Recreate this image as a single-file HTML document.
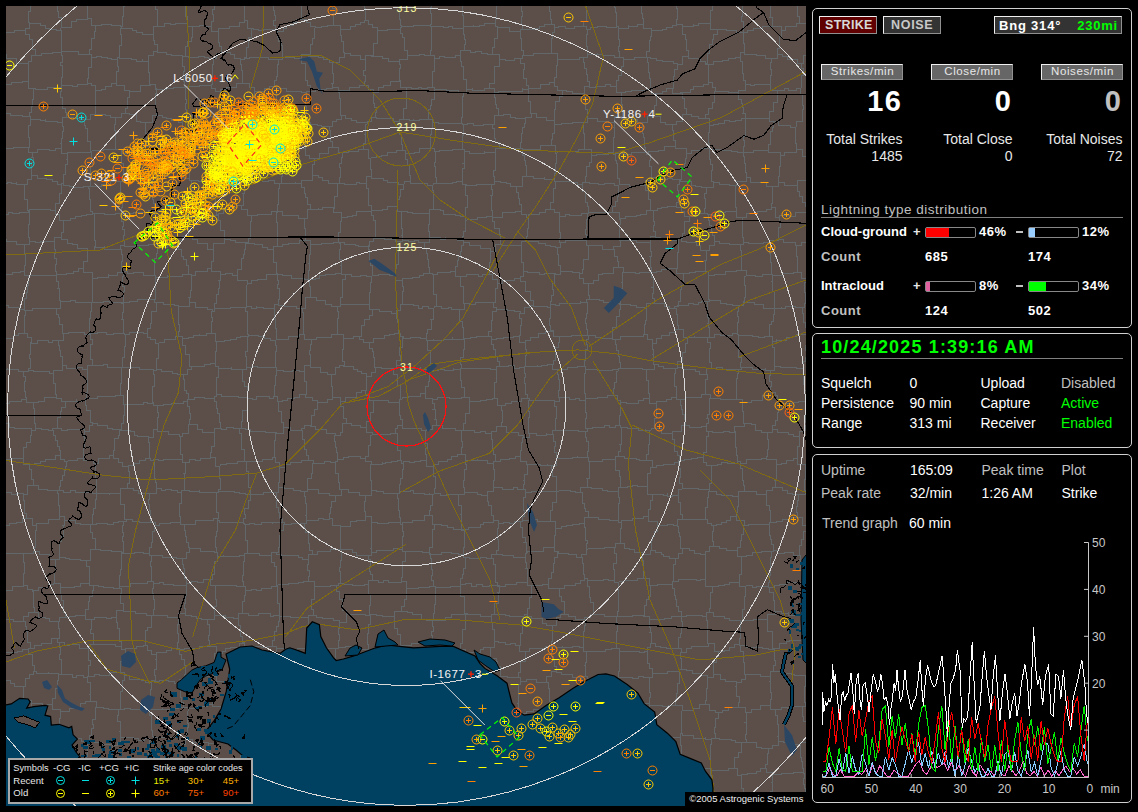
<!DOCTYPE html>
<html><head><meta charset="utf-8"><style>
html,body{margin:0;padding:0;background:#000;width:1138px;height:812px;overflow:hidden;}
body{position:relative;font-family:"Liberation Sans",sans-serif;}
.t{position:absolute;white-space:nowrap;line-height:1;}
svg{position:absolute;left:0;top:0;}
</style></head><body>
<svg width="1138" height="812" shape-rendering="crispEdges">
<defs><clipPath id="mc"><rect x="6" y="6" width="800" height="800"/></clipPath></defs>
<g clip-path="url(#mc)">
<rect x="6" y="6" width="800" height="800" fill="#5c4f4a"/>
<g fill="none" stroke="#62676a" stroke-width="1" shape-rendering="crispEdges"><path d="M-10 334v3h4h4v4M-2 341v6v5h-1v6v7h1M808 739v-6h-2h1v-5v-7h-1h-3v-5h-1v-4v-6h-1M808 739v3h-4h-4v4M800 746v-2h-7v-1h-4v-1h-6v-1h-5M778 741v-5h-1h1v-5v-7h-1v-5v-4h-2v-6h1M801 706h-4h-6v1h-4v2v-2h-6v2h-5M804 804v2h-3M-5 183v4v5h-2v5h1v5h-1v7v4M-2 365v4h3M1 369v6h-1h-4v5v6h-4v4h-1v6M4 423h-4v3h-4v5M4 423v-6h-1v-5h1v-6h-1M3 406v-2h-5h-2v-4h-5v-4M-3 493h2v-1M-1 492h1v-7v-5v-6h1v-4h3v-5v-6M4 459h-3v-2M-4 431v4h1h2v6h-1v5h1v7h2v4M-1 521h1v-6v-6h-2v-4h1h-2v-7v-5M4 423h5v2v2h5v1h7h5h5v2M23 458v-7v-4h3v-5h2h2v-7h1v-5M23 458h-7h-5v1h-7M61 237v2h6v4h5v1h5v4h4h6v2M61 237h-7v5M87 250v7v4h-4v7M56 276v-5h-1v-7h1v-6h-2v-5h1v-4h-1v-7M56 276M56 276v-2h5h5v-1h7v-2h5v-3h5M-10 334v-6h-2v-6v-5h1v-7M-2 341h6v-1v-2h4h5v-2v-1h5v-2h6M-11 310h5v-2v-4h4M-2 304v1h5h5v1v1h7h5v2h4M24 309v1h2M26 310h-1v5h-1v6v7h1h-1v5M34 -5v5h-5M29 0v-2h-5h-5h-6h-5v-1h-6v-1h-5M1 52v3h-4h-6v6M1 52v-7v-7h1v-5h1M3 33h-4v-5h-6v-4M-3 -4v4h-4M801 706h4v-4M804 773h-1v-1M803 772v-4h-1v-7h-1v-4h-1v-5v-6M804 804v-5h1h-2v-4h2v-7h-1v-4h-1v-6h1v-5M805 702h-1v-6v-5h1h-1v-5h1v-6v-4M810 672v4h-5M774 365v-7v-6v-5h-2v-6M774 365v1h6v1h5h7h4v1h7M772 341h4v-2v1h7h3v-3h6v-1h4v-2h6h5v-1M803 368v-7h2v-4h1v-7h-1v-5h1v-6v-5h2M807 333v1h1M803 368M734 431v1h-5v-1h-6v1h-5h-6v-1h-4M734 431h1v6v4v6h1v4h1h-1v4h1v6M737 461v2h-6h-4v-1h-6v2h-4v1h-6M711 465h-5v-3h-3v-5M703 457v-5h3v-4v-7v-5h2v-5M734 431v-5h4h6v-3M744 423h-1v-7v-5h-1v-6M710 398h-1v5v4v7h-2v4h-1h2v5h-2v5M710 398h6h4v1h5h7h4M736 399h6v6M708 431h-2v-3M767 432h5v-3M767 432h-6v-2h-6v-3v-3h-4v-1h-7M770 392v3h-6h-2v1v4h-6h-5v2h-5h-4v3M770 392h5v3h2v4v4h4M772 429v-4h3v-5h2v-8h1v-3h1h2v-6M805 401h-1M805 401h1v-6v-5h-2v-6h1h-2v-5v-6v-5M770 392v-6h1v-5h-2v-6h1v-5M770 370h4v-5M781 403h5h7v-1h5v-1h6M772 429h5v3h6h5v1v1h5v2h6M804 401h1v4v7v3v7h1v3h-1v6M799 436v-5h6M462 -2v1h-5h-6v-1v-2h-6v2h-7h-5v-1M462 -2M433 -3M492 -4h-5v1h-6v-1h-4h-6v1v1h-3h-6M405 -6h5h7v1h5v1v1h5h6M25 244h-1v5v5h1v6v5h-1v6M25 244h-6h-3v-2v-1h-7h-3v-2h-6M24 271h-4v1h-8v2h-3h-6v1h-6M0 239v2h-3h-5v4h-4v4M-12 249v5v6h3v6h-1v6h2M-8 272h5v3M28 275h-4v-4M28 275h6h4h6h7h5v1M54 242v-1h-4h-5h-5v1h-5v-1h-6M29 241v3h-4M-2 304v-5h1h-3v-7h2v-4h-1v-7v-6M24 309v-5v-6h2v-6h1v-7h1v-5v-5M-3 217v-4h-4M-3 217v7h3v3v6h-2h2v6M23 494v-1h-7v1h-5v-2h-6h-6M23 494v6h1v5v8h2v5M-1 521h5v4M26 518h-4v2v2h-6v1h-7v2h-5M1 369h6v-1v1h4h7v3v-1h5M3 406v-3h6v-2h7h5v-2h5v-2M23 371v5h2v5h-1v6v4h1v6h1M23 494h4v-5v-4h6M23 458v6h6M33 485v-6h-2v-5v-5h-2v-5M89 333v1h-5v-2h-6h-5h-5v2v-1h-5M89 333v-6v-4h1h-1v-5h1v-7h1v-3v-6M63 333h-1v-4v-5h-3v-7h-1v-3h-2v-6h-1M91 302h-6h-5h-5v-2h-5v1h-5h-5v-1M60 300v8h-5M56 276v5h2v7h-1h2v6v6h1M26 310h6v-2h5h6h7h5M88 -6h5v-1v1h5h6v1h7h4v-1h7M-7 24v-5h-1h2v-6v-7v-6h-1M776 709h-6v-4M775 671h6v2h4h6v1h3v1h5h6v1M775 671h-5v5M770 676v5h-1h1v8v3h1v7h-1v6M767 432v7h1v5v5h-1v7h-1M737 461h3v2M740 463h6v-2v-2h5h4h6v-1h5v-2M769 525v4v6h1v4h1v5h2v6M769 525v-1h-5h-5h-5h-6v1h-4M744 525h-1v6v3h-2v6h-1v7h-2h-1v4M772 551h-4h-7v1h-4h-5v1v2h-6v1h-5M772 551h1v-1M741 556h-4v-5M769 587v5h1h3v8h1v6v5h1M769 587h5v-2h5v-1h7v-2h6h4h6v-2M775 611h6v2h7v-1v3h4h7h5v1M802 580h2v2M804 582v6h1v6v5v6v4h-1h1v6M804 616v-1h1M800 555h-1M800 555v4h-1h1v5v6h2v6v4M799 555h-6v-3h-3h-6v1h-7v-3h-4M768 586v1h1M768 586v-4h1v-7h1v-5v-5v-3v-5h1v-6h1M810 648h-4v-7h-5v-4M801 637v-6h1v-5h1h-1v-4h2v-6M801 637v3h-6h-6v1h-3v2h-7v4v1h-5M775 611v3h-5h-3v5M767 619v6v6h3h2v5v7v5h2M775 671h-2v-6h2v-5h-1v-6v-5h-1M810 672v-5h1h-1v-7v-6h1h-1v-6M773 649h1v-1M770 676h-4h-6v-2h-6h-3h-6M745 674h-1v-6v-6h-1v-6v-5h-3v-6M773 649h-5v-1h-6v-1h-6v-1v1h-4h-6v-1v-1h-6M768 336h4v5M768 336h-4v1h-6v-1h-6v-1h-3h-6h-5v-1M770 370h-5v-2v1h-6h-7v-1v-1h-5h-6M738 334v6v5h1h-1v6v6h3v5h-1v5h1M736 399v-5v-5h1h-1v-5v-6h2h-1v-5h1v-4M738 369h3v-2M802 87h-1v1M803 121h-1v-5v-7h1v-4h-1v-6v-5h-2v-6h1M250 -10h6v1v1h7h5v2h5M273 -6v-2h4M405 -6h-6v7M369 -4h6h3v1h6v1h6v1h4v1v1h5M343 -12v2h5v1h5h5v4h5v1h4v2M369 -4v2h-2M430 24h1v-6v-5h-1v-6h1v-5h2v-5M430 24v1h-5h-6h-6v1h-6h-6v-1M399 1v5v7v6h1v6h1M250 -10h-6v7M244 -3v-1h-5h-6v1h-6v-1h-5v-1v-1h-6M216 -6M159 -7v-1h6h4v1h4h6v-1M216 -6h-4h-7v2h-5h-5h-6v1v1h-5M179 -8v6h5M491 184h-5v1v-1h-5h-5v1h-4h-6v-1M491 184h3v-3M466 184h-4v-3M494 181v-5h-1v-6h2v-6v-6v-6M495 152h-5h-6v-1v2h-4h-6h-5v-2h-5v1M462 181v-6v-7h2v-5h-2h2v-4v-7M90 333v6h2v5h-2v5v4v6h2v6M90 333h7v-1h5h4v2h7v-1h4h7M92 365h6h5v-1h4v3h5h6h4M122 367v-6h1h-1v-4h2v-6v-5h1v-6v-6M124 333v1h1M489 88h-5v1v1h-6h-6v-2v1h-6M489 88v-5h2h3v-5v-7v-5h3h2v-6M499 60v-6h-7M466 89v-5v-5h-3v-6v-7h-2v-5h-1v-6M460 55v-5h4M464 50h6v1v1h5v-1h6v2h6v1h5M430 24v2h2M462 -2v6v5v6h1v6v6M432 26h6h5v1h5v-1h4v2h7h4M463 27v1M562 90v6h-2h-1v5h-4v3v5h-1v6v5h-3M562 90h4v1h6v2h7h5M582 122h5v-4M582 122h-6h-4v1h-7h-4v1h-7M554 124v-4h-3M587 118v-4v-5h-2v-6h1h-1v-6h-1v-4M562 90h-5v-4h-3v-4M554 82v-5h2v-7v-5h1v-5M583 57h-4v2h-7h-4h-5h-6v1M583 57v5h1v6h2v6h1v7h2v5M589 86h-5v7M489 88h5v4M499 60v-1h6v1h3h6v-2h6M520 58v5h1h3v6h-1v5v4h3v7h2v4M494 92h4v-1h7h5h6h6v-3v1h6M551 120h-5v-2v-1h-5h-5v-3v-1h-5M554 82h-5v2h-4h-5v2v2h-5h-6v1M531 113h-1v-5v-7h-1h-1v-6v-6h1M520 58h2v-3M522 55h6h5v-2h6h6h5M557 60v-7h-7M528 89h1M4 525h1v5v5h-2v5v5h1v6h1M-2 554v-3h7M-2 554v5h-1v5h-2v7h-1v5v6v5h-1M-3 617v-7h1h1v-5v-5v-6M-7 587v7h6M24 333h3v4h4v5M63 333v7h-5M31 342v1h6v-3h6h5v2h4v-1v-1h6M23 371h5v-3M31 342h-1v5v7h-1v4h1v6v4h-2M92 365h-5v4M122 367M120 395v-5v-7h1v-4v-6v-6h1M120 395h-5v1h-6h-7h-5v2h-6h-5M87 369v6v6v5v6h-1v6M90 333h-1M58 340v5h1v5h1v6h2v3v6M87 369h-5v-2h-5v1h-6h-5v-3h-4M28 368v2h5v1h5h6h5v2h4M62 365v5h-6h-3v3M-5 183v-1h1M-7 153v6h1h1v6v5v6h1v6M61 28v-1h5h5v-3v-3h5v-2h6h5v-1M61 28v-4v-7h-3v-6h-1v-3v-5h-1v-6h-1M87 18v-6v-5v-5h-1v-6M86 -4v-2h-7h-5v-1h-7v-3M67 -10h-6v5v2h-6M88 -6v2h-2M34 -5h4h7v1v1h6h4M29 0h1v5v6h-2v5v6h1M61 28h-1v2M60 30h-4v-1h-7v-1h-4v-3h-5v-2h-7h-4v-1M3 33v-1h6h5v-2h5h6v-2M25 28h4v-6M745 674v5h-4v3h-5M736 682v4h-1h1v7v3h3v6h-1v5M770 705h-5h-5v4h-5h-4v2v1h-6M745 712v-5h-7M-2 809h1v-1M-1 808v-5h1v-7v-6v-5h-2v-6h1v-5M-1 774v-4h-3h-5v-2M30 801h-5v1h-6h-5v2h-5v1h-4v1v2h-6M26 740v5h-1v6h-1h1v5v6v7h-2v5M26 740v-2h-5h-6v-2h-4h-5v-1M23 774v-1h-5h-7v1h-6h-6M-9 768h1v-6v-5h1h-1v-4h2v-6h1v-5M6 735v3h-6h-5v4M-6 680v7h-1v5v4h-3v7M6 735v-5h-1v-6h1h-1v-4v-5M-10 703v5h6h3v2h6v5M652 585h5v-1h5v1v-1h6h4M652 585h-2v6v5h-2v3h-1h-1v6h-2v7v4h-1M672 584v4h2v7h1v4h1v7h2v5h2h1v5M681 616M681 616h-5h-5v2h-7v1h-5h-4h-6v1M643 616h6v4M366 808h-6v-2h-6v-3h-5h-5h-5v-2M339 801v1M300 810h2v-4v-5h5v-4h2h4v-5M339 802h-5v-1h-6v-3h-6v-3h-3v-1h-6v-2M-6 680h4v-3M26 700h-5v2v5h-5v3h-4h-3v1h-4v4M26 700h-3v-7v-7h-2M-2 677v3h6h6v1v2h4v3h7M744 491h5h7v3h5h5M744 491h-6v5M769 525v-3h2M744 525v-5h-4h-4v-4M738 496v4v6h-1v6h-1v4M771 522h-1v-6v-6h-1v-5h-2h-1v-7v-4M711 465v5v8v5h-2v6M740 463v5h2v7v5h1v5h1v6M738 496h-6v-1h-4h-7v-1h-5v-2v-1h-6M709 489v2h1M703 457h-6v1h-6v1h-7v1h-5M678 462v-2h1M678 462v6h2v5v4h-1v6h2h1v6M709 489h-6h-5v-1h-5h-5h-6v1M736 682v-1h-6h-5v-2h-5v-2v-3h-7M740 645h-1v-1M713 674v-5v-7h3v-6h2v-5M739 644h-5v1v2h-5v3h-5v1h-6M652 467v-7h-6M652 467h4v-2h7v-1h4h7v-2h4M679 460v-5h-2v-4h-2h-1v-7v-5h-2v-5M651 430h-2v6v3v5h-1v6v4h-2v6M651 430v-2h3M654 428h7v3v2h4h7v1M706 428v-2h-5v1h-6h-6v-2h-4M685 425h-4v2v4h-5h-4v3M588 335v4h-1h-1v5h1v5h-2v6v5h-1v6h-1M588 335h7v2h5v1h7h5M585 368v1h5h7v1h5h5h5v-1h6v2M585 368v-2h-2M614 339h-2v-1M614 339h1v5h1v6h2v6h1v6h1v6M620 368h-2v3M643 334v2h-6h-5h-6h-6v3h-6M643 334h4v5h5v4M646 369h-4v-1h-8h-3h-7h-4M646 369h8v-5M652 343v6h1v5h-1h1v4v6h1M308 581v-5h1v-6h-2v-6h1v-5M308 581h6v7M314 588v-2h5h6h5v-1h6M308 559v-5h4M341 549h-5h-6v2h-7h-6v3h-5M341 549v6v5h-1v7h-1v4h1v6v6h-2M338 583v2h-2M775 308h-1v-7v-3v-7h1h-3v-6v-4h-1h1v-6M775 308h6v-1v1h4v-2h5h5v2v-1h6M801 307h3v-4M804 303h1v-5v-6h1h-2v-4v-6h2v-4M772 275h6h4v-2h5h6v-1h5M806 278h-5v-3v-3h-3M774 309v-1h1M774 309v-1h-6h-5v-2v-2h-4h-5v-2h-5h-6v-1M743 301h1v-4h1v-5v-7h-1v-3v-6h2M746 276v-1h4h5v1h7v-2h4h6M772 274v1M768 336h1v-6v-6h2v-3h2v-7h1v-5M807 333v-6h-1h-1v-5h-2v-4v-5h-1v-6h-1M772 274h-1v-6v-6h-1v-4v-5h-1v-6h1v-5h-1M795 245h1v6v5h1v5v7v4h1M795 245v-3h-5h-7v-3h-5v-2M778 237v3h-4h-5v2M807 239v3h-6v3h-6M738 334h-1v-1M743 301v4h-5M738 305v6h-1v5h1v6h-1v6v5M677 306h1v-5h2v-6v-6h1v-4h1h1v-7v-5h1M677 306v-1h5h6v-1v-1h5v1h5v-2h3v-1h6M707 301h2v-2M709 299h-1v-7v-4v-8v-5M684 273h5v-1h6v1v-2h4h5M704 271h4v4M738 305h-6v-1h-6v-1h-6v-1v-2h-6h-5v-1M737 333h-5v2h-6h-6v-1h-6v3h-5M709 337v-4v-6h-1v-4h-1h1v-6h-1v-5v-6v-5M741 270h5v6M741 270h-5v1h-5h-6v1v2h-6h-5v1h-6M643 24v4h4h4v3M643 24v-6h-1v-5h-1v-6v-4v-5h-1M651 31v-1h5h6v-1h4v-2h6v-2h4v-1M676 24v-5h1v-7v-4h-1v-7h1M677 1h-6v-3h-5v-1h-6v-1v-3h-5v-1h-6M640 -2v-3h3h6v-3M811 214v-2h-4M807 212v-6h-2v-4h-3v-6h-1h-2v-5h-2v-6M808 178v2h-5h-6v5M809 156v5v7v5h-1v5M807 239v-6h2h-1v-5h2v-3v-7h1v-4M779 217v-2h5h5v1h6v-2v-2h7h5M779 217v4h1v6h-2v5v5M773 186h5v-4M773 186h-1v6v4v7h-1v4M779 217h-4v-6v-4h-4M778 182h6v2v1h7h6M646 57v-6h3v-4v-7h1v-4h1v-5M646 57h4v1h6v2h6v1h5h6v2h4v1M682 28v-4h-6M682 28v6h3v5h1v5v6h2v6M688 56h-6v3v5h-5M717 29v5h-3h-1v5h-1v5h-3v4v5h-1h-1v6v4h-2M717 29h-7v-7M710 22v1h-5h-7v2h-5v-1v2h-5h-6v2M688 56v2h6h6v3h5v2M740 57v-5h4M740 57v4h2v8v4h2h-1v7h2v4M770 85v-1h-6h-4h-6v1h-4v-1h-5M770 85v-5v-5h1v-6h-1v-7h1v-4M771 58h-6v-3h-4h-5v-1h-6h-6v-2M808 -11v4h-3v4h-5v3h-3M797 0v-1h-7h-5v-3h-6v-3h-5v-2M620 -8v2h6v2h4v2h5h5M497 1h5h7h7v-2h5v1M497 1h-1v6v5v5h-1v6M521 0v5v6h1v5h-1v8h1v5M495 23v3h2M497 26v1h5h7v2v2h5h6M522 29h-2v2M492 -4v5h5M530 -7h-5v4h-4v3M463 27v-1h6h4v-1v1h6v-1h5v-2h6h5M464 50v-6h1v-5h-1v-5h-1v-6M492 54v-7h2v-4v-5h2h1v-8v-4M522 55h1v-5h-2v-7v-5h-1v-7M620 -8v4h-5M615 -4h-6h-4h-6h-5h-6M551 24v-5h-1v-8h-1v-6h-2v-5M551 24h3v3M554 27h4v-1h7v2h4h5v-2h4h6M560 -8h5v3h5h6v2h5v1h5M560 -8h-4v2h-4v3v3h-5M586 -2h-1v6h1v5v5v7h-3v5h1M530 -7h5v3v2h6v2h6M522 29h6h7v-1h4v-1v-1h5v-2h7M550 53h1v-4v-7v-4h1v-6h1h1v-5M588 -4v2h-2M122 -6v6h4M159 -7v7h-6M153 0h-6v1h-5h-5v-2h-5v1h-6M87 18h4v3v4h4M95 25h6v-1h3h7v2v-1h4h5v1M126 0h-2v6h-1v3v7h-1v4v6h-2M184 -2v5h1v7v6h2v5M153 0v4h2v5h2v7v5v5h1M187 21v2h-5h-7v1h-5v-1h-6v3h-6M120 26h1v2M121 28h5h6v2h4v1v1h6v2h7h4M153 34v-8h5M427 340h6v-1v1h3h7v-1h4h5v-2v2h6h5v-1M427 340v4v6h2h1v6v3v6h1v5M431 370M431 370h7v-1h6v1h4h5v-2v1h7M461 368h-1v1M461 368v-4h-1v-7h2h1v-5v-3h1v-7v-4M464 338h-1M432 274h5v-1v-1h6h7v-1h5v-1M432 274h1v4v7v5v4h2h1v6v6M436 306h5v2h7v-1h3v2h7M461 276h-1v4v6h3v7h1h-1v4v6h1M461 276h-6v-6M464 303v6h-6M402 280v-2h6h4v-1h7v-2h4v-2h7M402 280v6h1v5h-1v6v7M402 304h6h5v1h5v3h4v-2h6v2h6M434 308v-2h2M430 273h2v1M426 339v-6h1v-4h1h3v-7v-3h-1h3v-6v-5h1M426 339v1h1M463 338v-5v-6h-1v-6h-3v-5v-7h-1M402 280h-7v-5M430 273h-1v-6h-1v-5v-3h-1v-6h-1v-5h-2v-6M424 242h-6v-2h-4v2v-1h-6v-1h-6M395 275v-7h1v-4h2v-5v-6v-7h2v-5M402 240v1h-2M490 251h5v-4v-3h7M490 251v-3h-7h-3v-2v-1h-6h-5v-3h-6v-1M502 244h-2v-6v-4h-1v-6h-3h-2v-7h-2v-4M467 220h-2v4v7h-1h-1v5h-1v4M467 220v-1h5h5v-2h6h3v1v-2h6M492 217v-1M463 241v-1h-1M489 274v-7v-5h1v-5v-6M489 274h-7v2h-4v-1v-1h-7h-5v3v-1h-5M455 270v-4h2v-6h1v-4h2v-5h1v-6h2v-4M491 184v5h1v6h-2h1v4v6v5h1v6M466 184h-1v6v5h2v6v6h-2v6h1h-1v5M465 218v2h2M494 181h6v1h6v1h4v3h6M516 186v6h2v6h1v6h2v5M521 209v2h-6v1h-5h-3h-5v3v2h-4h-6M424 242h5v-5M429 237h6h5v2h5v-2v1h5h7v3v-1h5M462 181h-6v1h-4v1h-6h-5h-5M436 183v-6h-1v-5v-6h-1v-4h1v-6v-5h-1M464 152v-3h-2M462 149h-6h-4v1h-7h-6v1h-5M156 368v1h5v2h6h5v2h5v1h6M156 368v-6v-4h2v-4h1h-1v-7v-4h1M182 338v-2h-3M182 338v7h3v3v6h3h1v6v6h2M191 366v3h-4v5h-4M159 343v-1h5v-3h4h7v-1v-2h4M122 367h6h5h6v2h4h5h5v1M153 370h3v-2M125 334h4v-1v-1h7h7v1h4M159 343h-4v-4h-5v-2h-3v-4M521 209v5h5v3h2M521 245h-6h-7h-6v-1M521 245v-4h5M526 241v-5h1v-8h1v-4v-7M646 152h-6h-6h-3v2h-7v-1h-5h-4v1M646 152h-1v-5h-1v-6v-4h-1v-4h-1v-6v-5M642 122h-5v-3h-5v-1h-6h-5v-2M614 122v-6h7M614 122v5h-1h1v4v6h-1v5v4v6M613 152v2h2M645 185v-5h4h2v-3M645 185h-6h-4v1h-6v-1v-1h-6h-4M646 152v2h2M648 154h2v6h-1v6h2v4v7M615 154v6h1v3h1v6v5h1h-1v4h2v6M432 26h-1v6v6v5v7h-1v5M460 55h-5v1v1h-7h-4v-1h-5v2h-5M430 55h4v3M492 124h2v-5v-4h4M492 124v4h2v5v5h1v4h2h2v6M498 115h5v-1h7v1v2h5v1h5h5v-1M525 117v6h-1v4h-2v6h-1v4v5h1h-2v6M499 148h4v1v-1h6h7h4M495 152v-4h4M462 124h1v6v5h-1v4v4v6M462 124h5v-1h6v2h5h5v-1h4h5M494 92v5h1v7h1v4h2v7M531 113v4h-6M551 145h-5h-6v2v2h-6h-7h-5v1M551 145v-6h1v-6h2v-4v-5M522 150v-2h-2M522 150v5h2v5h1v5h1v5v6h1M516 186h6v-5v-5h5M-9 61h1v5v7h-1v5v4h1M-7 153h4v-6M-3 147h-1v-6v-4h-2v-7h-3v-5h-1M-8 82h7v4M-1 86h2v7v4v5v5h3v6M-10 125v-5h5v-3h6h3v-4M-3 217v-1h6v-2h5v-2h4v1h7v-1h4h5v-2M-4 182h6v1h5v-1h4v1h5v-1v2h6M22 184h2v5v5v5h3v6v5h1M29 241v-4h-1v-5v-8h1v-5v-3v-6M28 210h1M117 59h-6v-1h-4v-1h-6v-1h-5v1h-5v-1M117 59v7h1v5h-2v5v7M95 90h6v-1h4v-3h6v-2v-1h5M95 90v-5h-4v-2h-4M87 83v-5h1v-6v-5h2h1v-6v-5M95 25v6h-1v7h-2h-1v4v7h-2v5M119 57v-6v-6h2v-5v-6h-1v-6h1M119 57h-2v2M89 54h2v2M803 772h-5h-5v1h-5h-7v1h-3h-6v2M778 741v4h-6v3h-5M772 776v-4h-2h-4v-4M767 748h1v5h-1v6v5h-2v4h1M745 712h1v4v6h-2h2v5v7h-1v5h1M767 748h-6v-1h-5v-4v-1h-4h-6v-3M743 799h5h6h6v1h5v2h5M743 799v4h-6M771 803h-1v-1M772 776v6h-1h1v5v4h-2v7h-1v4h1M766 768h-6v2v1h-4v2h-5h-4v1h-6v1M741 775v7v6h2v5v6M713 803v-1h6h6v2h5h7v-1M801 806h-4v-1h-6h-6v-2h-5h-4v1v-1h-5M26 740v-2h4M26 700h5v3M30 738v-4h1v-7v-3v-6h-1v-5h1v-4v-6M58 675v5h-1v8h-2v4v6h-2h-1v6M58 675v-2h-6h-4v-1v1h-7h-5v-2M36 671h-3v3h-4v4h-4v4v4h-4M31 703h5v1v-1h6v2h5v-1h5M23 774v1h1M30 801v-2h2M32 799v-6h-2v-3v-5h-3v-4v-6h-3M88 801h-5v-1h-6v-1v-2h-5h-3v-1v-1h-6M57 800h6v-5M469 402v-5h-4M469 402v5v6h-1h-3v4v6h-2v6M465 397h-4v1h-6h-6v-1h-6h-6v2h-5v-1M463 429v1h-2M461 430h-6v-1v-1h-3h-5h-5v-3h-6M432 398v5h2v6h-2h3v6v4h-1h2v6M425 392v-6h3v-5h1v-5v-6h2M425 392v6h7M460 369v6v5h1v7h3v5v5h1M585 368v5h-1v4v6v5v5h1v5M618 371h-2v6v5h-2v6h-1v7M585 398h5h7v-1h5h5v-2h6M583 366h-6v1h-5h-5v2h-5h-5M559 397h-1v-7h1v-4v-7h-1v-5h-1v-5M559 397h5h5v2h6v-1h4v1v1h5M585 398v2h-1M646 369v5v6h1h1v6v7h1v5M649 398h-6v1v1h-5v3h-7h-5v-1h-6v2M620 404v-4h-3v-5h-4M518 801h6v-6M524 795h6v3v1h4v3h7h4v3v2h6M435 804h5v-1v1h6h4h6v-1M618 805h-5v-2h-6h-3h-5v-1h-5v-1h-6M518 801h-6h-5h-5v1h-6v1h-5M587 798h1v3M587 798v-1h-6v2h-5h-7h-5v-2v1h-6M551 807v-5h4h3v-4M618 805h3v-1M621 804h5h6v1h4h6M366 808h4v-4h2v-5v-4h5M398 800v-1h-5h-5v-2h-7h-4v-2M435 804h-2v-3M433 801v-1h-6v1h-4h-6v-2h-4v-1v2h-7h-5v-2M398 800v-2h3M366 769h-5v2h-6v2v2h-6M366 769h5v4M349 775h-2v5h-3v5v5h-2v6h-1h-2v5M371 773v6v4h3v6h2v6h1M349 775h-6v-5v-2h-5M313 792h-1v-6h-3v-6h-1v-5M308 775v-1h1M309 774h5v-3h7v-2h5h7h5v-1M366 769h2v-7v-4h-2h2v-6v-6M368 746h3v-3M371 773h5h7v-3h4v-1h5v-2h7h5M371 743v-1h6v1h4h4v1v-1h6v-1h4h6v1M401 743v6v6h1v6h1h1v6M401 798v-6h1h2v-5v-5v-7h3v-5M404 767h3v3M587 798v-5h2h-1v-6v-5h2v-6M621 804v-6h-2v-4h1v-6h-1v-6v-4v-5h-1M618 773h-5v1h-5v1h-7h-5v1h-6M153 402v1h-6v-1h-4v2h-6h-6v1v-1h-4M153 402v3h4M157 405v7h1v5h-1v5v7M127 404h-3v4v7h-1v5v3h-2v6h-2M157 429h-4v3v5h-5M148 437v-1h-5h-6v-1h-3v-2v-2h-4v-1h-5h-6v-1M119 429M120 395h3v6v3h4M153 370v4h1v8v4h-2v5h1h-1v7v4h1M188 399v-6h-2v-3h-2v-6v-5h-1v-5M188 399h-1v2M187 401h-4v2h-6h-6v1h-3h-5v1h-6M86 398h-1v2M85 400v5h1v5h2h2v6v6h2M92 422v1h5v2h6h4v2v1h5v1h7M150 458h-1v-5v-6h1h-1v-5h-1v-5M150 458h-5v2h-6v3h-5v2h-6v1M128 466h-6v-4h-4v-4h-5v-3M113 455v-5h1v-6v-6h2h2v-3h1v-6M83 458v2h6h4v3M83 458v-6v-5h1v-4v-7h-1h1v-5M93 463h5v-2v-3h5h6v-2v-1h4M92 422v3h-3v6h-5M-2 677h2v-6v-5h-1v-7h1v-6h1M-1 651h2v2M-3 617h1v1M-1 651h-1v-5v-6v-6h1v-6h-2v-3v-7h1M36 671h-2v-6h-2v-5v-6h-2h-2v-5M1 653v-1h5h5h6v-1h5v-2h6M300 810v-1h-6v-2h-5h-4h-5v-2M308 775h-5h-6v1h-6h-4v-2v1h-7M280 805h-1v-5h1v-6h-1v-5v-4h2v-5h-1v-5M766 456v3h6h4v5M766 494v-4h6v-3h3M775 487v-7h-1h2v-4v-7v-5M799 436v5v5h-1h-1v6v6M776 464h5v-1h5v-1v-2h7v-2h4M804 464h-7v-6M806 525h-4v-4v-4h-5M797 517v-5h1h-2v-6h1v-6h1v-6M805 490v4h-7M799 555v-5v-5h2v-6h2v-4v-4h2h1v-6M771 522h5v-1h6v-2h6h3v-2h6M775 487h7v3h5v3h5v1h6M804 464h1v4v6v5h-1v7v4h1M652 467h-2v6h-3v7v6M647 486v8h5M682 489h-4v6M678 495h-6v1h-5v-3v2h-4v-1h-6h-5M682 548h7v2h5v3h6v1h5M682 548h-2v-5v-7h-1v-4h-1v-6h-1M677 526v-7h7M684 519h7h7h5M711 525v-2h-4v-4h-4M711 525h2v6h-1v5v5h1v5M713 546h-4v5h-4v3M705 579h-5v1h-4v-1h-6h-6h-6v2h-4M705 579v-4v-7v-4v-5v-5M674 581h-1v-6v-7v-4h2v-6h-1M674 558h4v-5h4v-5M710 491h-2v6h-1v5v5h-1h-1v7v5h-2M678 495v7h2v6v6h2v5h2M736 516h-6v2v2h-4v2h-5v2h-5v1h-5M737 551v-1h-7h-4v-2h-7v-2h-6M742 619v2h-2M742 619v-6v-4h2v-6v-7h1v-4v-6h1M740 621v-1h-4h-7v-2h-5v-1v-1h-5h-6v-3v-1h-4M709 612v-4h1v-5v-7v-4h1h1v-6M712 586h6v-1h6v-1h5v-1v-1h3h7v-2M739 580v6h7M767 619h-4h-5h-5v1h-6h-5v-1M739 644v-6h1v-5v-6v-6M768 586h-5h-7v1h-4v-2h-6v1M708 643h6v3v5h4M708 643h-1v-5v-6v-6v-6h-1v-5M706 615v-3h3M672 584v-3h2M681 616h5v-1h5h4h7v1h4v-1M705 579v7h7M741 556v6h1h-1v5v7h-2v6M674 308h-5v-2h-5v-3h-5h-5M674 308h2v6h1v4v7h1v4h1M643 334h1v-4v-6h1v-4h1v-6v-6M652 343h4v-2v-3h5v-3h5h3v-2v-1h6v-3h4M654 303h-8v5M612 338v-7v-4h3h1v-6v-5h1h2v-7h1v-5M646 308v-1h-5h-5v-1v-1h-6v-1h-4h-6M738 369h-5h-7h-4v-2h-6v1h-5M709 337h-1M708 337h-1v5h3v6h-1v4v6v4h2v6M674 308v-2h3M679 329h4v4v4h5M708 337h-5h-6h-3v-1v1h-6M676 268v5h8M676 268h1v-6v-6v-4h1v-5v-7M706 250h-6v-1v-4h-4v-3h-5h-5v-1h-5v-3M706 250v5v5h-2h1v6v5h-1M678 240v-2h3M645 185v5h3v4v5h2v6v5h1M679 179h-7v-1h-5v1h-5v-1h-6v-1h-5M679 179h1v1M651 210M651 210h6v-2h4v-1h6v-1h4h5v1M680 180h-1v4h-2v6h1v6v6h-1h-1v5M655 236v-5h-2v-6h1v-4h-1v-5v-6h-2M655 236v1h5v1h6h6v1v1h6M681 238h1v-5h2v-7v-5h3h2v-5M676 207h5v4h3v3v2h5M338 583h5v1h5h4v1h5h7v-1h4M336 585v6h1h2v5v3h3v7v4h3h1v6M368 584v4v6h1h1v6v5h-1v5v4h1M370 614M346 616v-2h5h6h8v1h5v-1M314 588v6v5h-2h-1v5v5h2v6h-2M346 616v6h-7M311 615h5v2h6v1h7h4v2h6v2M370 614v5v5h-1h-1v4v5h-1v7v4h1v5h-1M367 649h-6v-1h-5v-2h-7h-4v1h-7v-2M339 622v6h-1v6h1v6h-1v5M58 675v-1h3M52 704v5h4h4v4M90 701h-5v2h-5v2v2h-5v1h-6v3h-4h-5v2M90 701v-7h-1h1v-6v-6h-3v-5M61 674h5h6v1v2h4v-2h7v2h4M341 549M372 580h-4v4M372 580v-6h-2v-3h-1v-5h1v-7h-1h-1v-4M368 555h-6h-6v-3h-4v-1v-2h-5h-6M312 554v-4h-3v-7h-1v-4v-7h-3v-4h-1v-5h-1M306 520v3h-3M306 520h5h7v-2h5v1h6v-1M341 549h-1v-6v-3v-6v-5M329 518h3v5v2h5h3v4M646 57h-6h-6v2h-5h-6v2M646 57h1v5h1v6v4h1v6h1v5v6h1M623 61v5h-1h-1v4v5h-3v5h-2v5M651 89h-4v1h-7v1v-1h-3h-6v2v-1h-6v1h-4M616 85v7h5M656 93h6v-2h4v-3h6M656 93h-5v-4M646 57M672 88h1v-5v-7h1v-7h2h1v-5M654 116v-6v-5h1h1v-6v-6M654 116h-7v3v3h-5M621 116h1v-7v-5h-1v-5v-7M587 118h6h4v1v2h6h5v1h6M589 86v1h6v-1h5h5v-2h5v2h6v-1M711 -3v-1h-5v2h-5v-1h-6h-4h-7v2v-1h-4M677 1h3v-3M710 22v-6v-6h2v-4v-7h1M713 -1h-2v-2M768 149v-5h2v-7v-6h2v-4h1v-6M768 149v3h6h6v5M780 157v-2h4v-3h7h5v-3M796 149v-6h-1v-5v-5v-6h1M796 127h-6v-2h-4h-8v-2v-2h-5M769 117v1h-6h-6h-5v1v-1h-6M769 117v4h4M746 118h-1v7v5v6h-1h-1v4h1v6h-1v6M743 152h4h6v-1v-1h5h6h4v-1M746 177h4v1v4h7h6h3v2v2h7M746 177v-5h-1v-5v-4h-1v-7h-1v-4M778 182v-6h1v-3h1h-1v-7h1v-3v-6M743 152M809 156h-7v-3v-4h-6M803 121h-7v6M801 88h-5v2h-8v-2h-4v2h-7M777 90v6v6h-4v4v5h-1h-3v6M672 88v5h8M705 63v1h1M706 64h2v7v4v7M708 82v2h-5v2h-5h-5v3h-3v3h-6h-4v1M770 85v5h7M745 84v6h-2h-5v3M746 118h-1M738 93v6h3v4h1v4h1v6h-1h3v5M740 57h-5v1h-7v2h-6v1h-6h-3v3h-7M708 82h4v5h3v4M738 93v-1h-6h-4v-1h-7h-6M781 30v6h-2v5v7h-1h-1v6M781 30h4v-1v-3h7h4v-2v-1h4M808 28v-5h-8M808 28v5v6v5h1v6h-1v5M777 54h5v2h5v3h5h5v1v3h4M808 55h-5v4v4h-2M797 0v7h1h-1v3v6h2v7h1M802 87h-1v-5v-7h2v-7h-2v-5M771 58h6v-4M742 32M742 32h1v-6v-5h-1h-1v-5h1v-7v-4h1v-7h-1M742 32h5v-2h6v-2h4h5v-1v-1h5h5M772 26v-6v-3h-3h1v-5v-7h-3h1v-4v-5h-2M766 -4h-7h-3v1h-7h-6M742 -2v-1h1M717 29h6h3v1h7h3v3v-1h6M744 52v-4v-5h-1v-6v-5h-1M713 -1h6h5v-1v-1h5h8v1h5M781 30v-4h-9M774 -9v5h-8M618 28v6v5h1v7h-1v5h1v6M618 28v-2h-2M616 26v1h-5h-5v-1h-5h-4v1h-7v2h-4M619 57h-5v-2h-6h-6v-1h-5v-1v1h-6h-4v-2M587 52v-6h-1v-6v-6h1v-5h-1M643 24h-6v2h-4h-5v-1v3h-4h-6M623 61v-4h-4M615 -4h-1v5v6h2h-1v5h1v4v4v6M584 26h2v3M583 57h4v-5M216 -6v6h-1v5h-1v4h-2v5h1v7h-2v5M187 21v5h6M193 26h6v-1h6v1h6M244 -3v6h-1h1v7v4v6M244 20v2h-5v4h-5h-5v2h-6h-5v3M211 26v5h7M369 245v-4h4v-3h4M369 245v1h-4h-7v-1h-3v-1h-7h-4v-2h-5v1M377 238h-2v-6v-5v-7h-2v-5h-2v-5M371 210v1h-4h-7h-4v2v2h-4v1h-5v1h-6M341 217v4h-1v6v5h-2v6v4M339 243v-1h-1M395 275h-6v-1h-4h-7v1h-6M372 275v-4v-6h-2v-4h-1v-7v-5h-1v-4h1M400 241h-5v-2h-7h-4v-1h-7M466 89v3h-3M462 124v-1h-1M463 92v4h-1v6v6v4v5h-1v6M402 304h-2v6h-4v3M426 339v-1h-6v-1h-5h-5v1h-7v-2M396 313v5h1v4h1v6v5h2M403 336h-3v-3M431 370v-1h-4h-7v-2v1h-5h-4h-5v-1h-5v-1v-1h-5M403 336h-1v5v6h-3v8h1v5h-4v5M188 399h6v-2h4h6v1h4h6v-2M187 401v5h2v7h1v6h-1v5h2M221 428h-1v-6h-1v-6v-3h-2v-5h-1v-7h-1h-1v-5M221 428h-7v5M214 433v-1h-6h-6v-3h-5v-2v-3h-6M157 429v2h5h6v2v1h5h6v2M191 424h-3v4v5h-6v3h-3M153 460v-1h5v1h5v-1h7h5h7M153 460h1v5v5v8h1v4h1v6M156 488h5v2h4v-1h6v1h6v2h4M182 459v3h3M185 462v6v5h-2h1v5v7v5h-1M181 492v-2h2M150 458v2h3M179 436h1v6v6v6h2v5M210 457v1h-6h-4v2h-5v-1h-6v2v1h-4M210 457v-5h1v-6h3v-7v-6M365 516v4h-6h-3v1h-6v3v2h-6h-4v3M365 516v-5h-1v-6v-4h1v-6M329 518v-5h1v-6h1v-6h2h2v-6M365 495h-6v-2v-1h-5h-6v-2v-1h-7M335 495h6v-6M237 275v-6h1h3v-4v-7h2v-4h1v-5h1v-6h2M237 275h-5v-1v-1h-7v1h-5M220 274v-3h-5h-4v-3M247 243v-1h-6h-6v-2h-5v-1h-6M224 239v4h-4h-7v6M211 268v-7h2v-5v-7M178 308v-3h-4v-1h-6h-5v-1v-1h-6M178 308v-2h6h5v-4M189 302v-5h-1h2v-7h1v-5v-5h1h-1v-5M155 277v6v6v6v4h-1M155 277h6h6v-2v1h5h5h5v-2h7M189 274h2v1M157 302h-3v-3M147 333v-5h3v-5h1v-5v-7h2h3v-4v-5h1M179 336h-1v-5h1v-7h-1v-4v-7v-5M211 268h-4v1v2h-6h-6v3v1h-4M213 249h-6v-3v-3h-4h-6v-1v-3h-5v-3h-5M187 236h-5v4h-4v5M178 245v4h1h2v7h2v3h3v6h2v5v4h1M122 271h1v5h-1v6v4h1h1v5h-1v5v6M122 271v1h-5v3h-4h-5v-1v3h-5h-6v1h-5v1M92 301v-6v-5h1h-1v-5v-6M92 301v1h5h6v-1h6v2v-1h5h7v1M121 303v-1h2M83 268v4h3h6v7M91 302h1v-1M124 333h-1v-4v-6v-4h-2h1v-7h1v-3v-6h-2M154 299h-5h-5h-7v2h-3h-5v1h-6M122 271h5v2h6v-1h5h5v2v1h6h5M122 271h-1v-5v-5h1v-7h-1v-5h-1M120 249v-4h4M124 245v1h5h6v-1h4h5h4v-1h6M154 275v-5v-6v-6h2v-5h1v-6M154 244h3v3M155 277v-2h-1M122 271M94 246v4h-7M94 246v1h6h4v-1v3h6h4h6M94 246h1v-6h-1v-4v-6v-7v-5v-5M122 215h-1v6h2v5h-1v3h2v6h-1v5h1v5M122 215v-1h-1M121 214v-1h-6v1h-6h-5v-1h-4h-6M122 215v-2h5h6v-1h4h6h5v-2h6v-1M154 209v5h1v4v7v3v5h-2v7h1v4M178 245h-6h-5v2h-4h-6M182 56v-1h-4h-7v-1h-5v-1v-1h-3h-6v-1M182 56v5h1h-1v5h2v5h-1v6v4h1v5M150 84h5v4M150 84h-1v-5v-7h-1v-6v-5M155 88v1h5h6v-1h7v-1h5h6M184 86v1M148 61v-6h5v-4h4M153 34v6h1v4h3v7M193 26h-1v5v6h-1v4h-2h-2v5h-2v4v6h-2M183 56h-1M119 57v1h6h6v1h5v2h6v-2v2h6M129 92v-2h-5v-5h-3h-5v-2M129 92v-1h5h6v-4v-2h4h6v-1M145 122h7v-3v-4h4M145 122v5v6h1v4v6M156 115h6v2h4v1h5v1v1h7v2h4M146 143v3h6v3h6M158 149h5v-1h8v-3v-1h4v-2h6M182 122v6h-1h1v5v5h-1v4M125 113v-5h2v-6v-5h1h1v-5M125 113h4v1h7v5v2h4v1h5M155 88h1v5h-1v6v5v5h1v6M186 116v-7h-1v-6h1v-4h-1v-7v-5h-1M186 116h-4v6M189 177v-5h-2v-5h1v-5v-6h-1v-4h-1v-6M189 177v1h-5v-1h-6h-5v-1h-7h-4v2h-6M186 146v-4h-5M156 178v-6h1v-5h1v-6h-1v-7h1v-5M186 146v1h5v-1h6h6h6h6v-1M215 145h-1v-5v-7h1v-4h1h-2v-8h1v-5M186 116h5v-1h6v1h6v1h5v-1h7M584 149h7v7M584 149h-6v1v1h-4h-7h-3h-7v2M591 156v6h-2v4h-3v6v4h-1v6h-1M557 153h-1v6v4h-1v6h-1h1v4h-1v6M582 184v-2h2M582 184h-5v-2h-6v-1h-4h-7v1v-1h-4M554 179v2h2M582 122h1v5v6h1v6v5v5M613 152h-5v2h-7h-5v1h-5v1M551 145h4v5v3h2M619 184v1M619 185h-5v-2h-5h-5v1h-6v-1h-3h-6v-1h-5M527 176h6v1v1h4h7v-1v2h5h5M528 217v-3h6h5v-2h6v-3h5M550 209v-7h2h1v-5v-5v-4h2v-7h1M68 461h-2v5h-1v4h-1v5h-2v5h-2v6h-1v4M68 461v-1h5h4v-2h6M93 463h2v6v4h-1h1v5h1v5v4v6h1M97 493M97 493h-5v-1h-5h-7h-5v-1v-1h-5v2h-7v-2h-4M26 518h6v5v2h4M36 525v-2h5h7v-3v-1h5h6v-3M33 485h5v3v1h5h4v1h4h6v3M59 516v-6v-5h-1v-6v-6h-1M29 464h5v-1h6v-2h5v-2h4h6v-2v-2h5M60 455v4h4v2h4M57 493v-3h2M150 522v-7v-5h-1v-6h-1v-5h1v-6M150 522h-6h-5v-1h-7v-2h-6M126 519h-2v-4v-5v-6h-2h-2v-6v-4M149 493h-6h-5v-3h-5v-1v-1h-6M127 488h-7v6M155 526v-1h4v-2h5h6v1v-2h4h6v-1M155 526v-4h-5M180 521v-5h1h-2v-7v-6h1h1v-6v-5M156 488v5h-7M128 466v5h1v5v7h-2v5M97 493h6h6v2v-2h5h6v1M56 394v4h5v3h4M56 394v3h-6h-6v4h-6v1h-5M65 401v6h-1h-3v4h-1v6h-3v5v6h-2M33 402v6h1v4v6v5h1v5M35 428h6v1h7v1h4M52 430v-2h3M53 373v6v4h1h1v5v6h1M85 400h-4v1h-5v-2v2h-7h-4M26 397v5h7M84 431v-2h-7h-4h-6v1h-6v-2h-6M31 430h4v-2M60 455v-5h-1v-4h-2v-6h-2v-5h-2v-5h-1M28 116h-6v-1h-6h-6v-1v-1h-6M28 116h2v4M-3 147h5v1h5h6v-1h4h7h4M30 120v5h-1h-1v6v6h1v5v5h-1M61 237v-5h1h1v-5v-7h1M94 213h-2v-2M64 220h6v-2h5v-2h6v-1h5v-1h6v-3M29 210v-1h5h7h3h6v1h5v-1M64 220h-5v-6h-4v-5M61 50v2h-6h-3v1h-7h-4v2h-6M61 50v1M61 51v4h1v7h-2v3h1h1v6v6h-1v3v6M28 65v5v6h1h-1v5M28 65v-4h3v-6h4M28 81v7h7M35 88v1h7h5v-2h6h6M59 87h2v-1M60 30h1v4v6v4v6M25 28v6h2h2v5h3v6v4h2h1v6M89 54h-5h-6v-2v-1h-6h-4h-7M87 83v1h-4h-6v2h-5v-1h-6h-5v1M1 52v2h5v4h6h4v2v3h7h5v2M-1 86v-1h6v-1h6v-2h5h6v-1h6M28 116h1v-4h2v-6h1v-7h1v-5v-6h2M746 739v3h-4M741 775h-4v-3v-4h-4M742 742h-1v5v5h-3v5h-1h-3v5v6h-1M711 801h2v2M711 801v-6v-5v-5v-5v-5h-1v-5M733 768h-5v1v1h-6h-7h-5M738 707h-4h-6v2v1h-6v2h-4M742 742h-7v-1v-1h-4v-1h-7h-5v-1h-6M718 712v6h-2h-1v4v5h-1v6h1v5h-2M710 769v-5v-4v-6v-5v-5h1v-5M710 769v-1h-5h-5v1h-7h-5v-1h-5M683 768v-5h-1v-6h-1v-4v-8h-1v-5v-5M680 735v-2h2M682 733v2h7h4v3h5h7v-1v2h6M710 770v-1M713 738h-2v1M242 613v-5v-7h2v-6h1v-5M242 613h-4v5M238 618h-5v-1h-8v-2h-5h-6M214 615v-4v-5h1h1v-7h-1v-4v-6v-4h1M216 585h5h5h5h5v1h6M245 590v-4h-3M277 587v-1h-6v2h-6h-4v1v1h-5v-1h-5v1h-6M277 587v5v5v6h1h1v6v6M279 615h-6v1h-3v-2v-1h-6h-6v2h-6h-4v-1v-1h-6M210 579h2v-5h2v-6v-7h3v-5M210 579v6h6M244 555v6h-1v4v6v4h-1v6h1v5h-1M244 555h-5v1h-5h-7h-4v-1v1h-6M681 616v5h1v6h-1v6h-1v4h-2v6v5M649 620v7h1v5h-1h2v6v5h-1M650 643h5v3h5v1h6v1h7h5M708 643v3h-5h-7h-5v2h-5v2v2h-5M678 648h3v4M461 454v-7h1v-6h-1v-5v-6M461 454h-4v2h-6v3h-4v1v1h-6h-3v3h-5v2M433 466h-7v-6M436 425h-4v4h-6v2M426 460v-6h-1v-6h2v-5h-2v-6v-6h1M495 461v-7h-2v-4h-1v-6v-5h-1v-6M495 461h5v-2h5h4v-1h6v-2h5M520 456v-6h1v-8h1v-5h1M523 437v-2h-5v-3h-7h-5v-2v-4h-5M491 433v-2h5v-5h5M461 454h4v4M463 429v1h5h6v2h6v-1h5v2h6M465 458v2h5h7v-1v1h4h6v2v1h6M493 463v-2h2M526 464v-3h-2h-4v-5M526 464h1v6v4h-3v6h-1h1v4h-1v5M493 463v6h1v5v6h-1v7M523 489h-6v-2h-4v2h-6h-5v-2h-3h-6M456 803h8v-5M491 803h-2v-2M464 798h6v1h4h5v1h4v1h6M369 672v-6h-1v-6h1h1v-6M369 672h-6h-4v2h-5h-4v-1h-6v2h-5M370 654h-3v-5M338 645v3h-3M339 675h-1v-5v-6h-1v-4h-2v-6v-6M342 710h-5h-6h-3h-5v-2h-6h-6h-4M342 710h-1v5v7v4h-3v6v6M338 738h-4v3M334 741h-5h-5h-4v1h-6v1h-5v-1M309 742v-6h-1v-5v-5h-2v-5v-4h-1v-6M307 708h-2v3M368 746v-2h-5h-5v-3h-5v1h-5v-3h-5v-1h-5M338 768v-5v-5h-2v-7v-5h-1v-5h-1M309 774v-4v-5v-7v-4h-1v-6h1v-5M309 743v-1M374 679h5h6v1v-2h4h6v2h5M374 679h-3v7v4v6h-2h1v4h-3v7M400 680v5v6h2v7v5v5M367 707h3v4M370 711h7h5v1h6h4h7M399 712v-4h3M369 672v7h5M370 654h5v-2v-1h5h5v-2h6h3v-1v-2h6M407 674v-6h-1v-5h-2h-2v-5v-7v-5h-2M407 674h-7v6M344 708v-6h-1h-1v-4h-3v-5v-5h1v-5h-1v-5h-2M344 708v-1h5v1h7h5h6v-1M339 675v3h-2M427 676h-4h-6v-2h-5h-5M427 676v4h3M430 680v4h-1h-1v7v4v6h-1v4M427 705h-6v2h-4h-5v-1v1h-6h-4v1M371 743v-5h-1h1v-7h-1v-3v-5v-6v-6M344 708v2h-2M401 743h5v-6M406 737v-5h-1v-4h-2h-1v-6h-2v-5v-5h-1M430 736h-6h-7v2h-6v-1h-5M430 736h2v-5h1v-5v-5h2v-6h1M436 715v-5h-4h-5v-5M456 747v6h1v3h-1v5h1h-1v6M456 747v-2h-4v-2h-5h-5v-1h-5v-1h-5v-2M432 739h-2v6h1v5v4h-2v6h-1v7h-2v4M456 767v1h-5v2h-5h-4v2h-5v2v1h-6M431 775v-4h-5M430 736h2v3M407 770h6h6h7v1M433 801v-5h-1v-5h-1v-5v-5v-6M464 798v-6h-2v-4h1h-3v-8v-4v-6h-1M459 770h-3v-3M524 795h2v-6v-6h1h1v-5h1v-6M558 798h-2v-5h-1v-7h-3v-4h-1v-6h-1v-6M529 772h4h5h8v-2h4M590 776h-4v-4v-5h-3M583 767h-4v1h-6v-2h-6h-4v1h-5v1h-5M550 770h3v-2M210 579h-7v1v2h-6v-1h-6v2h-5M207 619h-6v-1h-5v-2h-5v-1h-6v-2M207 619h7v-4M185 613v-5h-1v-5h1v-8h1v-4v-6h-1M185 585h1v-2M214 552v-1h-6h-3h-5v-2v-1h-6h-5v-1M214 552h3v4M189 547v5h-3v6h-4M186 583v-5h-2v-4v-6h-1v-4h-1v-6M155 526h-1v5h-2v7v4h-1v5h-2v6M189 547h-1v-5h-2v-6h-1v-6h-1v-6M180 521v3h4M149 553v2h2M182 558h-6v-1h-4h-6h-4v-2h-5h-6M30 738v1h5h6h6v2h6v-1M60 713v5h-1v7v4v6M53 740v-5h6M24 775h6v-1h5v-2v-1h5h4v-4v-1h5h6v-1M53 740v6v3v6v5h2v5M32 799v1h6h5v1v-2h4h4v1h6M63 795h1v-6h-1v-4v-6v-5M63 774v-3h-4v-6h-4M250 796v3h5h6v2h6v1h4v3h6v2M250 796h-5v3v4h-4M88 801v-1h2M117 807v-2h-5v-1h-5h-7v-2h-6v-1h-4v-1M209 646v-6h-1v-5h1v-5v-6h-1h-1v-5M209 646h7v7M238 618v7h2v6v5h2v6h2M216 653h6v-2h3v-3h5v-1h4h5v-4h5v-1M588 335h-1M557 369h-5v-5M587 335h-6v1v-1h-6h-4v1h-7h-5M559 336v6h-1v5h-2h-1v7v6h-2v4h-1M676 268h-5h-5v1h-5v2h-5v1h-5M654 303v-5h-2v-5h1v-6h-2h2v-4v-6h-2v-4M651 272v1M655 236h-5v6M651 272v-5h-1v-4v-7h-1h2v-5h-1v-4v-5M619 303h1v-6v-3h1v-6h1v-6h-1h1v-6v-4h1M619 303h-5v-1v-1h-4v1h-7v-2h-4v-1h-6h-5M588 299h1v-4h-1v-6v-6h-1M587 283h6v-3h5v-3v-3h4v-1h7h4v-3v-3h5M618 267h5v5M620 304h-1v-1M651 273v-1h-6h-6v1h-4v-1h-7h-5M587 335v-6h-1v-6h-1v-5h2h-1v-5h1v-5v-6h-1M586 302v-3h2M650 242h-5h-6h-3v-2h-6h-5h-5M618 267v-6h-1v-5h-3v-7h-1M613 249v-3h4h3v-6M651 210h-5v2v2h-6v1h-4v1h-7h-4v2h-6v1M620 240h-1v-5v-7v-4h1v-5h-1M619 185h-1v6v5h-1v5h-2v5h-1h-2v6M582 184v7h3v4v7h2v4h1v6M612 212h-6h-6h-6h-6M612 212h7v7M550 209h4v3h5v4M559 216h6v-2h4v1h7h5v-2h6M588 212v1h-1M555 247h5v-5M555 247h2v7h1v5v6h2v5M560 242h5v-1v-1h5h6v1v-1h5h5M560 270v1h5h7v1h7v1M579 273h3v-4h1v-5v-5h3h2v-4v-5v-5h3M591 245h-5v-5M526 241h6h6v2h7v2h5v1h5v1M559 216v5v6v5h1v6h-1v4h1M521 245v6v4v7h1h1v5v4M523 271h4v1h7h5v1v1h5v-1h5h6v1M555 274h5v-4M587 213v6h-1v5v5h-1v5h1v6M586 302h-6v-1v2h-5h-5h-4h-7v2h-4v-1h-5v1M550 305v-4h1v-6h2v-6h-1v-6h2v-4v-5h1M587 283h-4v-5h-4v-5M613 249h-6h-5v-2v-2h-4h-7M706 394h-5v1v2h-5h-5h-6v1v1h-5M706 394h-1v-5v-4v-6h2v-5h-1M706 374h-7v-2v-1h-4v-2h-7h-5v-1v-1h-6M680 399h-4v-2M676 397v-6v-5h-2v-7v-6h1v-5h-1M674 368h3v-1M710 398v-4h-4M685 425v-6h-1v-5h-2v-5h-1v-4h-1v-6M711 368h-5v6M688 337h-1v6h-2v3v6h-3v5v4h-3h-2v6M656 403v-2h6h4v-1v-1h5v-2h5M656 403v6v4v5h-2v5v5M656 403h-7v-5M654 364h4v2h5v2h7h4M746 177v4h-6h-4v5M709 149h5h6v1h7h4v1h6v1h6M709 149v5v5h2h-1v5h2v6h-1v7v4h2M713 181v1h6v2h5h5v1h7v1M680 180v1h4h7v1v3h4v1h6v1h5M689 216h6v-3h3h6M706 187v6h-2v5h1v4v6h-1v5M337 678v1h-5h-6h-5v1h-8h-4M335 648h-6h-4v-1h-6v2h-4v-1h-6M309 648h-1v6h1v4v7h-1v5h1v5h1v5h-1M307 708v-6v-5h-2v-6v-7M305 684v-4h4M36 525v5h1h-2v6v6v5h-1v4h-1M5 551v2h5h8h5v3M33 551v2h-4h-6v3M-1 594h4v-1v-3h6h3v-1v-3h7h4v-1M23 556v6h1v5v6h-1v6v6M149 553h-6v-1h-6v1v-1h-3v1h-6h-6v-1M126 519v2h-2M122 552h1v-5v-6h-1v-5h1v-4h-1v-7h1v-4h1M123 610v1h6h6v2h5h6v2h5v1M123 610v-7h-3v-4v-6h1v-5h-2M119 588v-1h1M120 587v-1h4h6v-3h6h4h7v-2h4M153 582v-1h-2M153 582v6h-1v5h1v6h1v4v6h-1v6M153 615h-2v1M151 555v6h-1v5h1v5h1h-1v4v6M122 552h-1v1M121 553v5v6v5h-1v6h-1v5v7h1M185 585h-4h-8v-1h-4h-6v-2h-4v1h-6v-1M178 618v-5h7M178 618v-1h-6h-5v-1v-1h-3h-5v1v-1h-6M55 559v7v5h-1v6v6h-1M55 559h-6v-3v-2h-6h-4v-3h-6M23 585h4v4h5v2M32 591v-1h6v-3h4h6v-3h5v-1M672 124h4v-3h6v-4v-3h4M672 124v6h1v5v5h2v5M686 114h5v2h7v2h7M708 148h1v-5h-1v-7v-4h1v-7M708 148h-7v2h-3h-7v2v1h-5M709 125v-7h-4M675 145v3h5h6v5M654 116h6v2v4h5v2h7M680 93h2v5h2v6v4h2v6M648 154v-3h6h4v-1h6v-1v-3h6h5v-1M715 91h-1v5v6h-2v6h-3h-1v6h-3v4M709 149v-1h-1M745 118h-4v2h-6v1h-6v-1h-5v2v1h-6v1h-5v1h-4M679 179h2v-4v-7h3v-5h1v-5h1v-5M713 181v6h-7M400 27v2h-6h-7v1h-4h-6v2M400 27v6h2v4h2v6v7h3v5M377 32v6v5h-4v6v6h-2M371 55v1h7h4v2h6v3h5h6v3M407 55v4h-4h-4v5M367 -2h-1v5h-2v5h1v5v7h-1M401 25v2h-1M364 20h4v4h4v3h5v5M430 55h-6v-1h-5v1h-6h-6M338 183h1v-6h1v-5v-5h-1v-4h2v-6h1v-5M338 183h6v1h5h7v-1v-1h3v1h7M366 183v-7h5M371 176v-7h1h-2v-6v-5h1M371 158h-3v-5v-4h-5M363 149h-5v2h-6h-4v1h-6M364 20v2h-4v2h-5v2h-5v3h-4h-6v1M365 59v-4h6M365 59h-5v-1v-3h-6h-4v-2h-6v-1M344 52h-1v-5v-6h-2v-6h-1v-5M215 116v-3h4M219 113v-5v-7h2v-3h-1v-7M184 86h4v-1v1h7h4v-1h6h6v-1M211 84v4h4v3h5M183 56h5v1h4h6v-1h6v1h4v1h5M211 84h1v-5v-5v-5h1h-1v-5h1v-6M218 31v6v5h1v4h2v5M213 58h3v-5h5v-2M237 275v5h6h4v5M273 249v6v7h1h2v4v7M273 249h-6v-2h-5v-3h-3h-5v-1h-6M247 243h1M276 273v1h-6h-4v3v2h-5h-4v1h-6v3h-4v2M154 209v1h7v-1h4h7v1h4v1h6M154 209v-6h-1v-4h-1v-6v-5v-5M189 177v3h3M152 183v-5h4M192 180h-1v6v5h-3v4h-4v5v6h-1v5h-1M154 209M187 236h1v-6v-7v-4h1M189 219h-3v-4h-4v-4M410 181h-6v3M410 181v2h5h6h6v1v1h6M404 184h-1v5h-3v7h-1v3h-2v7M433 185h-1v5h1v7v6v6M401 211h-4v-5M401 211h6v1h5v1h6h5h6M429 213v-4h4M371 210h4h7v-1h5v-3h6h4M371 210v-5h-3v-6v-5v-6h-1h-1v-5M371 176v2h5h7v2h4v2h6h5v2h6M436 183h-3v2M465 218v-2h-5v-1h-5v-1h-7h-5v-2v-2h-3v-1h-7M402 240v-5h-1h1v-7h-1v-7v-4v-6M371 210M429 237v-6h-1v-7h1v-4v-7M434 58v5v8h-2v4v7h1h-1v5M463 92h-5v-2h-6h-6v-1h-7h-5M432 87h2v2M396 313h-5v-1v-1h-8h-4v-2h-7M400 333h-6v1h-5v1h-5v4v-1h-6h-5v2v2h-5M372 309v6h-3v4h-3h-2v6h-3v6v5h-2M368 342h-5v-3h-4v-3M310 244v6v4h-1v5v4h-1h1v7h-1v4v5M310 244h7h4v-1h6h6v-1h5M339 243h1v6h-1v5v5h2v6h-1h1v6M308 279h7v-1h4v-3h6v-1h5h5v-1h6v-2M220 274v6h-2h1v5v3h-1v6h-1h-1v5v4h-2v6M247 285h-1v5v6v4v6M246 306v1h-1M245 307h-4v1v-1h-6h-5v1h-7h-3h-6v1M189 302h6v2v3h7h5v2h5v2M214 309v2h-2M182 338h6v-1h5v-2h6v-1v1h7v-2h5M212 311h-1v6h1v4h-1v6v6M304 370v1h-5v-1h-7v1h-5h-4v-1h-7M304 370v6v5h2v8v5h-1M305 394h-6v3h-5v1h-7v2h-5v1h-5M277 401v-5h-4M273 396h1v-5v-6h1v-4v-6h1v-5M210 457h5v4v5h5M183 490h6v1h5h5v-1v2h5h6h5M220 466h-1v7v5h1v4v7h-2M215 492h3v-3M184 524h5h6v-2v-2h5h7h6v-2h4M215 492h1v6v3v8v3h2v6h-1M214 552h2v-5h-1v-6v-5h1v-5h1v-5v-6h2M219 520h-2v-2M22 184h5v-5h4v-4M55 209v-6h4v-4v-6h2v-4v-5M31 175h6v3h5h4v1h6v1v1h5v3h4M28 147v5h4M31 175v-6v-7h2v-5h-2h1v-5M125 113h-4v4h-6v2M95 90v6v4v5h-1h1v6M95 111v3h6h4v1h5v2h5v2M676 774h-5h-6v-2v-1h-8v-1h-5M676 774h2v6h-2v4v6h3v5v4M644 803v-4h2v-7v-4v-4h1v-5v-6M644 803h5v2h5h7v-1v1h3v-1h7h4v2M647 773v-3h5M679 799h-4v7M683 768v6h-7M649 741h1v5v6v7v5h2v6M649 741h6v-1v-2h4h4v1v-3h7v1h5h5v-2M711 801h-5v-1h-6v1v-1h-5v-1h-5h-7v1h-4v-1M642 805h2v-2M618 773v-2h2M620 771h5v1v-1h7v1h4v2h5v-1h6M621 522v6h-1v4v7v4M621 522v-2h6h5v-1v-1h4h7v-2h5M620 543h4v2v3h5v1h5v3h4h5v2M657 525v-4h-4h-5v-5M657 525v6h-2h-1v5h-2v4h-1v6v4h-1M650 550v4h-7M652 494v6h-2v6v3h-2v7M677 526v-1h-4v-1h-6v1h-5h-5M674 558h-5v-1v-1h-6v-2h-2v-2h-6v-2h-5M652 585h-3v-4v-3h-6M643 578v-5v-8v-5h-1v-6h1M618 492v5h1v6h-1v5v5v6M618 492v-1h-5h-6v-1h-5v-2h-5h-6v-1h-6M618 519v1h-4h-5v-1h-6h-5v-1v-1h-6h-4M588 517v-6h-3v-3h-1v-5h-2v-5v-6h-2M585 487h-5v5M622 487h5v-1h5v-1h5v1h4h6M622 487h-4v5M621 522h-3v-3M615 548v-5h5M615 548v-1h-5h-6v1h-6h-3h-7v1M588 549h-2v-6h1v-3h-2v-8v-5h-1v-4M584 523v-6h4M587 580v6h2v7v4h1v5h2h1v7v5h1M587 580h4h8h4v-1h5v1h6v-2M619 582h-5v-4M619 582h-1v7v5v4v6v7h-1v5M594 614h5v1v-1h5v2h7h5v1M617 616h-1v1M643 578h-6v1v1h-5h-8v1h-5v1M615 548h-1v5h2v5v5h-3v6h1v4h1h-1v5M643 616v-1h-6h-5v1h-4h-6h-5M616 648h-5v1h-6v1v1h-7h-6h-5M616 648v-5h1h-1v-4v-8h1v-4v-5h-1v-5M584 619v-2h6v-3h4M584 619h1v6h-1v6h-1v5v6v5M583 647v4h4M617 739h-6v-1h-6v2h-6h-4v1h-7M617 739v-3h3M620 736v-5v-6h-2v-5h1v-6h-2v-7h1v-4h-1M588 740v1M588 740h-1v-4v-6v-5h-1v-5h-1v-6h1v-5M586 709h6h4v-2h5v-3h6h4h6v-1M620 771v-6h-1v-5v-5h-1v-6v-4h-1v-6M583 767v-5v-4h3v-6h1v-5v-6h1M649 741h-3v-3M646 738h-4v-1h-6h-7v-1v1h-3v-1h-6M556 735h6h5v2h5v1h5h5v2h6M556 735h-3v2M553 737h1v5v5h-1v5v5v6v5M556 735v-6v-5v-6h1v-4h1h-1v-6M579 703h-6v1v1h-6h-4v2v1h-6M579 703v6h7M615 681v-2h-6h-6v1h-3h-5v-2h-8v-2h-4M615 681v5h1v6h1v6v4h1M579 703v-6h1v-5h1h-1v-4v-5h-1h2v-6M618 702h-1v1M583 676v1h-2M650 643v4h-3v4h-3M616 648h3v3M644 651v1h-5v-1h-4h-7h-4h-5M615 681h3v-4M587 651h-1v5v6h-1v3h-1h1v5v6h-2M619 651v4v7v5v4h-1v6M646 738v-5v-6h3h-1v-4v-7h2h-1v-6v-5h2M618 702v-1h4h6v2h5h5h5v-1v1h6M651 705h-2v-2M618 677h5h6h3v1h6v-2h5v1h6M649 703v-6h1v-5h-1v-6v-3v-6M644 651h3v6v6h2v5h3v5M649 677h3v-4M368 555h3v-3M365 516h6v6M371 552v-4h-1h1v-5v-7v-4v-5v-5M372 580h6v2h5v-2h5v2h7h6v-1M402 547v2h-4v-1h-5v2h-6h-5h-6v2h-5M402 547v4h3M405 551v5v5h-2h-1v5v4v7h-1v4M405 551h7h6h4v1h7M433 586h-4v1h-6h-5v1h-6h-6M433 586v-6h-2v-5h1v-6h-1v-6v-5h-1v-5h-1M401 581h5v7M429 553v-1M434 494h-5v-1v1h-5v-1h-6h-5v-2v-1h-3v1h-5h-6v-1M434 494h-2v5v6h-2v5h-1v5M429 515h-5v1v4h-6h-6v1v1h-6h-4v2M395 493h2v5h1v6v6h1v7h1v5M395 493h4v-3M400 522v2h2M433 466v4v6h2v7v5h-1v5h1M435 493h-1v1M403 463v-2h6v1h5v-1h6v-1h6M403 463v6h-1v4v5h-2v6h-1v6M402 547v-6v-5h1v-5h-1v-7M436 524h-2v5h-2v7v4v7h-3v5M436 524h-4v-4v-5h-3M371 490v5h-6M371 490h5v1h7v2h7h5M371 522h6v1h5h6v-1h6h6M487 495v6h1v4h3v4v6h2v5M487 495h-6v-1h-4v-2h-8h-5M458 494v4v7h3v5v4h-1h1v6v5v5h2M458 494h6v-2M493 520v2h-5h-5v2h-3v1v2h-8h-4v2h-4v2M463 530h1v1M465 458v6h1v5h-2v6v5h1h-2v7h1v5M493 487v4h-2h-4v4M435 493h5v2h6v-1h6h6M436 524h5v1h6v2h6v2h6h4v1M429 553v1h5h7v-1v-1h4h6v1h7v1h5M463 554v-7h1v-3v-7v-6M558 491h-2v5v6h-2h-2v4v4h-2v6v5h-1M558 491h-7h-3h-7h-6h-4v1h-6M549 521h-6h-6v-2h-3v2v-1h-7h-5M525 492v5h-2v7v6h1v6h-2v4M559 491v-1h5h6v1h5v1h5M559 491h-1M584 523h-5v1h-7v2v-1h-6v1h-5v2h-6M555 528v-7h-6M559 491h-3v-5v-6v-4h-2h-2v-6h-1v-5M551 465h-4v-1v1h-7v-1h-5h-5h-4M523 489h2v3M527 553h-1v-5v-6h-3h2v-5h-3v-5v-5h-2v-6M527 553v-2h5h7h4v-2v-2h5h6M520 521h2v-1M554 547v-7v-5h1v-7M520 521h-6v2h-5v-1h-6v1h-5M498 523v-3h-5M587 428h5v1v-2h7h5v-2h5v2h6v-2h5M587 428v3h-2M585 431v6h1v4h2v5v5h-1v6h1M591 461h-3v-4M591 461h6h5v-2h8h5M615 459v-3h3M618 456v-5h2v-7h-1h2v-6v-6v-5h1M622 427h-2v-2M584 400h1v5v7h1v6h-1v4v6h2M620 404v6v5h-1v5v5h1M551 465h5v-7M556 458h5h5h6v-1h5v-1v1h5h6M585 487h2v-6v-3h-1h3v-6v-7v-4h2M622 487h-2v-6v-5h-1v-6h-4v-6v-5M646 460h-7v-1h-3v-1h-8h-4v-2h-6M651 430h-6v-1v1h-7v-2h-3h-8v-1h-5M492 398h2v-6v-6v-4h2v-7v-6M492 398h5v3v4h4M501 405h4v-1v-1h6v-2h5h5v-2v-1h5M526 398h1v-4h-2v-6v-5h-1v-6h1v-4h-1v-6M524 367h-5v1h-5v-1v-2h-6v1h-4h-5M499 366h-3v3M461 368h5v1v-1h6h3v1v-1h6h6h3v1h6M469 402v-1h6h5v-1h6v-1h6v-1M501 426v-4h1v-7v-5h-1v-5M464 338h6v-1h6v-1h5v1v-1h7M488 336h3v3M491 339v5h2v5h1h1v7h2v5h2v5M529 433h-1v-6v-5v-5h1v-6h-1v-6v-5h1M529 433h7v2h5h5v-2v1h6M556 430h-4v4M556 430h-1v-7v-5h1v-4v-8h-2v-5M554 401v-1h-4h-6h-5h-6h-4M523 437h6v-4M526 398h3v2M556 458v-6h-2v-6h1v-5h-2v-7h-1M585 431h-7v-1h-4h-7h-6h-5M559 397v4h-5M526 366h6h5v-1v1h4v-1h6v-1h5M526 366h-2v1M271 683h1v7h1v4v6v6M271 683h7v-6M305 711h-6v2h-6v-1h-4v2h-6M278 677h5v2h6v3h6v-1h5h5v3M273 706h4v4h6v4M370 614h6v1h6v1h5h7v1M406 588v5v6h-2v7h-2h-1v5M394 617v-6h7M400 646v-1h1M394 617v6v5h3v6h3v6v5h1M460 584v1M460 584v-6h1h1v-4h1v-6h2v-5v-6M433 586h2v1M465 557h-2v-3M460 585v1h-5h-5v1h-6h-4h-5M520 742h1v5v7v5h1v7M520 742h-7v-1h-5v-1h-6v1v-2h-5h-6v-1M522 766h-5v1h-6v2h-5h-5v3h-7M491 738v4h-5M486 742v4v5v6h3v5v5M494 772v-5h-5M553 737v1h-6h-7v-3h-4h-6h-6v1M524 736v6h-4M529 772h-7v-6M489 801v-6h1h1v-6h1v-6v-5h2v-6M459 770h6h5h5v-1h3v-2h6v1h5v-1M467 738v1h5v1h8h6v2M467 738h-6v4h-5v5M209 646h-6h-4v2h-6h-5h-4v1h-5M178 618v6h-1v5v4h1v6v3h-1v6M177 648h2v1M489 274h3v5h5v4M523 271v5h-3M520 276v2h-6v2h-5h-7v3h-5M464 303h5v1h6v-1v-1h7h4h7M497 283v5h-2v8v6h-2M488 336v-5h1h2v-4v-7h1v-3v-6h3h1v-4M493 302v5h3M547 307v-1h-7h-7v-1M547 307h3v5v6h-1v7h1v5h3M553 330v1h-3h-5v2h-7v4h-3h-5v3h-5v2M533 305h-4v2h-5v3v3h-4M520 313h-1v5h2v7h-1v6v4h-1M519 335v7h6M550 305v2h-3M520 276v5h3h2v5v5h5v5v4h3v5M559 336h-6v-6M526 366h-1v-6v-5h1v-6h-1v-7M496 307v2h6h5v1h7v1h6v2M491 339h5v-1h7v-1h5h5v-1h6v-1M742 217v6v3v6v5h1v5M742 217h-6v-6M736 211h-6h-5v1h-7v1v2h-6v-1h-5M741 244h2v-2M741 244h-5h-7v-1h-4h-6v-2h-5v1M714 242v-7h-2v-4h-1v-6h-2v-5h-1v-6h-1M771 207v2h-5v2h-5h-4v1v1h-6h-5v2v2h-4M769 242h-6v1h-5h-5h-5v-1h-5M736 186h-1v5v5v4v7h1v4M704 213h3v1M741 270v-6v-5h1h-1v-3v-6h-1v-6h1M706 250h3v-5h5v-3M272 646v-6h2v-5v-4h1h1v-5h2v-5h1v-6M272 646h4v4M276 650v-2h5h6v1h5h5v-1h5h6v-1M279 615v1h5h6v1h6h5h7v1M308 618v5v8v5h-1v5v6h1M279 615M249 646h-5v-4M249 646h6h6v1h6v-1h5M271 683h-6h-3v1h-6v-1h-5h-5M249 646v7v3h-1v6h-2v6h-1h-2v5v7M278 677v-6v-4h-2v-6v-6v-5M246 683h-3v-3M309 648h-1v-1M308 581h-5v1h-5v1h-6h-4v2v-1h-5h-5v1M278 585h-1v2M311 615h-3v3M90 524h-4h-6v-1h-5v-3h-6h-5v1M90 524v1M90 525v7h2v6h1h2v6v5M64 521v4h-2h1v7v4h-2v5h1h-3v7v4v5M59 557h6v1h4v1h7h4v1h6M86 560h4v-5v-6h5M97 493h-1v6h-1v4v5h-2v6h-1v5v5h-2M59 516h5v5M124 521h-6v1h-5v2h-6v-1h-4h-7v1h-6v1M121 553v-2h-4h-6v-1h-5h-6v-1h-5M55 559h4v-2M-2 618h4v1h6h5v2h5h5M28 649v-1h2M30 648v-6h-1h-2v-5v-6h-1v-5h-1v-5h-2M32 591h1v5v5v6h1v5M23 621v-5h5v-4h6M30 648h4v-3h7v-1v-1h6h4v-2v-3h6M34 612h4v2v3h7v1h4v3h4h6v1M59 622h-1v6h1v4v6h-2M61 674v-6v-6v-3h-2v-5h1v-7h-1v-5M59 642h-2v-4M87 677v-1h2M59 642h5v2v1h5v-1h6h4v3v1h5h5M89 676h-1v-5v-6h2v-5h-2v-5v-7h1M116 617v5h1v6h2v6v7h2v5M116 617h-5v1h-5v1v-2h-5h-7v1v1h-4M90 619h1v6v4h-1v4h2h1v6v5h-1M121 646h-6v-2h-7h-4h-7h-5M333 62h-4v-3h-6v-2h-5v-1h-6h-4v-2M333 62h-1v5v6h1v3v7h-2h1v4M332 87v1h-6v1h-5h-6v2h-5M310 91v-6h-3v-5h-2v-6v-5v-6h-2h-2v-5M301 58v-4h7M365 59v6v5h-2v5h2v6h-1v4M344 52v5h-5v5h-6M364 85h-5v1v1h-5h-5v3h-6h-5v2M338 92v-5h-6M333 25h-6v1h-6v1h-6v1M333 25v-6v-6h2v-5h-3v-7h2v-5M315 28v-2h-5v-4h-4v-3h-4M302 19h-1v-6v-6v-5h1M334 -4h-6v-1v-1h-7h-5v1v-1h-6M310 -6v3h-4h-4v5M340 30v-5h-7M308 54h2v-6v-4h2v-6h2v-6v-4h1M343 -12v4h-3h-6v4M277 -8h6v3h5v2h5v4h3h6v1M220 91v-2h6v-2h5h5v-2v-2h6M221 51v1h6h3v2h4v4h6v1M240 59v5h1v6h1v8v5M246 121h-5v-1h-6v-2h-6v-1v-3h-4h-6v-1M246 121h4v-3M250 118v-6h1v-6h1v-4v-6h2v-5M254 91v-4h-5v-4h-7M246 121v5h-2v6h-2v6v5h-3h-1v6M215 145v2h3h5v4M238 149h-6v1h-4v1h-5M276 212h1v-1M276 212v5v5h1v8v6v5v5h-1M277 211h5v1v3h6h5h5v1v2h6M276 246h6v-1v-1h6v-1h6h5v-3h6M305 240v-5v-7h-1v-5v-5M273 249v-3h3M248 243v-5h2v-7v-4v-6h1v-6M251 215h6v-1h3h7h4v-3h5v1M333 208v-1h-5h-6v2h-4v-1v1h-6M333 208h1v-5v-7h3v-5v-6M312 209h-2v-5h-3v-7h-2v-4h-1v-6h-3v-4M337 185v-2h-5h-4v-3h-6v-3h-4v-2h-6M312 175v5h-6h-5v3M310 244v-4h-5M341 217v-5h-3h-5v-4M304 218h3v-4v-5h5M338 183h-1v2M281 182v1h-2M281 182v1h4h7h3v-1v1h6M279 183v5h-1v5v8v3h-1v7M399 64h1v4h-1v7v5h1M364 85h4v4h5v3M400 80v1h-6h-4v4h-7v2h-5v2v3h-5M432 87h-5v1h-6v-1h-3v1h-7v-1h-4M400 80v7h7M338 92h1v6h1v6v5v6h1M341 115h4v3h6v1v1h5v2h6h5v2M367 124v-3h4v-4h5M373 92v5v6h1v4h2v5h-1v5h1M432 123v-4h-4M432 123v5h-1v6h1h-2v5v3v6M428 119h-5h-4v1h-6v-1v1h-4v-1h-6M430 148h-5h-6v3v1h-5v1h-5h-4M399 122v-3h4M399 122v6v6h2v5v5h1v6M402 150h3v3M461 123h-6h-6h-6h-5v-1h-6v1M434 89v4v6h-3v6h-1v4h-1h-1v5v5M434 151v-3h-4M407 87h-1v6v4v7v4h-1h-2v7v4M410 181v-6h-1v-5v-5h-3h1v-6h-2v-6M376 117v1h5h7h5v3h6v1M371 158v-1h5v-1h5v-1h6v-3h6h3v-1v-1h6M363 149v-6h2v-5v-4h-1h1v-5v-5h2M308 279h1v7h1v6v5M308 279h-4v-1h-5h-8v-2v-1h-4h-5v-1h-5M278 304v-5h1v-5v-6h-2v-4h1v-4h-1v-6M278 304v1h6v1h6h6v1v1h6M302 308h3v-6v-5h5M276 273h1v1M308 279M274 308h-4h-7v-1h-7v-1v2h-5v-2h-5M274 308v-4h4M276 339h6h6v-3h4h7v-2h5M276 339v-4v-7h-1v-4v-6h-1v-6h1h-1v-4M304 334h-1v-5v-6h1h-1v-5v-6h-1v-4M337 334v-4v-7v-5h1v-7h-1v-5M337 334h-6v1v2h-3h-7h-5v2h-5M311 339h-7v-5M337 306h-6v-2h-6v-1v-3h-4h-5v-1v-2h-6M369 304h-6h-7h-3h-8h-5v-1M369 304v-6v-6h1v-5v-5h1v-6h1M340 303v-6h2v-7v-4v-7h2h1v-5M372 276h-6v-1h-6v1h-5h-4v-2h-6M372 309h-3v-5M343 338h5h5v-2h6M343 338v-4h-6M337 306h3v-3M372 275v1M341 271v3h4M276 339v1M245 307v4h1h1v6v7v5v5h1M248 334v1h6h4v1h6v2h6v2h6M310 365h-6v5M310 365v-6v-5h-1v-4h1v-6h1v-5M276 370v-3h-2M276 340h-1v5h1v6h-1v6v4v6h-1M308 559h-6v-2h-4v-1v-1h-7h-4h-6v-1h-5v-2M303 523h-5h-7v1h-7M284 524h-1v6h-3v5h-1v6v6h-1v5h-2M278 585h-2v-6v-6v-7h-1h-1v-4h-3v-6M244 555v-2h3M247 553h6h6v1v1h6h6v1M271 556v-4h5M92 211h-2v-6v-6h-1v-6v-5h-1M61 184v-1h2M88 188v-2h-5v1h-4h-7v-1h-3v-1h-6v-2M588 549h-2v5h-5v3M554 547v4h4M558 551v2h6h4v1h8v2v1h5M587 580v-2h-3M581 557h1v6h1v6v5h1v4M527 553h-2v4M498 523v5h-1v6v5h1v4v7h-1h-1v4M525 557h-5h-7v-1v-1h-5h-6v-1h-6M465 557h4v1h6h5v-1h6v1h5M491 558v-4h5M584 619h-4h-5v-2v-1h-7v-2h-4M584 578v2h-4v3h-5v2h-5h-6v3h-5v2M564 614v-5v-8h-3v-5h-2v-6M558 551h-1v6h-3v6h-1v6v3h-2v6h-3v6M548 584v4h6h5v2M682 711v-1h5h6v-2h6v-3v-1h6M682 711v-6h-7M675 705v-6h1v-6h1v-5v-5h2v-5v-7M705 704v-4h1v-8v-4h1v-5v-6M707 677v-2h-6v-2h-4h-5v-3h-6v-1h-5M681 669h-2v2M718 712h-3v-2h-6v-3v-3h-4M682 733h-1v-5v-6h1h-1v-6v-5h1M651 705h7h4v1h6v-1h7M652 673h5h6h4v-2h7h5M713 674v3h-6M681 652h-1v6h1v6v5M309 743v1h-6v1h-5v-1h-6v1h-6v-1h-4v1h-7M283 714v4h-3v4h-2v6h-3v4v4h-2v6h-1M275 745h-3v-3M280 775h-5v-4M275 745v5v5h1h-1v7v3h-1v6h1M250 796v-6h2v-6h1v-6h2M277 807v-2h3M275 771h-5v3h-6v1v1h-4h-5v2M211 799h-4v1h-6v1h-6h-6v1h-5v1M184 803v2h-1M241 803h-5v-1h-5v-3h-3v-3h-6v-1h-4v-2M218 793v6h-7M121 772h6v-1h4v-1v-1h5h5v1h5v-2M121 772v6v4h1v4v5h1v5v6M123 802h6v2h5h6v1h6v-1v2h6M146 768h5v3v3h3M154 774v5h-1v4h1v6v6h1h-2v4v5h1M152 806v-2h2M117 807v-5h6M184 803v-5h-1v-7h2v-6v-5h-1v-6M180 770v4h4M180 770v1h-6h-5v2h-5v-1v2h-5h-5M183 805v1h-6h-6v-2h-5v1h-6h-6v-1M151 683v-3h3M151 683v-1h-6v-2h-4v-1h-5h-7v-2v-2h-5M154 680h1v-5h-1v-6h2v-4v-6h-1h1v-5M124 675v-3h-4M120 672v-7v-4h2v-6h2h1v-6M125 649v-1h7h4v-2h7v-1M143 645h4v3v2h4v4h5M89 676h5v-1v-1h5v1h6h4v-3h5h6M121 646v3h4M89 648v-4h3M123 610h-7v7M151 616v6v5h-2h-2v3h-2v4v6v5h-2M177 648h-6v2h-5v2h-4h-6v2M273 706h-5v2v1h-5v3h-5h-5v1h-6v3M272 742h-6v-2h-6v-1h-3v-2h-7M250 737v-6h-2v-5h-1v-5v-5M246 683h-1v6v5h2v5h-2v4h1v7v4h-1M247 716v-2h-2M213 676h3v4M213 676h-5h-6v-2h-5v1h-5v-1h-5M216 680v5h-1v6v7h-2h-1v5M212 703v1h-5v2h-5h-5v2h-4h-5v3M187 674h-3v5h-5v3M179 682h2v5h-1v4v6h1v5h2v5M183 707h5v4M216 653h-2v6h1v5v7h-2v5M243 680h-6v-1h-4h-6v2h-5h-6v-1M179 649v5h1h1v5h3v6h1v3v6h2M220 711h6v1h5v-1h4v2h5h5v1M220 711v-5h-4h-4v-3M154 680v1h5v-1h6h3v1h6v2h5v-1M150 709h5h7v-1v1h5h6v-1h5v-1h5M150 709v-5v-6h1h-1v-6v-3h1v-6M85 615h-4h-6v1h-6v1h-4M85 615v-6h1h2v-3v-5h1v-5h1h2v-6h1v-5M65 617v-5h-1h-1v-5v-7h-2v-6h-1v-5M60 589v-2h6h5h3v-1h6v-3h5h4v-2M93 585h-4v-4M90 619h-5v-4M59 622v-5h6M119 588h-6v-1h-4h-6v-1h-5v-1h-5M53 583h7v6M86 560v6h3v3v7v5M282 56v-5v-6h-1v-4h-3v-4h-1v-6M282 56v3h-3M279 59h-5h-6v-2h-5h-5h-4h-5v1h-5v-1M275 30h2v1M275 30v-1h-5h-7v1h-5v-1h-5v-1M253 28h-2v5v4h-3v5v5h-2v5v5h-2M301 58h-7v-1h-5h-7v-1M302 19h-6v3h-3v3h-7v1v2h-3v3h-6M310 91h-4v3M274 86v-6h2v-4h1v-6v-6h1v-5h1M274 86h2v2M276 88h6h4v2v1h5h4h6v1h5v2M274 86h-5v2h-5v3h-4h-6M240 59h4v-2M273 -6h1v6v5h-1v5h1v5h1v5h-2v5h2v5M244 20h3v3v5h6M241 205h2v-7v-5h-1h2v-6M241 205h-5v2h-7v2h-6v4h-5v1M244 187h-4v-2v-1h-5h-6v-2v-1h-4v-1h-5h-6v-2M218 214h-1M217 214h-1v-5v-5h-1v-7h-3v-6h-1v-4v-6h-2M209 181h5v-3M251 215h-4v-6h-6v-4M279 183h-5v-3h-6v1h-6v-1h-4h-6v-1M252 179v4h-3h-5v4M224 239v-5v-4h-2h-2v-5v-5h-1h-1v-6M252 179h-2v-6h-1v-6v-6v-5h-2M247 156h-5v-4h-4v-3M223 151h-3v6v5h-1h-1v5v6h-3v5h-1M189 219v-2h5h7v-1v1h4h6v-2h6v-1M192 180h6v1h5v1v-1h6M396 365v3h-3M368 342h1v6h3v3h1v6h1v4v6h1M393 368h-7h-5v-1h-6M425 392v1h-5v3h-7h-5v1h-6v2M393 368v6h2h2v4v7h3v4v4v6h2M426 431v-1h-5v-2h-7h-7h-5v-3M402 425v-6h-2v-4h-1v-7v-6M402 399h-3v3M305 394v3h5h2v3h5v3M277 401h1v6v4h3v6v5h2v5M301 430h-6h-5v-1v-2h-7M301 430v-2h3v-3h6M317 403v6h-1h-2v6h-3v4v6h-1M276 433h-1v7h-1v5v5v7h-2M276 433v-1h-5h-6v-1h-3h-6h-6v-2h-5v-1h-4v-1M272 457v2h-7h-3v2h-5h-6h-6M239 428h2v-1M239 428v5h1h1v7v5v4h3v7v5M244 461h1M247 399v-1h5v1h4v-3h8h5v2h4v-2M247 399v6v5h-2h-3v6v5h-1v6M283 427v6h-7M221 428v1h5v-2h7v1h6M214 396h2v-2M216 394h5v2h6h4h7v1h4h5v1M247 398v1M220 466v-2h6v-1h5h6v-2h7M218 489v2h6h4h6v1h5v1h6v1h5M250 494v-7h-2v-4v-6v-6h-2v-4v-6h-1M278 487v-5h1v-5v-5v-5M278 487h6v1h4h5v2h7v1h4M279 467h6v-1v-2h5v-2h6h5v-1v-1h7M304 491h3v-2M307 489v-5v-6h1h3v-5h1v-5v-5h1M313 463v-3h-5M301 430h1v4v5h2v7v3h1h1v6h2v5M272 457h3v5h4v5M306 520v-5h-1h1v-6v-6h-1v-7h-1v-5M335 495h-6v-2h-5h-6v-1v-3h-5h-6M335 461v7v5h3v5v4h1v7h2M335 461v1h-5v-1h-6v2h-5h-6M218 341h6v-1h6v-1h6v-2h4v-1h7M218 341h-2v5v5h1h-2v7v5M247 336v6v5v4h-2v5h1v4v6M215 363v3h3M218 366v2h7h6v-1v2h5h6M242 369h4v-3M211 333h4v5v3h3M248 334v2h-1M191 366h7h6v-2h6v-1h5M274 367h-6h-6h-5v-1h-5v1h-6v-1M216 394v-5h1h-1v-6v-6h2v-5v-6M247 398v-6v-6h-2h-1v-5h-2v-6v-6M251 494h5h7v-2h6h5M251 494h-1v6h-2v3v5h-4v6h1v4h-2v5M243 523h1v1M244 524h5v-1h5v1h7v-2h4h7v2v-2h5h5M274 492h2v4v6v5h2v5h1v6h2h1v4M250 494h1M278 487v5h-4M219 520v2h7h5h6h6v1M247 553v-5v-8h-1h-1v-4v-6v-6h-1M284 524v-2h-2M90 186v-5v-4v-6v-5h2v-4h-1v-6v-5h1M90 186h5h6v-2h4h5v-3h4h6M120 181h5v-7M125 174h-2v-5v-6h-2v-5v-5M92 151v-1h6h5v-1h5h7M121 153v-4h-6M121 214v-7h1v-5v-5h-1h-1v-4v-7v-5M88 188v-2h2M152 183h-6v-1h-5v-3v-3h-5v1h-5h-6v-3M146 143v1h-6v4h-4h-4v2v1h-6v2h-5M115 119v5h-1v6h1v5v3v7v4M91 151v1h-6h-7v1v-1h-5h-6v1M91 151h-1v-5v-5h-1h-2v-5v-8h1h-3v-3h-1v-6M84 119h-5v-1h-6v-1h-7M61 148v5h6M61 148v-5h-1h1v-5h1v-7h1v-5h-1v-5M66 117h-4v4M63 183v-4v-5h2v-5v-5h2v-5h-1h1v-6M92 151h-1M95 111v3h-5v5h-6M59 87h2v4h-1v6h2v4v7h3v4h1v5M32 152h5v-2v-1h7h5v1h6v-2h6M30 120v-1h5h5v1h5v-1v2h7h5v1h5v-1M430 680h5h6v2v2h6h6v1h5M436 715v-1h6h7v-1h5v-3h6v-1M460 709h1v-6v-6h-2h-1v-6v-6M467 738v-5h-1h-2v-7v-5h-1h1v-6h-2v-4M460 709h2v2M583 647h-4v-1h-7v1h-5h-5v-1v1h-7v-1h-4M564 614h-4v3h-4v3v5h-4M552 625v6v6v4h-1v5M581 677h-5h-4v-2v-1h-6h-5v-2h-5v-1M556 671v-5h-2v-6h-1v-4h-2v-4v-6h-1M551 646h-1M557 708v-2h-4M556 671h-5v5h-5v6M553 706v-5h-2h-2v-5v-3v-5h-1v-6h-2M524 736h-1v-5v-7v-4h-1v-7M553 706v1h-6h-5v1v1h-5h-4v2h-7v2h-4M494 614h5h6v1h4v1h5h4h6M494 614v-5v-6h1h3v-6v-5h-1h2v-6M524 616v-2h3M527 614v-6h1h1v-5v-6h1h1v-6v-6M527 582h-4h-7v2h-6h-5v2h-6M527 582v3h4M499 586M491 617v5h1v7h2v6v5M491 617v-3h3M494 640v1h4v1h7v2h5v-1h5v2h4M519 645h1v-5v-7h2v-6v-5h1v-6h1M519 645v6h6M525 651h4v-3h5h7h4v-2h5M552 625h-6v-2h-4v-3v-2h-6h-5v-2h-4v-2M548 584h-6v1h-6h-5M525 557v5h1v6h-1h2v5v5v4M491 558h2v6h2v6v6v6h2v4h2M460 584h5v-1h6v1v2h5v-2h6v2h7v-1h5h5v1M119 709h5v-1h6v1h5h5v-1v2h3h6v-1M119 709h-1M118 709v6h-1v6h1h2v5v5h-1h1v6M120 737h7h6v1h5v2h6v-2h5v2M149 709v6h2v6v4v5h1v6h1M149 740h4v-4M150 709h-1M124 675v5h-2v7v4h-2v6v6v6h-1M90 701h6v6M96 707h7v1h5v1h4h6M185 739h1v-1M185 739h-6v-1v-1h-5h-4h-5h-7h-5v-1M186 738v-6h2h-1v-5h1v-4h-1v-8v-4h1M180 770v-6h1v-4v-5v-6h1v-5h3v-5M146 768v-4h1v-8h1v-4v-7h1v-5M112 745v-1h-7h-3v-2h-8v-2h-5M112 745v5h2v6h1v5h1v5v4h2M84 766v-5h2v-5h1v-5v-5v-5h1M84 766v4h5v3h3h6v3M88 741v-1h1M98 776v-3h5v1h5h4v-3h6v-1M96 707h-1v5v7h-2h-1v5h1v4h-2v7h-2v5M120 737v5h-3v3h-5M121 772v-2h-3M59 735h6v1v2h5h6h5v2v1h7M63 774h4v-2v-2h6h5v-2h6v-2M90 800v-6h1h2v-3v-7h2v-3h1h2v-5M208 743v6h2v4v6h1v6v5h1v5M208 743h7v-4M215 739h6v1h3v2h6v1h6v1h5v1M215 777v-2h-3M215 777h5v-3h5v-2h4v-3v-2h6h5v-4M240 763h1v-7h-1v-5v-6h1M184 774v-1h5h7h4v1v2h5h7v-1M186 738v1h6v3h4h7h5v1M220 711v6v6h-2v5h-2v5h-1v6M250 737h-4v4v4h-5M218 793v-6h-1v-5h-2v-5M255 778h-4v-3v-5h-3v-4h-3h-5v-3M276 88v4v5v7h2v5h1v3h-1h1v7v4h1M306 94v6h-1v6h1v6h-1v5h1M306 117h-5v1h-5v1h-5v1v2h-5h-6v1M281 182v-6h1v-5h-1v-5h2v-6v-5h-1v-5M247 156v-2h4v-2h7h4v-3v-3h4v-2h6h4v-1M276 143h6v7M250 118v2h6h5v2v3h3v2h6v1h5M276 143v-4h-1v-7v-4M275 128v-5h5M403 463h-2v-3M402 425h-5v3h-2v5M401 460h-1v-5v-5h-1h-2v-6v-6v-5h-2M371 490v-6v-4h-1v-6v-6v-4h1M401 460h-4v1h-6v1h-6v1h-3v-1v2h-6h-5M366 376v7v7h-1M366 376v-3h-5v-2h-4v-2h-4v-3h-6h-4v-1M365 390h-4v2h-5v3v2h-7h-4v1v3h-5M331 374v6v6h1v6v5M331 374h4v-4v-3h4v-2h4M332 397h8v4M375 367v5h-4v4h-5M374 400h4h6v1v-1h4v2h7h4M374 400h-5v-5h-4v-5M343 338v5v6h-1v6v6h2v4h-1M310 365v2h6h4v3v2h7v2h4M317 403v-1h5h5v-3h5v-2M467 613v1h-5h-7h-4v4v-1h-6v3h-7h-5M467 613M467 613h-2v6v5v5h-1h-2v4v5v5h-2v6h-1M432 620v6h1v5h-2v4h1v5M432 620h1M459 649v-1h-4v-1h-6h-4h-6M439 647h-7v-7M460 585v7v4h3h1v5v7v5h3M435 587v6h1h-1v4v7h-1v5v4h-1v7M491 617v-1h-6h-5v-2h-8h-5v-1M494 640v7h-5M489 647h-6v2h-3v3h-6h-4h-5v2M465 654v-5h-6M401 611h6v1h5v1v1h4h5v2v3h5v1h6M401 645h6h4v-1v-1h7v-1h3h7v-1v-1h4M427 676v-4h2v-6h1h4v-5h1v-5h2v-4h2v-5M458 685v-5h4h5v-4M467 676v-7h-1h1v-4h-2v-5v-6M518 709v-6h-1h1v-4v-5h2h-2v-5v-5h2v-5M518 709h-5h-7v1h-5v1h-6M495 711v-4h-5M490 707v-5h-1v-8v-5v-6h1M490 683h5v-3v-4h7M502 676h5v1h5h6M518 677h2v2M546 682h-6h-4v-3h-5h-5v2h-6v-2M522 713h-4v-4M491 738v-6v-4h2v-5h1v-7h1v-5M462 711h6v-1h6h5v-2h5h6v-1M467 676h6v3h6h4v3h7v1M489 647h1v5v6h3h3v3h1v5h3v5v5h2M525 651v5v5h-4h-1v6v5h-2v5M328 126h-7v-1h-4v-1h-7v-2M328 126h1v4h1v6v5h2v6h1M310 122v4h-1v6h-2h-2v5v7v4h-3M333 147h-5v4v2h-5h-4v3v2h-5M314 158h-5v-3h-4v-5v-2h-3M341 115v4h-5v2h-4v5h-4M306 117v5h4M342 152h-4v-2v-3h-5M282 150h6v-1h3v-1h6h5M312 175v-5v-6h2v-6M365 456h3v-4v-7h1h1v-5v-5h2M365 456v2h-5v-2h-7h-5v1h-5v2h-6M337 459v-7h-1v-5h-1v-6h-1v-6h1M366 427v5h3h3v3M366 427h-6v-1v-1h-5h-4v-1v-1h-5M335 435h5v-3h2v-5v-4h4M395 433h-5v1h-6h-7h-5v1M371 464v-3h-3h-3v-5M335 461h2v-2M310 425v1h5v3h5h6v1v3h3h6v2M374 400h-1v4v8h-2h-1v5v4h-1h-3v6M340 401v5h1h2v5v7h3v5"/></g>
<g fill="none" stroke="#806a12" stroke-width="1" shape-rendering="crispEdges"><polyline points="167.7,250.0 171.2,310.7 182.0,357.0 178.4,392.7 164.1,424.8 157.0,449.8 149.8,478.3 135.6,530.0 128.4,565.7 132.0,640.6 135.6,654.9 149.8,683.4"/><polyline points="6.0,460.5 42.8,465.8 99.9,474.8 149.8,480.0 214.0,476.5 256.9,473.0 285.4,464.0 321.1,428.4 342.5,403.4 378.2,396.3 406.0,382.0 431.0,364.0 471.4,358.8 542.7,351.7 578.4,349.9 614.1,353.5 649.7,360.6 703.2,367.7 756.8,373.1 806.0,374.9"/><polyline points="256.9,473.0 246.2,499.7 235.5,530.0 214.0,565.7 192.6,637.0"/><polyline points="6.0,662.0 35.7,651.3 89.2,640.6 142.7,640.6 185.5,651.3 214.0,644.2 249.7,640.6 285.4,633.5 303.2,626.3 321.1,624.5 356.8,629.9 406.0,619.2 460.0,620.0 520.0,625.0 560.0,632.0 600.0,640.0 650.0,650.0 700.0,660.0 756.0,655.0 780.0,650.0 806.0,648.0"/><polyline points="89.2,644.2 107.0,669.1 142.7,679.8 160.5,683.4 192.6,662.0"/><polyline points="406.0,544.3 338.9,587.1 306.8,608.5 285.4,637.0"/><polyline points="578.4,353.5 549.8,378.4 517.7,424.8 489.2,453.4 439.2,471.2 400.0,492.6"/><polyline points="589.1,346.3 631.9,317.8 656.9,300.0 721.1,264.3 756.8,250.0 806.0,225.0"/><polyline points="585.5,346.3 571.2,307.1 549.8,278.5 535.6,250.0 517.7,231.9 492.8,271.1"/><polyline points="592.6,360.6 621.2,407.0 631.9,428.4 628.3,464.0 635.5,530.0 650.0,600.0 672.0,650.0 690.0,700.0 710.0,760.0 716.0,806.0"/><polyline points="631.9,424.8 685.4,449.8 738.9,464.0 806.0,492.6"/><polyline points="585.5,6.0 603.4,57.0 592.6,103.5 578.4,135.6 560.5,167.7 535.6,207.0 517.7,231.9"/><polyline points="400.0,132.0 450.0,140.0 520.0,150.0 614.0,153.4 649.7,142.7 721.1,117.7 806.0,71.4"/><polyline points="397.7,170.0 396.5,239.0 395.3,273.4 396.5,303.0 400.2,342.4 402.7,370.0 405.5,381.0 408.3,404.0 413.7,420.5 421.8,438.0 431.3,458.4 450.0,500.0 470.0,540.0 490.0,580.0 500.0,620.0"/><polyline points="504.9,239.0 487.6,273.4 463.0,317.8 445.8,337.5 416.2,364.6 388.0,386.6 350.0,400.8"/><polyline points="400.0,132.0 350.0,150.0 300.0,165.0 250.0,185.0 200.0,205.0 150.0,230.0 100.0,250.0 6.0,255.0"/><polyline points="400.0,132.0 380.0,100.0 350.0,70.0 320.0,55.0 300.0,56.0 270.0,58.0"/><polyline points="400.0,132.0 420.0,180.0 440.0,200.0 470.0,220.0 505.0,238.0"/><polyline points="186.0,6.0 190.0,60.0 188.0,110.0 180.0,160.0"/><polyline points="264.0,6.0 262.0,50.0 250.0,90.0"/><polyline points="806.0,280.0 750.0,300.0 700.0,330.0 649.7,360.6"/><polyline points="738.9,357.0 806.0,332.0"/><polyline points="6.0,600.0 14.3,647.7"/><polyline points="405.5,381.0 460.0,362.0 530.0,352.3"/><polyline points="700.0,470.0 730.0,500.0 760.0,560.0 780.0,600.0 795.0,650.0 790.0,700.0"/><circle cx="582" cy="350" r="10"/><circle cx="401.5" cy="132" rx="35" r="34"/></g>
<polygon points="4.0,705.3 11.2,703.9 19.7,698.3 28.1,699.0 30.2,701.8 26.7,708.1 33.7,706.7 45.0,705.3 47.8,706.0 45.0,715.2 50.6,716.6 51.3,725.0 59.1,724.3 68.9,727.8 71.7,726.4 73.1,734.8 77.4,739.1 72.0,745.0 76.0,752.0 80.0,757.0 82.0,770.0 252.0,770.0 250.0,758.0 243.0,756.0 236.0,750.0 228.0,744.0 213.0,740.0 205.5,731.4 214.0,721.0 221.0,709.0 226.2,691.7 229.7,669.3 226.0,654.0 240.0,647.0 252.0,646.0 262.0,650.0 280.0,653.4 285.6,649.2 289.8,647.8 298.3,650.6 305.3,653.4 306.0,642.2 306.7,628.1 312.3,621.8 319.4,624.6 320.8,636.6 326.4,647.8 333.4,657.6 336.2,660.5 343.3,659.0 353.1,656.2 364.4,652.0 375.6,647.8 386.9,645.0 399.5,646.4 413.6,647.8 427.6,647.1 440.0,646.4 452.8,646.2 475.0,656.0 479.9,663.4 484.8,668.4 497.1,675.8 507.0,683.2 509.4,693.0 511.9,702.9 516.8,710.2 524.2,715.2 534.1,713.9 546.4,705.3 558.7,697.9 573.5,688.1 585.8,680.7 598.1,674.5 606.0,673.9 614.5,676.0 627.2,684.5 637.8,693.0 644.1,703.6 654.7,712.0 656.8,724.7 667.4,733.2 675.9,741.7 680.2,754.4 690.7,758.6 701.3,762.9 705.6,771.4 711.9,779.8 713.0,788.3 712.0,810.0 4.0,810.0" fill="#004060" stroke="#000" stroke-width="1.2" shape-rendering="auto"/>
<polygon points="14.1,718.0 23.9,715.9 32.3,719.4 39.4,722.2 35.2,727.8 28.1,725.0 18.3,722.2" fill="#5c4f4a" stroke="#000" stroke-width="1"/>
<polygon points="177.0,683.0 181.4,679.7 191.7,670.2 196.9,667.6 205.5,665.9 214.1,662.4 217.6,652.1 221.0,652.1 221.0,657.2 226.0,660.0 222.0,670.0 205.5,676.2 200.3,679.7 196.9,684.8 191.7,693.4 184.8,691.7 177.0,688.3" fill="#004060" stroke="#000" stroke-width="1" shape-rendering="auto"/>
<polygon points="418.0,642.0 430.0,639.0 445.0,640.0 455.0,643.0 452.0,646.0 440.0,645.0 425.0,646.0" fill="#004060" stroke="#000" stroke-width="1" shape-rendering="auto"/>
<polygon points="474.0,650.0 480.0,654.0 490.0,657.0 496.0,662.0 500.0,670.0 495.0,672.0 486.0,666.0 478.0,660.0" fill="#004060" stroke="#000" stroke-width="1" shape-rendering="auto"/>
<polygon points="375.0,647.0 378.0,634.0 384.0,630.0 388.0,638.0 395.0,642.0 398.0,645.0 386.0,646.0" fill="#004060" stroke="#000" stroke-width="1" shape-rendering="auto"/>
<polygon points="345.0,656.0 350.0,648.0 356.0,645.0 362.0,648.0 358.0,655.0" fill="#004060" stroke="#000" stroke-width="1" shape-rendering="auto"/>
<polygon points="802.0,560.0 806.0,555.0 808.0,560.0 808.0,665.0 803.0,660.0 801.0,620.0" fill="#004060" stroke="#000" stroke-width="1" shape-rendering="auto"/>
<polygon points="299.6,59.1 309.4,56.7 314.3,61.6 316.8,71.4 323.0,72.7 319.3,78.8 320.5,88.7 323.0,94.8 316.8,86.2 311.9,71.4 307.0,61.6 299.6,60.3" fill="#2b4663" shape-rendering="auto"/>
<polygon points="368.2,261.1 374.3,258.7 381.7,263.6 386.7,267.3 395.3,273.4 396.5,277.1 389.1,273.4 379.3,269.8 371.9,263.6" fill="#2b4663" shape-rendering="auto"/>
<polygon points="613.7,285.8 621.1,288.2 627.3,293.2 618.7,303.0 608.8,312.9 603.9,307.9 613.7,298.1" fill="#2b4663" shape-rendering="auto"/>
<polygon points="427.0,368.0 434.0,363.0 437.0,366.0 431.0,372.0 426.0,374.0" fill="#2b4663" shape-rendering="auto"/>
<polygon points="425.0,412.0 428.0,418.0 431.0,428.0 428.0,432.0 424.0,424.0 423.0,415.0" fill="#2b4663" shape-rendering="auto"/>
<polygon points="527.0,503.0 533.0,512.0 537.0,525.0 534.0,532.0 529.0,520.0" fill="#2b4663" shape-rendering="auto"/>
<polygon points="541.5,601.9 553.8,604.3 558.7,609.3 563.6,611.7 556.2,616.7 546.4,619.1 541.5,616.7" fill="#2b4663" shape-rendering="auto"/>
<polygon points="121.0,656.0 128.0,651.0 135.0,654.0 136.0,662.0 130.0,668.0 122.0,666.0" fill="#2b4663" shape-rendering="auto"/>
<polygon points="42.0,682.0 47.0,680.0 52.0,687.0 49.0,690.0 44.0,688.0" fill="#2b4663" shape-rendering="auto"/>
<polygon points="57.0,684.7 62.0,690.0 65.0,698.5 72.0,703.0 78.8,706.4 84.7,708.4 82.0,711.0 72.0,708.0 63.0,702.0 58.0,693.0" fill="#2b4663" shape-rendering="auto"/>
<polygon points="141.0,700.0 148.0,695.0 155.0,697.0 153.0,707.0 146.0,714.0 140.0,710.0" fill="#2b4663" shape-rendering="auto"/>
<polygon points="784.0,725.0 792.0,735.0 797.0,750.0 792.0,756.0 785.0,742.0" fill="#2b4663" shape-rendering="auto"/>
<polygon points="368.0,261.0 370.0,260.0" fill="#2b4663" shape-rendering="auto"/>
<path d="M180 729h4v3h-4zM200 736h5v4h-5zM195 707h6v2h-6zM231 731h2v4h-2zM241 755h4v3h-4zM204 729h4v3h-4zM182 747h5v4h-5zM169 713h5v3h-5zM233 702h5v4h-5zM198 706h4v2h-4zM229 750h3v4h-3zM215 748h3v2h-3zM227 710h4v3h-4zM195 756h2v4h-2zM235 761h6v4h-6zM170 708h5v3h-5zM177 754h2v3h-2zM170 726h2v3h-2zM165 756h3v4h-3zM206 748h3v2h-3zM235 699h3v4h-3zM200 746h2v2h-2zM173 695h4v2h-4zM183 761h3v2h-3zM171 692h6v3h-6zM234 703h6v3h-6zM203 760h5v2h-5zM244 754h3v4h-3zM177 731h4v4h-4zM162 761h6v3h-6zM233 707h3v2h-3zM228 698h6v2h-6zM198 743h2v2h-2zM197 728h4v3h-4zM217 727h3v3h-3zM239 700h5v3h-5zM207 731h2v2h-2zM206 746h5v2h-5zM183 697h5v3h-5zM176 704h5v4h-5zM224 733h4v2h-4zM205 731h3v3h-3zM236 738h3v3h-3zM169 744h3v3h-3zM177 746h5v4h-5zM240 698h5v2h-5zM231 746h2v4h-2zM245 705h3v3h-3zM199 693h5v3h-5zM205 701h4v3h-4zM220 694h4v2h-4zM242 706h4v2h-4zM213 715h2v3h-2zM244 713h4v2h-4zM240 692h4v4h-4zM206 746h5v4h-5zM193 758h3v4h-3zM219 758h3v3h-3zM215 762h3v3h-3zM238 714h4v4h-4zM179 730h5v3h-5zM227 729h3v2h-3zM230 698h6v2h-6zM192 698h3v3h-3zM190 762h4v2h-4zM232 716h4v3h-4zM223 710h3v3h-3zM223 711h3v3h-3zM200 762h6v2h-6zM163 717h5v3h-5zM239 727h5v2h-5zM162 758h6v3h-6zM190 760h4v3h-4zM224 714h2v2h-2zM204 702h5v4h-5zM207 719h4v4h-4zM198 759h3v3h-3zM183 725h4v2h-4zM180 759h6v2h-6zM186 737h3v3h-3zM165 752h6v2h-6zM229 687h5v3h-5zM228 674h5v4h-5zM202 682h5v2h-5zM208 678h3v3h-3zM201 697h2v2h-2zM214 672h4v4h-4zM227 684h2v2h-2zM207 698h6v3h-6zM231 677h5v2h-5zM201 666h5v2h-5zM211 666h5v4h-5zM209 668h2v3h-2zM213 666h3v4h-3zM224 681h6v2h-6zM213 673h2v2h-2zM217 687h3v2h-3zM202 683h6v3h-6zM208 681h5v3h-5zM108 754h3v2h-3zM121 741h3v4h-3zM124 741h6v2h-6zM137 752h5v3h-5zM101 746h3v3h-3zM145 748h4v2h-4zM127 756h4v2h-4zM106 740h5v3h-5zM147 755h5v3h-5zM86 742h4v2h-4zM151 749h4v4h-4zM109 746h2v3h-2zM118 749h4v3h-4zM92 760h5v2h-5zM147 744h4v4h-4zM84 740h5v2h-5zM144 753h3v3h-3zM156 748h4v3h-4zM160 752h5v3h-5zM131 749h4v4h-4zM92 755h5v2h-5zM164 748h3v2h-3zM152 751h5v3h-5zM81 755h6v2h-6zM137 747h2v3h-2zM160 759h6v2h-6zM112 738h4v4h-4zM96 759h5v2h-5zM83 746h5v3h-5zM108 755h5v3h-5zM155 755h3v3h-3zM149 752h5v3h-5zM109 751h5v3h-5zM118 742h6v3h-6zM153 750h2v2h-2zM157 757h2v3h-2zM85 740h5v3h-5zM151 742h5v2h-5zM119 753h3v3h-3zM161 745h5v4h-5zM102 748h3v3h-3zM90 740h5v2h-5zM155 751h6v2h-6zM81 744h3v3h-3zM154 754h3v2h-3zM95 754h6v3h-6zM791 610h5v3h-5zM805 600h3v3h-3zM806 560h6v2h-6zM802 618h5v2h-5zM795 614h6v2h-6zM796 647h3v4h-3zM803 593h6v3h-6zM792 605h2v2h-2zM796 568h3v3h-3zM790 603h3v3h-3zM793 613h3v2h-3zM804 565h5v3h-5zM791 662h3v2h-3zM795 647h3v3h-3zM798 646h3v3h-3zM800 562h4v3h-4zM791 626h6v2h-6zM790 564h3v4h-3zM796 629h3v2h-3zM801 612h5v3h-5zM788 586h4v4h-4zM805 625h3v2h-3zM793 624h4v3h-4zM799 644h4v2h-4zM795 623h4v3h-4zM793 590h4v3h-4zM788 619h6v4h-6zM789 630h2v4h-2zM803 647h3v3h-3zM788 649h4v3h-4zM798 603h4v2h-4zM791 644h2v4h-2zM799 630h2v2h-2zM801 653h2v2h-2zM798 656h3v2h-3zM169 752h5v4h-5zM166 721h5v4h-5zM167 740h4v2h-4zM153 741h3v2h-3zM177 721h4v2h-4zM153 754h3v3h-3zM174 743h4v3h-4zM157 758h5v3h-5zM167 733h3v2h-3zM155 720h5v4h-5zM166 724h6v2h-6zM176 735h3v3h-3zM155 756h5v3h-5zM152 760h3v3h-3zM166 749h3v3h-3z" fill="#004060"/>
<path d="M166 691l1 -2l-2 2l0 1l3 1M204 743l-2 3l1 -3M186 692l1 2l0 2l3 0l0 2l3 1M198 757l-3 -2l0 -2M182 738l0 1l3 0l1 -1l1 1M184 734l1 1l1 -3l2 2l-2 2M244 696l-2 -3l-1 0l3 0l3 -3l-3 1M212 693l1 -1l1 -2l-3 -1l-3 -3M169 729l-1 1l-1 -2l2 -3l3 -1l-1 -1M215 733l0 2l2 2l-2 -1l0 -1M162 734l2 2l-1 0M190 756l2 0l-3 1l-3 2l-3 -1M181 723l-2 -1l-2 -1l3 -1l3 1M218 699l-2 -1l-2 2l0 2l2 -3M179 744l1 -1l-2 3l-3 3l1 -1M171 756l-3 3l-1 -2l-1 1l1 1l0 -3M171 695l1 1l0 -1M221 747l-1 0l1 2M227 717l-3 -1l2 0l3 2l-1 0l2 0M199 708l3 0l-2 0M234 699l2 -3l2 -1l1 1l-3 3l1 2M160 700l1 -3l1 -3M216 717l3 3l-3 -3l3 -3l2 0M231 759l-3 3l1 1M205 707l1 -3l1 -1M199 740l-1 1l0 -1l1 0l-3 0M219 744l-2 2l0 -2l-2 -3l0 2l0 2M204 722l-2 -1l3 -2l-2 1M204 757l2 2l3 0l1 3l1 1M196 740l0 1l3 3l2 1M235 693l2 2l3 2l-3 -2M220 752l-2 3l-3 -1l-2 0l-3 2M192 696l0 -2l1 -1l-3 -1l-3 2l0 -3M218 717l-3 3l-1 2l1 1l1 -3M223 737l-2 -1l2 0l-3 -3M207 737l3 -2l2 -3l-3 2l-2 3M165 700l-2 2l3 1l-1 -1l0 0M163 748l-1 1l1 -1l2 0l1 2l2 -1M200 696l-1 1l-2 1M167 729l-1 3l-1 2l2 -2l-3 3M179 713l-3 3l-2 2l-2 0l0 0l2 -3M206 720l-3 0l0 3l2 0l0 -2M191 719l-1 3l-1 -2l3 0M214 700l0 -2l-3 3l-3 0l0 -1l0 -3M183 747l0 -2l1 -1l-3 3l-1 2M212 698l-2 1l-3 0M165 737l3 0l-1 3l0 -1M167 711l1 0l1 -1M197 722l-1 3l-2 1l2 3l1 2M230 697l-1 -2l1 3M228 694l0 0l3 2M178 740l1 -3l-3 -2l-1 -2M236 696l3 3l2 1l-3 2M201 738l1 2l0 3l-3 -1l3 1l0 3M189 704l0 3l2 -3l1 1l-2 -2M179 702l3 2l1 0l2 1M236 761l-1 -3l-2 -3M162 701l2 0l-3 -2M167 701l0 3l2 -1l-2 0l-1 0M180 710l1 1l3 -3M198 709l0 2l-1 -1l-3 -3l0 -3l2 2M174 745l2 3l3 3l0 1M201 694l0 1l2 3l3 3l1 1l0 -1M195 751l-3 -1l1 1l1 -3l0 -2M184 741l0 2l-3 -1M163 725l-2 -1l-1 -2l2 0l3 0l-1 -3M183 758l1 0l1 -1l-3 -2l0 -1M195 755l2 -3l2 1l-3 2M214 699l-1 2l-3 0M244 739l0 -3l-2 3l2 -2M173 705l0 -2l-3 -1l-3 -2l-3 -2l-1 -2M193 758l-3 -1l-2 0l-2 -3M190 758l0 -3l2 -1l1 2l3 3M198 719l0 -2l1 0l3 0l-2 3M211 757l-1 3l3 -2l-1 -1M231 699l0 1l3 -2M170 691l1 2l-1 1l2 3l-1 -3l0 1M209 713l-1 0l1 1l-1 2M187 716l3 2l3 -1l-1 -1l-1 -2M170 726l2 2l-2 -1l0 -1l0 -2M201 728l1 -3l-3 0l0 1l3 1l3 -1M178 730l2 3l0 2l1 -1l-3 -1l-1 1M192 722l1 0l-2 -1M179 717l-3 -2l-1 0l-1 -2M163 729l2 -1l3 2l3 3l-2 0l-1 2M210 727l0 -2l-1 -1l1 -2M170 703l-3 3l-1 0l-3 0l3 -2l0 -1M172 705l0 -1l-3 2l2 2l-3 -3M198 744l3 -3l-1 0M198 684l1 3l-3 -2l-2 3M213 695l-1 0l2 1l-2 -2l1 -1M208 686l1 1l-1 -1l3 3l1 3M222 684l3 -1l2 -2l0 3l3 -2l-2 3M200 682l3 -2l-1 -2l3 -3l-1 0l-2 0M228 689l0 -1l0 -2l-2 -1M205 675l2 -3l-2 -2l-1 0l-2 1M204 689l1 -2l2 -1l0 -1l-3 -3l3 1M227 683l1 0l2 0l-2 0l3 1M232 678l3 -2l-3 2l0 -1l3 2l-2 1M219 687l1 2l-1 1l-1 0l3 2M219 697l0 0l-1 1l-2 -2l-1 2M203 694l1 -2l-1 2l0 -2l1 0M213 697l-3 2l-3 1l0 2l-2 -2M212 675l-1 1l3 1l-2 2M204 700l-3 -3l3 2l-2 3l-3 -2M198 683l-1 3l0 2l0 1M216 686l-1 -1l1 -1l1 0l-2 -3l-3 -2M212 666l1 2l-2 3l2 2M219 675l-2 -3l-2 -2l2 -3l0 0M223 671l-1 -2l-3 1l-3 2M212 700l-2 2l3 -3l-3 -1l2 2M230 691l0 -2l3 -3l-1 -2l-2 -2l0 0M199 677l-1 -3l-3 0l-3 1M208 673l2 3l1 0l2 2l-2 1M217 688l3 0l1 1l-3 -1M229 686l1 -2l-1 1l-2 -2l-1 1l-1 -3M199 668l-3 -3l-3 0l1 -3l-3 2l1 3M214 692l2 1l-3 0l2 -3l-3 2M203 669l2 -2l-3 2l-1 1M227 683l2 0l-3 0l2 2l-1 1M213 688l-2 -1l-3 2l-1 2l0 0M93 751l1 3l0 0M118 749l0 0l-3 2l1 2M90 738l3 -2l0 3M78 750l-1 1l0 -2l-3 -1l-2 -3M94 747l-2 2l-3 -1l1 -1l3 -2M150 743l1 2l-1 3M150 759l3 -1l-1 -2M79 755l0 -1l1 -1M77 748l0 -3l-3 3l-2 -1M151 757l0 -2l-3 2M143 748l0 2l0 2M124 740l2 -3l-2 3M115 741l-1 2l0 2l1 -1M162 743l2 3l-1 0l1 1M112 748l3 2l-1 -3l-2 3l-2 1M104 745l-1 -1l-3 -2l0 2M102 748l3 -2l-3 2l-1 -3l1 2l-1 0M119 748l3 -1l2 -2l1 1M99 760l0 2l1 -3l-1 -1M134 756l-1 0l-1 0M129 758l-2 2l0 1l1 0l-1 3M154 740l-3 0l-2 -1l-3 -2M101 743l1 0l-2 0l0 2l2 0M80 758l-1 0l-1 -1M86 742l0 2l-3 0M89 746l2 -2l0 -1l-2 -2M126 748l-2 3l3 0l3 -1l0 3l1 0M133 752l2 -1l1 -3l-1 -1M163 740l2 1l0 3M151 759l-1 1l-1 -2l2 1l-2 -1M157 742l-1 1l-2 -2l2 3l1 3l3 3M112 745l3 -3l0 -2l-3 2l-1 0l3 2M85 750l-1 3l2 3l-2 1l2 2M88 752l-2 -1l-2 1M144 742l-3 -3l3 -1l-2 0l3 0l3 -2M111 753l1 -1l3 2l-1 -3M133 742l-3 3l3 -2l-3 3l-2 3l-2 1M152 752l-2 2l1 -1l-3 -2M117 757l-3 1l0 -3l3 -2l1 0l3 2M104 751l0 2l0 -1l-3 3l-3 3M164 752l2 0l-3 -1l-1 -2l3 1l-1 -2M133 739l1 2l2 0l-2 0l-1 -3M137 743l0 -1l-3 1M101 753l2 2l2 2l1 -3M802 635l0 1l0 3l-1 -3l2 3M798 635l0 1l0 -1M800 587l3 1l2 1l3 0l-2 3l-3 1M794 609l-3 2l1 -1l2 3l-1 -3M789 650l0 0l1 0M798 596l-2 3l-3 0M790 596l2 3l2 2l-1 2l-3 -1M793 561l0 -1l3 -3l-2 0l2 2M803 588l2 0l-2 -2l0 3M796 563l3 -3l-2 2l-1 -1M792 651l1 -1l-3 3l-2 0l-3 -1M788 564l-1 -1l2 -2l-2 -2M806 634l2 3l-2 -2M793 661l-3 2l3 -2l0 2M786 640l-1 0l-1 -1M797 592l3 -1l2 2M790 629l-2 1l0 -1l2 -2l2 -1l3 -3M787 563l-2 -1l-1 -1M788 558l3 1l-2 2M794 603l-2 -3l-1 3l1 2l-1 1l-1 -3M790 582l1 0l2 1l2 2l3 -3l2 3M802 583l-1 1l-3 -3l1 1l-1 -2M790 582l-3 -2l-1 1l1 3l0 -1M804 639l1 -2l2 0l2 3M798 593l2 1l1 2l2 2l-2 -1M802 569l2 -2l0 1l-1 0l2 0M793 612l-3 3l3 -3l3 3l-2 -1M798 604l-2 1l3 -1l0 3l-1 3l3 -2M799 609l1 3l-2 -2l3 -3M805 584l2 3l-2 1l3 0l-3 0M791 662l2 0l-2 3M794 657l3 -3l2 0M786 585l-2 2l-3 1l-1 3l1 2M805 623l-1 -1l-1 3M799 599l-1 -1l1 -2l3 2l1 0M153 740l-1 3l1 -3l3 1M172 740l1 -3l2 -2M172 754l-3 2l3 0l0 -2l3 -2l0 0M156 720l3 -3l-1 -1M161 737l-2 0l-1 3l2 1l0 0l2 1M164 750l2 3l0 3l1 -3l-3 -2M168 736l2 3l3 0l3 -3M151 748l1 -1l3 1M164 755l-1 1l3 -3l3 -2l-3 -2l-2 1M168 736l-3 0l0 -3M158 729l2 3l3 0l2 -1l0 3M172 752l0 2l0 -3l0 0l1 -3M157 741l-3 1l2 2l-2 3l-1 1M155 740l1 -2l0 1l-3 0l2 -2l-1 0M165 728l-3 -2l-2 1l2 -2l3 1l-2 -1" fill="none" stroke="#000" stroke-width="1.2"/>
<polyline points="786,652.7 781.9,671.8 792.4,686.6 792.4,703.6 788.2,716.3 784,724.7" fill="none" stroke="#000" stroke-width="4"/>
<polyline points="786,652.7 781.9,671.8 792.4,686.6 792.4,703.6 788.2,716.3 784,724.7" fill="none" stroke="#004060" stroke-width="2"/>
<g fill="none" stroke="#000" stroke-width="1.1" shape-rendering="crispEdges">
<polyline points="6.0,105.3 155.2,105.3 157.6,114.6 152.7,127.0 142.9,139.3 137.9,149.1 189.0,148.8"/>
<polyline points="220.6,59.1 226.6,51.2 232.5,43.3 240.3,39.4 248.2,40.4 256.1,41.4 264.0,45.3 272.5,53.0 279.9,51.7 281.1,41.9 276.2,32.0 279.9,24.6 292.2,22.2 309.4,14.8 307.0,6.2 306.0,0.0"/>
<polyline points="208.8,104.4 310.6,104.7 310.6,88.7 324.2,91.1 368.5,91.6 420.2,90.6 470.0,93.1 543.9,94.8 606.0,96.1 635.6,96.1 740.0,94.5 806.0,94.8"/>
<polyline points="635.6,96.1 645.4,91.1 660.2,85.0 677.4,80.0 682.4,73.9 694.7,69.0 699.6,59.1 709.4,49.3 719.3,41.9 739.0,32.0 753.8,19.7 763.6,12.3 756.2,7.4 756.0,4.0"/>
<polyline points="763.6,12.3 768.6,24.6 783.3,39.4 795.7,40.6 808.0,31.0"/>
<polyline points="787.0,94.8 783.3,105.9 782.1,118.2 771.0,125.6 763.6,135.5 753.8,139.2 743.9,135.5 726.7,147.8 716.8,152.7 711.9,145.3 704.5,147.8 692.2,157.6 687.3,167.5 675.0,170.0 662.7,174.9 650.3,182.3 630.6,187.2 621.1,192.2 611.3,197.1 611.3,204.5 606.4,214.3 596.5,214.3 589.1,216.8 587.9,239.0"/>
<polyline points="142.9,237.8 300.0,237.0 330.0,237.0 492.6,239.5 530.0,239.7 587.9,239.0 677.8,239.0"/>
<polyline points="677.8,239.0 687.6,235.3 699.6,231.3 716.8,226.4 731.6,221.4 743.9,220.2 808.0,223.4"/>
<polyline points="677.8,239.0 677.4,243.6 665.1,253.4 660.2,263.3 670.0,270.7 684.8,284.2 694.7,284.2 704.5,302.7 709.4,317.5 721.8,332.3 731.6,340.0 743.9,354.8 753.8,364.6 763.6,372.0 766.1,384.3 776.0,399.1 793.2,413.9 803.0,431.1 808.0,445.0"/>
<polyline points="300.0,237.0 307.3,246.4 306.1,253.7 302.4,288.2 300.0,317.8 295.0,370.0 287.0,450.0 280.0,530.0 281.1,560.0 283.6,640.6 284.8,648.7"/>
<polyline points="492.6,239.5 500.0,278.4 507.3,317.8 513.5,370.0 523.0,424.8 528.4,449.8 539.1,467.6 542.7,481.9 533.8,499.7 530.2,510.4 528.4,530.0 531.6,560.0 529.2,574.8 536.5,589.6 541.5,599.4 543.9,611.7"/>
<polyline points="344.3,594.5 536.5,594.5"/>
<polyline points="345.2,594.5 341.5,606.8 348.9,614.2 356.2,621.6 359.9,631.4 356.2,638.8 358.7,648.7"/>
<polyline points="546.4,619.1 606.0,623.5 672.5,626.7 726.0,631.3 744.7,632.3 745.7,646.1 757.5,651.0 758.5,638.2 757.5,616.6 767.4,609.7 783.1,616.6 791.0,618.5"/>
<polyline points="4.0,415.2 78.5,415.2"/>
<polyline points="44.6,594.2 185.5,594.2 178.4,615.6 182.0,633.5 192.6,651.3 194.4,665.6"/>
<polyline points="200.7,3.1 200.5,4.1 201.4,5.1 200.9,7.1 200.0,8.9 199.1,10.2 198.0,10.9 199.4,12.8 201.4,11.5 204.0,10.7 206.3,11.1 207.5,13.0 207.0,15.9 206.1,18.4 205.2,19.8 204.7,20.1 204.5,20.0 204.3,20.6 204.5,22.5 204.3,24.7 204.6,26.8 204.7,24.9 205.5,26.4 207.0,27.6 208.7,28.6 208.8,29.4 207.5,30.5 205.8,32.0 205.5,33.1 205.5,34.3 204.6,34.3 203.6,34.7 202.1,35.1 200.5,38.1 201.0,39.8 202.4,41.0 204.5,41.1 205.8,41.4 206.5,41.7 206.9,42.1 207.5,42.7 208.7,43.5 211.2,44.3 212.4,45.7 212.9,47.1 212.3,48.4 211.1,49.4 209.7,50.4 207.3,51.3 207.7,52.5 209.6,54.2 212.5,56.6 214.0,57.6 214.4,58.0 214.7,57.1 215.8,55.3 218.0,53.4 220.7,53.0 222.7,54.7 222.4,56.6 222.7,58.7 223.0,59.7 223.2,60.1 223.6,60.1 224.4,60.2 224.9,59.5 225.6,61.2 226.4,63.0 227.3,64.5 228.3,65.5 228.3,64.8 229.6,64.9 231.2,64.9 232.4,65.1 233.4,65.5 233.9,66.4 234.1,67.7 234.1,69.2 233.1,71.6 232.2,72.6 231.5,73.4 231.0,74.1 230.6,74.6 230.0,75.0 229.0,74.9 226.8,75.8 225.8,77.2 225.6,78.8 226.3,80.4 227.4,81.4 228.4,82.1 228.6,81.9 228.7,82.7 229.0,84.2 229.9,86.1 230.9,88.0 229.6,91.4 228.3,90.8 226.7,89.4 225.2,88.4 223.8,88.8 222.9,90.6 222.1,92.7 221.4,94.3 220.9,95.2 220.7,95.5 221.2,96.2 220.7,97.3 220.3,100.4 217.9,102.5 215.3,102.2 213.5,99.7 213.2,96.7 211.2,95.5 210.9,95.4 210.2,97.1 208.1,99.2 205.9,100.9 205.6,101.9 208.0,102.9 208.8,106.0 207.3,107.6 205.7,107.6 204.4,106.0 203.3,103.7 202.6,101.8 202.5,100.9 202.5,101.1 202.3,101.1 201.8,100.8 200.8,100.2 199.3,99.5 197.2,98.1 192.5,104.2 193.3,105.8 195.0,106.7 197.1,106.8 199.0,106.4 200.6,105.9 201.1,105.9 201.1,106.9 201.7,109.8 201.2,112.0 201.2,114.2 201.8,116.4 201.2,116.7 199.1,115.5 195.7,114.1 192.6,113.8 193.4,112.8 193.8,116.8 193.2,119.0 193.0,120.8 192.8,121.9 192.8,122.4 192.9,122.6 193.6,122.7 194.7,124.0 196.0,126.3 196.7,128.7 196.1,130.7 194.3,131.6 192.0,131.6 189.3,130.6 187.5,129.7 187.0,129.9 187.1,131.3 187.1,133.7 187.6,136.1 186.9,137.6 186.8,139.1 187.4,139.4 189.1,139.5 191.2,140.0 193.5,140.9 194.1,142.8 193.4,145.1 191.5,147.8 189.6,148.7 188.4,148.9 188.1,148.8 187.9,149.1 187.6,149.6 186.8,150.5 185.6,151.7 184.4,152.9 181.7,154.3 182.4,155.9 184.7,157.0 187.4,157.7 189.0,158.2 189.0,159.0 186.8,160.3 185.8,161.9 185.1,163.5 184.8,164.8 184.6,165.5 184.1,165.7 183.0,165.8 182.0,166.2 180.9,166.8 179.8,167.7 179.1,168.9 178.8,170.4 177.5,171.9 178.2,173.7 178.9,175.0 179.5,175.9 179.8,176.4 179.9,176.7 179.8,177.1 179.8,178.0 180.1,179.9 180.1,181.9 180.0,184.0 179.5,185.7 177.7,185.7 176.2,185.6 174.6,185.1 173.3,184.9 172.5,185.5 172.1,186.9 172.2,189.0 171.7,190.5 171.2,191.6 170.9,192.2 171.1,192.8 171.7,193.7 171.8,195.1 171.3,197.2 170.1,198.1 168.7,198.6 167.3,198.7 166.3,198.7 165.7,198.9 165.1,199.3 164.4,199.8 163.3,200.4 162.0,201.0 160.7,201.6 157.6,201.2 157.6,202.6 158.9,204.4 160.4,206.2 161.2,206.4 160.4,207.6 158.1,208.7 156.5,209.9 155.8,210.8 155.6,210.9 154.8,210.4 152.9,210.0 151.4,211.0 150.1,212.3 149.9,214.0 150.4,215.7 151.2,216.8 151.6,217.3 151.8,216.8 151.7,218.0 152.0,220.1 152.6,222.4 152.7,224.0 151.5,224.3 148.8,223.7 147.0,223.7 146.3,224.8 146.7,226.7 147.4,228.6 147.6,229.7 147.7,230.1 147.9,230.5 148.7,231.2 149.5,233.6 148.8,235.4 147.5,236.6 146.3,238.2 144.3,237.5 142.9,236.6 142.2,236.1 141.8,236.3 141.1,237.2 140.0,238.6 138.5,239.6 137.0,240.4 135.7,241.1 135.1,241.9 135.2,242.9 136.0,244.2 136.3,245.4 136.2,246.7 135.5,247.7 134.1,248.6 133.1,248.7 132.2,249.9 131.7,250.7 131.5,251.3 131.3,251.7 130.7,252.3 129.7,253.2 128.3,254.4 127.6,256.0 127.7,257.5 128.5,258.7 129.6,259.6 130.4,260.2 131.9,260.4 131.5,261.3 130.8,263.0 130.5,265.2 130.5,267.2 130.5,268.6 129.7,268.6 127.5,267.8 124.8,267.3 122.9,268.0 122.6,270.2 123.6,272.9 125.0,274.3 125.4,275.3 125.5,275.6 125.6,275.9 125.9,276.5 126.6,278.1 128.4,280.5 128.4,283.1 126.9,284.4 124.4,284.0 121.9,282.8 120.4,281.9 120.5,283.0 120.3,284.4 119.9,286.2 119.2,287.9 118.4,289.2 117.9,290.1 118.1,290.4 120.4,291.0 122.7,292.4 123.6,294.3 122.3,296.3 119.8,297.6 117.0,297.2 116.6,296.9 116.4,296.8 115.4,296.7 113.1,296.6 110.8,297.0 108.9,297.7 110.1,300.2 112.2,302.5 112.9,303.7 111.6,304.2 109.1,304.9 108.0,305.4 107.3,306.7 107.0,307.4 106.4,307.2 105.1,306.4 103.1,305.6 101.7,306.8 100.6,308.3 100.4,310.3 100.8,312.0 101.1,312.9 101.2,313.2 100.8,313.7 100.6,315.1 100.6,317.0 100.1,318.7 99.1,319.4 97.6,319.2 96.2,318.9 95.3,319.4 95.0,320.9 94.6,322.7 94.0,324.0 93.6,324.7 93.5,325.2 94.5,326.0 95.6,327.5 95.9,329.7 94.9,331.4 93.1,332.3 91.2,332.1 90.1,332.0 89.7,332.2 89.4,332.7 88.5,333.7 87.0,334.8 86.5,336.1 85.9,337.2 85.8,338.2 86.2,339.2 86.7,340.2 86.7,341.2 87.1,342.4 85.6,343.6 84.1,344.8 83.4,345.8 83.1,346.3 82.5,346.0 81.4,346.0 79.6,346.7 78.0,348.0 77.4,349.9 78.0,351.8 79.4,353.2 80.6,354.3 81.9,354.5 82.4,354.5 82.2,354.9 82.0,356.1 82.1,358.0 81.3,359.8 81.5,361.5 81.4,362.8 80.8,363.5 79.7,363.8 78.1,364.0 77.0,364.8 76.3,365.8 76.1,366.9 76.5,368.3 77.3,369.7 78.4,371.2 79.5,372.2 80.1,373.3 80.4,374.1 80.5,374.7 80.8,375.2 81.4,375.7 82.4,376.1 83.6,376.9 84.9,378.1 85.8,379.5 86.3,381.1 86.1,382.7 84.9,384.2 83.6,385.1 82.6,385.6 82.4,386.1 82.7,386.9 83.1,388.3 82.3,390.6 82.0,392.9 82.2,394.2 83.1,392.4 85.6,393.3 88.1,394.6 89.3,396.3 88.2,398.1 85.7,399.6 83.4,400.7 82.3,401.1 82.2,400.9 81.8,400.8 81.0,401.0 79.6,401.5 77.9,402.3 76.3,403.5 75.3,405.1 77.0,408.0 78.3,408.6 79.4,408.9 80.0,409.3 80.1,410.2 80.1,411.5 81.1,413.3 81.8,415.0 81.8,415.8 80.2,415.9 77.9,416.3 76.4,417.5 78.0,419.3 79.0,420.9 80.1,422.0 80.5,422.6 80.7,422.8 81.2,423.3 82.7,424.0 84.2,425.5 84.6,427.2 83.6,428.5 81.9,429.3 80.7,429.7 80.8,430.4 81.6,431.9 82.1,433.8 82.1,435.1 82.6,435.4 84.2,435.1 85.4,435.8 86.2,436.9 86.2,438.6 85.7,440.1 85.3,441.1 85.2,441.6 84.8,441.7 84.2,443.1 83.4,445.4 83.6,447.5 85.2,448.2 87.5,447.6 89.7,446.6 90.3,447.3 90.1,449.4 90.4,451.9 91.1,453.4 91.0,453.6 89.1,453.6 85.8,454.8 84.4,457.2 86.0,459.7 89.2,460.7 91.3,460.3 91.4,459.6 91.7,459.8 93.3,460.7 95.7,462.2 97.0,463.9 95.9,465.4 92.8,466.6 90.1,467.5 90.5,468.7 92.9,470.6 94.7,472.6 93.7,472.0 94.7,471.7 96.9,472.1 99.3,473.9 99.7,476.5 97.6,478.4 94.7,478.7 92.9,478.1 92.6,477.3 92.4,477.6 90.9,479.2 88.5,481.3 87.3,483.1 88.6,484.2 91.4,484.9 94.4,485.5 95.9,486.4 95.2,487.9 93.3,489.9 91.5,491.6 90.8,492.7 90.8,492.9 90.2,492.4 88.4,491.5 85.7,491.4 84.9,493.5 84.3,495.4 84.9,497.3 86.1,498.6 87.0,499.2 87.1,499.5 87.6,500.0 87.2,502.3 87.1,505.2 86.7,506.7 84.9,506.0 82.2,503.9 79.7,502.6 79.0,502.7 78.3,505.0 78.0,508.0 77.8,510.0 77.7,510.6 78.1,510.4 79.3,510.8 80.8,512.8 81.6,515.7 80.8,518.4 78.4,519.4 75.3,518.0 73.4,516.4 72.8,515.5 72.6,516.0 71.5,517.6 69.4,519.1 68.9,520.5 68.8,521.3 70.0,522.5 71.4,523.9 71.7,525.4 70.3,526.7 68.0,526.9 66.7,527.6 66.1,528.0 65.8,528.3 65.0,528.5 63.4,529.0 61.5,529.7 60.4,531.2 60.3,532.9 60.9,534.4 61.9,535.5 62.5,536.3 63.1,537.4 62.2,538.1 61.0,539.5 60.0,541.3 59.3,542.9 58.8,543.8 57.9,543.4 56.0,541.7 53.8,540.7 52.1,541.4 51.4,543.8 51.6,546.4 52.0,547.8 52.0,548.5 51.9,548.7 51.9,549.1 51.9,550.1 51.7,550.3 52.7,552.1 53.3,553.8 52.9,555.3 51.6,556.3 50.0,556.8 48.9,557.2 49.1,558.1 49.3,559.2 49.7,560.6 49.9,562.1 49.9,563.7 49.9,564.9 49.0,566.3 50.1,566.3 52.1,566.1 54.3,566.4 56.2,569.1 55.7,571.1 53.5,572.8 51.5,573.8 50.4,574.0 50.2,573.8 49.9,573.9 48.6,574.8 47.1,576.6 46.0,578.4 46.4,579.9 48.2,580.9 50.2,581.4 51.1,582.0 50.2,583.3 49.3,584.7 48.5,586.3 48.1,587.7 47.9,588.5 47.4,588.7 45.8,588.0 43.2,587.9 41.6,589.4 41.7,591.9 43.1,594.1 44.5,595.1 45.3,595.1 45.5,595.0 45.8,595.9 46.6,598.2 47.3,601.1 47.1,603.1 45.4,603.6 43.0,603.0 40.5,602.0 38.7,601.6 38.1,602.3 38.2,604.3 39.2,606.8 39.0,608.6 38.6,609.7 38.4,610.1 38.8,610.4 39.9,611.2 42.2,612.7 43.1,615.1 41.9,617.2 39.3,618.2 36.9,618.0 35.6,617.3 35.4,616.7 35.0,617.3 33.0,618.8 30.6,620.7 30.0,622.2 32.3,623.3 34.8,624.2 36.3,625.2 36.5,626.3 35.3,627.7 33.2,629.6 31.6,630.6 30.8,631.3 30.5,631.7 30.1,631.6 29.2,631.1 27.5,630.7 25.5,630.8 24.3,632.3 23.4,633.7 23.2,635.5 23.5,637.1 24.0,638.2 24.3,638.8 24.5,639.3 23.9,640.1 23.0,641.3 22.1,643.0 21.2,644.8 20.4,645.9 19.2,645.4 17.8,644.2 16.3,643.0 15.0,642.9 14.0,644.2 13.3,646.2 11.8,647.9 11.5,648.8 11.6,648.8 12.5,649.1 13.2,650.7 13.3,653.3 11.3,654.2 10.0,655.4 8.4,655.8 6.7,655.5 5.3,654.8 4.3,654.0 4.0,655.0"/>
</g>
<circle cx="406.5" cy="406.5" r="159.3" fill="none" stroke="#d8d8d8" stroke-width="1" shape-rendering="crispEdges"/>
<circle cx="406.5" cy="406.5" r="279" fill="none" stroke="#d8d8d8" stroke-width="1" shape-rendering="crispEdges"/>
<circle cx="406.5" cy="406.5" r="398.8" fill="none" stroke="#d8d8d8" stroke-width="1" shape-rendering="crispEdges"/>
<circle cx="406.5" cy="406.5" r="518.6" fill="none" stroke="#d8d8d8" stroke-width="1" shape-rendering="crispEdges"/>
<circle cx="406.5" cy="406.5" r="39.5" fill="none" stroke="#ff1010" stroke-width="1.3" shape-rendering="crispEdges"/>
<text x="407.0" y="370.8" font-size="10.5" fill="#ffffa0" text-anchor="middle" font-family="Liberation Sans" letter-spacing="1.2">31</text>
<text x="407.0" y="251.0" font-size="10.5" fill="#ffffa0" text-anchor="middle" font-family="Liberation Sans" letter-spacing="1.2">125</text>
<text x="407.0" y="131.3" font-size="10.5" fill="#ffffa0" text-anchor="middle" font-family="Liberation Sans" letter-spacing="1.2">219</text>
<text x="407.0" y="11.5" font-size="10.5" fill="#ffffa0" text-anchor="middle" font-family="Liberation Sans" letter-spacing="1.2">313</text>
<defs><g id="scp"><circle r="4.5" fill="none"/><path d="M-2.5 0h5M0 -2.5v5"/></g><g id="scm"><circle r="4.5" fill="none"/><path d="M-2.5 0h5"/></g><path id="sp" d="M-4 0h8M0 -4v8"/><path id="sm" d="M-4 0h8"/></defs>
<g stroke-width="1" shape-rendering="auto">
<g stroke="#ff8000">
<use href="#sp" x="138.5" y="173.5"/>
</g>
<g stroke="#ffa000">
<use href="#scp" x="161.5" y="162.5"/>
</g>
<g stroke="#ff8000">
<use href="#sm" x="105.5" y="181.5"/>
</g>
<g stroke="#ffa000">
<use href="#scm" x="153.5" y="182.5"/>
<use href="#scp" x="166.5" y="157.5"/>
<use href="#scp" x="143.5" y="160.5"/>
<use href="#scp" x="165.5" y="171.5"/>
<use href="#sp" x="143.5" y="188.5"/>
<use href="#sm" x="124.5" y="201.5"/>
</g>
<g stroke="#ff8000">
<use href="#scm" x="89.5" y="162.5"/>
</g>
<g stroke="#ffa000">
<use href="#sm" x="128.5" y="196.5"/>
<use href="#sp" x="106.5" y="185.5"/>
</g>
<g stroke="#ff8000">
<use href="#scm" x="111.5" y="180.5"/>
</g>
<g stroke="#ffc800">
<use href="#sm" x="167.5" y="139.5"/>
</g>
<g stroke="#ffa000">
<use href="#scp" x="128.5" y="179.5"/>
</g>
<g stroke="#ffc800">
<use href="#scp" x="153.5" y="177.5"/>
</g>
<g stroke="#ff8000">
<use href="#sm" x="125.5" y="167.5"/>
<use href="#scm" x="143.5" y="176.5"/>
</g>
<g stroke="#ffa000">
<use href="#sm" x="142.5" y="189.5"/>
</g>
<g stroke="#ff8000">
<use href="#sm" x="164.5" y="127.5"/>
</g>
<g stroke="#ffa000">
<use href="#scp" x="126.5" y="178.5"/>
</g>
<g stroke="#ff8000">
<use href="#sp" x="155.5" y="153.5"/>
</g>
<g stroke="#ffa000">
<use href="#scp" x="82.5" y="170.5"/>
</g>
<g stroke="#ffc800">
<use href="#sp" x="155.5" y="153.5"/>
</g>
<g stroke="#ffa000">
<use href="#sm" x="130.5" y="216.5"/>
</g>
<g stroke="#ffc800">
<use href="#scp" x="182.5" y="171.5"/>
</g>
<g stroke="#ffa000">
<use href="#sm" x="107.5" y="185.5"/>
</g>
<g stroke="#ffc800">
<use href="#scp" x="125.5" y="215.5"/>
</g>
<g stroke="#ffa000">
<use href="#scm" x="164.5" y="149.5"/>
<use href="#sm" x="141.5" y="183.5"/>
</g>
<g stroke="#ffc800">
<use href="#scp" x="138.5" y="153.5"/>
</g>
<g stroke="#ff8000">
<use href="#scm" x="119.5" y="199.5"/>
<use href="#sp" x="155.5" y="169.5"/>
</g>
<g stroke="#ffc800">
<use href="#scm" x="152.5" y="141.5"/>
</g>
<g stroke="#ffa000">
<use href="#scm" x="140.5" y="213.5"/>
<use href="#scm" x="160.5" y="191.5"/>
<use href="#sp" x="133.5" y="135.5"/>
<use href="#sm" x="111.5" y="170.5"/>
<use href="#sm" x="189.5" y="162.5"/>
<use href="#scp" x="157.5" y="132.5"/>
</g>
<g stroke="#ff8000">
<use href="#sp" x="173.5" y="176.5"/>
</g>
<g stroke="#ffc800">
<use href="#sm" x="151.5" y="164.5"/>
</g>
<g stroke="#ff8000">
<use href="#scm" x="100.5" y="156.5"/>
</g>
<g stroke="#ffa000">
<use href="#scp" x="101.5" y="173.5"/>
<use href="#sm" x="172.5" y="167.5"/>
</g>
<g stroke="#ffc800">
<use href="#scp" x="119.5" y="198.5"/>
</g>
<g stroke="#ff8000">
<use href="#sm" x="132.5" y="207.5"/>
</g>
<g stroke="#ffa000">
<use href="#scp" x="157.5" y="166.5"/>
<use href="#scp" x="136.5" y="173.5"/>
<use href="#scm" x="161.5" y="139.5"/>
</g>
<g stroke="#ffc800">
<use href="#scp" x="173.5" y="145.5"/>
</g>
<g stroke="#ffa000">
<use href="#sm" x="117.5" y="162.5"/>
<use href="#scp" x="109.5" y="175.5"/>
</g>
<g stroke="#ffc800">
<use href="#scp" x="141.5" y="143.5"/>
</g>
<g stroke="#ffa000">
<use href="#scp" x="95.5" y="175.5"/>
<use href="#sm" x="154.5" y="182.5"/>
<use href="#sm" x="122.5" y="149.5"/>
<use href="#sm" x="154.5" y="160.5"/>
<use href="#sm" x="129.5" y="152.5"/>
<use href="#sm" x="132.5" y="215.5"/>
</g>
<g stroke="#ffc800">
<use href="#scp" x="120.5" y="197.5"/>
</g>
<g stroke="#ffa000">
<use href="#scp" x="147.5" y="160.5"/>
<use href="#scm" x="143.5" y="194.5"/>
</g>
<g stroke="#ff8000">
<use href="#sm" x="153.5" y="195.5"/>
</g>
<g stroke="#ffa000">
<use href="#sp" x="115.5" y="206.5"/>
<use href="#scm" x="146.5" y="169.5"/>
<use href="#scp" x="152.5" y="170.5"/>
<use href="#sp" x="139.5" y="170.5"/>
</g>
<g stroke="#ffc800">
<use href="#sm" x="103.5" y="205.5"/>
</g>
<g stroke="#ffa000">
<use href="#sp" x="167.5" y="170.5"/>
</g>
<g stroke="#ff8000">
<use href="#scp" x="214.5" y="102.5"/>
</g>
<g stroke="#ffa000">
<use href="#scm" x="199.5" y="125.5"/>
<use href="#scm" x="137.5" y="154.5"/>
</g>
<g stroke="#ff8000">
<use href="#scp" x="181.5" y="130.5"/>
</g>
<g stroke="#ffc800">
<use href="#scp" x="208.5" y="130.5"/>
</g>
<g stroke="#ffa000">
<use href="#scp" x="229.5" y="110.5"/>
</g>
<g stroke="#ffc800">
<use href="#scp" x="218.5" y="152.5"/>
</g>
<g stroke="#ffa000">
<use href="#scp" x="205.5" y="155.5"/>
<use href="#scp" x="201.5" y="126.5"/>
</g>
<g stroke="#ff8000">
<use href="#sm" x="219.5" y="133.5"/>
</g>
<g stroke="#ffc800">
<use href="#sm" x="195.5" y="138.5"/>
</g>
<g stroke="#ffa000">
<use href="#scp" x="138.5" y="155.5"/>
</g>
<g stroke="#ffc800">
<use href="#scp" x="131.5" y="169.5"/>
<use href="#scp" x="181.5" y="169.5"/>
<use href="#sm" x="182.5" y="116.5"/>
</g>
<g stroke="#ffa000">
<use href="#scp" x="199.5" y="134.5"/>
<use href="#scp" x="189.5" y="149.5"/>
<use href="#sp" x="218.5" y="135.5"/>
</g>
<g stroke="#ffc800">
<use href="#scp" x="135.5" y="171.5"/>
</g>
<g stroke="#ffa000">
<use href="#scm" x="201.5" y="137.5"/>
</g>
<g stroke="#ff8000">
<use href="#scm" x="132.5" y="158.5"/>
</g>
<g stroke="#ffc800">
<use href="#scp" x="224.5" y="136.5"/>
</g>
<g stroke="#ffa000">
<use href="#scp" x="150.5" y="187.5"/>
<use href="#scp" x="200.5" y="115.5"/>
<use href="#scm" x="217.5" y="118.5"/>
<use href="#sp" x="205.5" y="124.5"/>
<use href="#sm" x="230.5" y="114.5"/>
<use href="#scp" x="206.5" y="126.5"/>
</g>
<g stroke="#ffc800">
<use href="#scm" x="166.5" y="186.5"/>
</g>
<g stroke="#ffa000">
<use href="#sm" x="217.5" y="142.5"/>
<use href="#sp" x="160.5" y="150.5"/>
<use href="#scm" x="140.5" y="192.5"/>
</g>
<g stroke="#ffc800">
<use href="#scp" x="202.5" y="156.5"/>
</g>
<g stroke="#ffa000">
<use href="#scp" x="153.5" y="160.5"/>
<use href="#scm" x="218.5" y="116.5"/>
<use href="#sp" x="136.5" y="167.5"/>
</g>
<g stroke="#ffc800">
<use href="#scp" x="211.5" y="134.5"/>
</g>
<g stroke="#ffa000">
<use href="#sp" x="162.5" y="172.5"/>
</g>
<g stroke="#ffc800">
<use href="#scp" x="207.5" y="137.5"/>
<use href="#scp" x="224.5" y="95.5"/>
</g>
<g stroke="#ffa000">
<use href="#sp" x="162.5" y="178.5"/>
<use href="#scm" x="144.5" y="193.5"/>
</g>
<g stroke="#ffc800">
<use href="#sm" x="117.5" y="155.5"/>
</g>
<g stroke="#ff8000">
<use href="#scm" x="169.5" y="158.5"/>
</g>
<g stroke="#ffa000">
<use href="#scp" x="234.5" y="126.5"/>
<use href="#scm" x="177.5" y="160.5"/>
<use href="#scp" x="164.5" y="161.5"/>
</g>
<g stroke="#ff8000">
<use href="#scp" x="198.5" y="130.5"/>
</g>
<g stroke="#ffc800">
<use href="#scp" x="226.5" y="121.5"/>
<use href="#scm" x="130.5" y="174.5"/>
<use href="#sm" x="160.5" y="136.5"/>
</g>
<g stroke="#ffa000">
<use href="#sp" x="155.5" y="187.5"/>
<use href="#scp" x="232.5" y="136.5"/>
<use href="#scm" x="178.5" y="151.5"/>
</g>
<g stroke="#ff8000">
<use href="#sp" x="135.5" y="158.5"/>
<use href="#scp" x="222.5" y="144.5"/>
</g>
<g stroke="#ffa000">
<use href="#scp" x="188.5" y="143.5"/>
</g>
<g stroke="#ffc800">
<use href="#scm" x="236.5" y="137.5"/>
<use href="#scp" x="135.5" y="166.5"/>
<use href="#scp" x="144.5" y="183.5"/>
<use href="#scm" x="132.5" y="169.5"/>
</g>
<g stroke="#ffa000">
<use href="#scp" x="148.5" y="175.5"/>
</g>
<g stroke="#ffc800">
<use href="#sp" x="201.5" y="133.5"/>
</g>
<g stroke="#ffa000">
<use href="#scp" x="153.5" y="192.5"/>
</g>
<g stroke="#ffc800">
<use href="#scp" x="227.5" y="139.5"/>
</g>
<g stroke="#ffa000">
<use href="#scp" x="174.5" y="142.5"/>
<use href="#scp" x="190.5" y="153.5"/>
<use href="#scm" x="196.5" y="149.5"/>
<use href="#scp" x="220.5" y="133.5"/>
<use href="#sp" x="194.5" y="141.5"/>
<use href="#scp" x="193.5" y="159.5"/>
</g>
<g stroke="#ff8000">
<use href="#scp" x="214.5" y="123.5"/>
</g>
<g stroke="#ffa000">
<use href="#scp" x="233.5" y="118.5"/>
</g>
<g stroke="#ffc800">
<use href="#scp" x="190.5" y="150.5"/>
</g>
<g stroke="#ffa000">
<use href="#scp" x="177.5" y="151.5"/>
</g>
<g stroke="#ffc800">
<use href="#scp" x="212.5" y="136.5"/>
</g>
<g stroke="#ffa000">
<use href="#scp" x="181.5" y="142.5"/>
<use href="#sp" x="178.5" y="161.5"/>
<use href="#scp" x="235.5" y="123.5"/>
<use href="#scp" x="203.5" y="147.5"/>
<use href="#sm" x="213.5" y="144.5"/>
<use href="#sm" x="226.5" y="142.5"/>
<use href="#sp" x="175.5" y="131.5"/>
</g>
<g stroke="#ffc800">
<use href="#sp" x="173.5" y="156.5"/>
<use href="#scp" x="186.5" y="117.5"/>
</g>
<g stroke="#ff8000">
<use href="#scp" x="129.5" y="179.5"/>
</g>
<g stroke="#ffa000">
<use href="#sp" x="128.5" y="182.5"/>
<use href="#sp" x="165.5" y="167.5"/>
<use href="#scp" x="131.5" y="177.5"/>
</g>
<g stroke="#ffc800">
<use href="#sm" x="202.5" y="147.5"/>
</g>
<g stroke="#ffa000">
<use href="#scp" x="137.5" y="143.5"/>
</g>
<g stroke="#ffc800">
<use href="#scp" x="224.5" y="106.5"/>
<use href="#scp" x="180.5" y="157.5"/>
<use href="#sp" x="193.5" y="134.5"/>
</g>
<g stroke="#ffa000">
<use href="#scp" x="206.5" y="143.5"/>
<use href="#scp" x="157.5" y="169.5"/>
</g>
<g stroke="#ff8000">
<use href="#sp" x="135.5" y="166.5"/>
</g>
<g stroke="#ffc800">
<use href="#sm" x="178.5" y="133.5"/>
</g>
<g stroke="#ffa000">
<use href="#sm" x="178.5" y="150.5"/>
<use href="#scp" x="165.5" y="152.5"/>
</g>
<g stroke="#ffc800">
<use href="#sm" x="180.5" y="155.5"/>
<use href="#scp" x="185.5" y="132.5"/>
</g>
<g stroke="#ffa000">
<use href="#scm" x="212.5" y="125.5"/>
</g>
<g stroke="#ffc800">
<use href="#scm" x="222.5" y="135.5"/>
</g>
<g stroke="#ffa000">
<use href="#sm" x="176.5" y="176.5"/>
</g>
<g stroke="#ff8000">
<use href="#scp" x="228.5" y="141.5"/>
</g>
<g stroke="#ffa000">
<use href="#sm" x="162.5" y="140.5"/>
</g>
<g stroke="#ffc800">
<use href="#sp" x="205.5" y="144.5"/>
</g>
<g stroke="#ffa000">
<use href="#scp" x="210.5" y="102.5"/>
<use href="#scp" x="146.5" y="177.5"/>
<use href="#scp" x="167.5" y="145.5"/>
</g>
<g stroke="#ffc800">
<use href="#scp" x="164.5" y="142.5"/>
</g>
<g stroke="#ffa000">
<use href="#scm" x="231.5" y="117.5"/>
</g>
<g stroke="#ffc800">
<use href="#sp" x="242.5" y="133.5"/>
<use href="#scp" x="170.5" y="166.5"/>
<use href="#scm" x="150.5" y="161.5"/>
</g>
<g stroke="#ffa000">
<use href="#scp" x="199.5" y="140.5"/>
<use href="#scp" x="165.5" y="167.5"/>
<use href="#scp" x="181.5" y="148.5"/>
</g>
<g stroke="#ffc800">
<use href="#scp" x="167.5" y="169.5"/>
</g>
<g stroke="#ffa000">
<use href="#scm" x="219.5" y="131.5"/>
<use href="#scp" x="158.5" y="185.5"/>
</g>
<g stroke="#ffc800">
<use href="#scm" x="224.5" y="140.5"/>
</g>
<g stroke="#ff8000">
<use href="#scm" x="142.5" y="180.5"/>
</g>
<g stroke="#ffa000">
<use href="#sp" x="185.5" y="154.5"/>
<use href="#sm" x="191.5" y="155.5"/>
</g>
<g stroke="#ffc800">
<use href="#sm" x="227.5" y="140.5"/>
</g>
<g stroke="#ffa000">
<use href="#sp" x="197.5" y="140.5"/>
</g>
<g stroke="#ff8000">
<use href="#scm" x="214.5" y="134.5"/>
</g>
<g stroke="#ffa000">
<use href="#scp" x="226.5" y="121.5"/>
<use href="#scp" x="204.5" y="103.5"/>
<use href="#scp" x="174.5" y="154.5"/>
</g>
<g stroke="#ff8000">
<use href="#scm" x="117.5" y="168.5"/>
</g>
<g stroke="#ffa000">
<use href="#scp" x="133.5" y="152.5"/>
</g>
<g stroke="#ffc800">
<use href="#scp" x="192.5" y="139.5"/>
<use href="#scp" x="175.5" y="144.5"/>
</g>
<g stroke="#ffa000">
<use href="#scp" x="140.5" y="178.5"/>
<use href="#scp" x="206.5" y="113.5"/>
<use href="#scp" x="193.5" y="163.5"/>
<use href="#scp" x="134.5" y="166.5"/>
<use href="#sm" x="177.5" y="120.5"/>
<use href="#scp" x="145.5" y="145.5"/>
<use href="#scp" x="179.5" y="147.5"/>
</g>
<g stroke="#ff8000">
<use href="#scp" x="150.5" y="163.5"/>
<use href="#scp" x="221.5" y="124.5"/>
</g>
<g stroke="#ffa000">
<use href="#scp" x="186.5" y="137.5"/>
<use href="#sm" x="193.5" y="136.5"/>
</g>
<g stroke="#ff8000">
<use href="#sp" x="234.5" y="112.5"/>
</g>
<g stroke="#ffa000">
<use href="#sm" x="203.5" y="144.5"/>
<use href="#scp" x="127.5" y="151.5"/>
</g>
<g stroke="#ffc800">
<use href="#sm" x="143.5" y="159.5"/>
</g>
<g stroke="#ff8000">
<use href="#scp" x="149.5" y="160.5"/>
</g>
<g stroke="#ffa000">
<use href="#scp" x="185.5" y="169.5"/>
</g>
<g stroke="#ff8000">
<use href="#scp" x="184.5" y="150.5"/>
</g>
<g stroke="#ffc800">
<use href="#scp" x="192.5" y="124.5"/>
<use href="#scp" x="159.5" y="171.5"/>
</g>
<g stroke="#ff8000">
<use href="#sm" x="157.5" y="185.5"/>
</g>
<g stroke="#ffc800">
<use href="#scm" x="145.5" y="196.5"/>
</g>
<g stroke="#ffa000">
<use href="#scp" x="231.5" y="136.5"/>
</g>
<g stroke="#ffc800">
<use href="#scp" x="194.5" y="123.5"/>
<use href="#sp" x="232.5" y="120.5"/>
<use href="#sp" x="148.5" y="182.5"/>
<use href="#sp" x="221.5" y="121.5"/>
</g>
<g stroke="#ffa000">
<use href="#scp" x="231.5" y="135.5"/>
</g>
<g stroke="#ffc800">
<use href="#sm" x="172.5" y="177.5"/>
</g>
<g stroke="#ffa000">
<use href="#scp" x="221.5" y="114.5"/>
<use href="#scp" x="154.5" y="150.5"/>
</g>
<g stroke="#ffc800">
<use href="#sm" x="226.5" y="109.5"/>
<use href="#scp" x="184.5" y="156.5"/>
</g>
<g stroke="#ffa000">
<use href="#scp" x="186.5" y="156.5"/>
</g>
<g stroke="#ffc800">
<use href="#scp" x="166.5" y="139.5"/>
</g>
<g stroke="#ffa000">
<use href="#scp" x="164.5" y="167.5"/>
</g>
<g stroke="#ffc800">
<use href="#scp" x="166.5" y="164.5"/>
<use href="#scp" x="146.5" y="153.5"/>
</g>
<g stroke="#ffa000">
<use href="#sp" x="210.5" y="125.5"/>
<use href="#sm" x="216.5" y="122.5"/>
<use href="#scp" x="148.5" y="153.5"/>
</g>
<g stroke="#ffc800">
<use href="#scp" x="221.5" y="132.5"/>
</g>
<g stroke="#ffa000">
<use href="#scp" x="172.5" y="168.5"/>
</g>
<g stroke="#ffc800">
<use href="#sp" x="140.5" y="178.5"/>
</g>
<g stroke="#ff8000">
<use href="#scm" x="170.5" y="147.5"/>
</g>
<g stroke="#ffc800">
<use href="#sp" x="217.5" y="104.5"/>
</g>
<g stroke="#ff8000">
<use href="#scm" x="163.5" y="153.5"/>
<use href="#scp" x="154.5" y="164.5"/>
</g>
<g stroke="#ffa000">
<use href="#scp" x="191.5" y="133.5"/>
<use href="#scp" x="152.5" y="137.5"/>
</g>
<g stroke="#ffc800">
<use href="#sp" x="225.5" y="128.5"/>
<use href="#sp" x="162.5" y="169.5"/>
</g>
<g stroke="#ffa000">
<use href="#sp" x="140.5" y="161.5"/>
</g>
<g stroke="#ffc800">
<use href="#sp" x="148.5" y="141.5"/>
</g>
<g stroke="#ffa000">
<use href="#scm" x="166.5" y="166.5"/>
<use href="#sm" x="169.5" y="152.5"/>
<use href="#scm" x="186.5" y="168.5"/>
<use href="#scm" x="147.5" y="171.5"/>
<use href="#sp" x="195.5" y="144.5"/>
</g>
<g stroke="#ffc800">
<use href="#scp" x="135.5" y="164.5"/>
</g>
<g stroke="#ffa000">
<use href="#scp" x="132.5" y="174.5"/>
</g>
<g stroke="#ffc800">
<use href="#sm" x="178.5" y="119.5"/>
<use href="#scp" x="160.5" y="144.5"/>
</g>
<g stroke="#ffa000">
<use href="#scp" x="166.5" y="125.5"/>
<use href="#scp" x="192.5" y="141.5"/>
<use href="#sp" x="231.5" y="105.5"/>
</g>
<g stroke="#ffc800">
<use href="#scp" x="173.5" y="163.5"/>
</g>
<g stroke="#ffa000">
<use href="#scp" x="186.5" y="133.5"/>
<use href="#scm" x="181.5" y="136.5"/>
</g>
<g stroke="#ff8000">
<use href="#scm" x="227.5" y="137.5"/>
</g>
<g stroke="#ffa000">
<use href="#sm" x="211.5" y="133.5"/>
</g>
<g stroke="#ffc800">
<use href="#scm" x="198.5" y="131.5"/>
<use href="#scp" x="203.5" y="112.5"/>
</g>
<g stroke="#ffa000">
<use href="#scp" x="172.5" y="183.5"/>
</g>
<g stroke="#ffc800">
<use href="#sm" x="193.5" y="141.5"/>
</g>
<g stroke="#ff8000">
<use href="#sp" x="184.5" y="154.5"/>
<use href="#scm" x="223.5" y="121.5"/>
</g>
<g stroke="#ffa000">
<use href="#scp" x="182.5" y="149.5"/>
</g>
<g stroke="#ffc800">
<use href="#scp" x="226.5" y="133.5"/>
<use href="#sm" x="132.5" y="179.5"/>
</g>
<g stroke="#ffa000">
<use href="#sm" x="168.5" y="139.5"/>
</g>
<g stroke="#ff8000">
<use href="#scp" x="136.5" y="204.5"/>
</g>
<g stroke="#ffa000">
<use href="#scp" x="210.5" y="135.5"/>
<use href="#scp" x="160.5" y="175.5"/>
<use href="#scp" x="205.5" y="125.5"/>
<use href="#scm" x="208.5" y="134.5"/>
</g>
<g stroke="#ffc800">
<use href="#scp" x="180.5" y="163.5"/>
</g>
<g stroke="#ffa000">
<use href="#scp" x="202.5" y="141.5"/>
</g>
<g stroke="#ffc800">
<use href="#sp" x="223.5" y="125.5"/>
</g>
<g stroke="#ffa000">
<use href="#sp" x="187.5" y="154.5"/>
<use href="#scp" x="138.5" y="151.5"/>
</g>
<g stroke="#ff8000">
<use href="#sp" x="219.5" y="133.5"/>
</g>
<g stroke="#ffa000">
<use href="#sp" x="196.5" y="112.5"/>
</g>
<g stroke="#ffc800">
<use href="#scp" x="137.5" y="150.5"/>
<use href="#scp" x="113.5" y="157.5"/>
</g>
<g stroke="#ff8000">
<use href="#scp" x="231.5" y="124.5"/>
</g>
<g stroke="#ffc800">
<use href="#scp" x="202.5" y="112.5"/>
</g>
<g stroke="#ffa000">
<use href="#sm" x="182.5" y="164.5"/>
<use href="#scp" x="143.5" y="155.5"/>
<use href="#sm" x="189.5" y="156.5"/>
</g>
<g stroke="#ff8000">
<use href="#scp" x="143.5" y="159.5"/>
</g>
<g stroke="#ffa000">
<use href="#scp" x="203.5" y="122.5"/>
</g>
<g stroke="#ffc800">
<use href="#scp" x="190.5" y="148.5"/>
<use href="#scm" x="218.5" y="122.5"/>
</g>
<g stroke="#ffa000">
<use href="#scm" x="227.5" y="122.5"/>
<use href="#sm" x="176.5" y="119.5"/>
<use href="#scp" x="221.5" y="132.5"/>
</g>
<g stroke="#ff8000">
<use href="#scm" x="167.5" y="166.5"/>
</g>
<g stroke="#ffa000">
<use href="#scp" x="235.5" y="124.5"/>
</g>
<g stroke="#ffc800">
<use href="#scp" x="163.5" y="166.5"/>
</g>
<g stroke="#ffa000">
<use href="#sm" x="218.5" y="114.5"/>
</g>
<g stroke="#ffc800">
<use href="#sm" x="225.5" y="114.5"/>
</g>
<g stroke="#ffa000">
<use href="#sm" x="153.5" y="134.5"/>
</g>
<g stroke="#ff8000">
<use href="#scm" x="183.5" y="154.5"/>
</g>
<g stroke="#ffa000">
<use href="#scp" x="134.5" y="146.5"/>
<use href="#scp" x="176.5" y="156.5"/>
</g>
<g stroke="#ffc800">
<use href="#sm" x="147.5" y="160.5"/>
</g>
<g stroke="#ffa000">
<use href="#sp" x="228.5" y="124.5"/>
<use href="#scm" x="157.5" y="159.5"/>
</g>
<g stroke="#ffc800">
<use href="#sm" x="147.5" y="155.5"/>
</g>
<g stroke="#ffa000">
<use href="#scp" x="219.5" y="135.5"/>
</g>
<g stroke="#ff8000">
<use href="#scp" x="181.5" y="176.5"/>
</g>
<g stroke="#ffc800">
<use href="#scp" x="182.5" y="141.5"/>
</g>
<g stroke="#ffa000">
<use href="#scp" x="223.5" y="98.5"/>
</g>
<g stroke="#ffff00">
<use href="#scp" x="159.5" y="236.5"/>
</g>
<g stroke="#ffa000">
<use href="#sp" x="166.5" y="228.5"/>
<use href="#sm" x="180.5" y="219.5"/>
<use href="#scp" x="158.5" y="225.5"/>
</g>
<g stroke="#ffc800">
<use href="#sm" x="162.5" y="211.5"/>
</g>
<g stroke="#ffff00">
<use href="#scp" x="224.5" y="187.5"/>
</g>
<g stroke="#ffc800">
<use href="#scp" x="217.5" y="206.5"/>
<use href="#scp" x="196.5" y="202.5"/>
</g>
<g stroke="#ffa000">
<use href="#scp" x="234.5" y="172.5"/>
</g>
<g stroke="#ffff00">
<use href="#scp" x="141.5" y="236.5"/>
<use href="#sp" x="163.5" y="243.5"/>
<use href="#scp" x="218.5" y="189.5"/>
</g>
<g stroke="#ffc800">
<use href="#scm" x="165.5" y="236.5"/>
<use href="#scp" x="211.5" y="185.5"/>
</g>
<g stroke="#ffff00">
<use href="#scp" x="176.5" y="209.5"/>
<use href="#scp" x="161.5" y="242.5"/>
</g>
<g stroke="#ffc800">
<use href="#sp" x="187.5" y="226.5"/>
</g>
<g stroke="#ffff00">
<use href="#scp" x="201.5" y="195.5"/>
</g>
<g stroke="#ffa000">
<use href="#scp" x="205.5" y="213.5"/>
</g>
<g stroke="#ffc800">
<use href="#scp" x="171.5" y="240.5"/>
<use href="#scm" x="203.5" y="208.5"/>
<use href="#scp" x="170.5" y="222.5"/>
</g>
<g stroke="#ffa000">
<use href="#sm" x="187.5" y="192.5"/>
</g>
<g stroke="#ffc800">
<use href="#scp" x="165.5" y="216.5"/>
<use href="#sp" x="187.5" y="191.5"/>
<use href="#sm" x="198.5" y="192.5"/>
</g>
<g stroke="#ffff00">
<use href="#sp" x="165.5" y="209.5"/>
<use href="#sm" x="181.5" y="229.5"/>
</g>
<g stroke="#ffc800">
<use href="#scp" x="155.5" y="217.5"/>
</g>
<g stroke="#ffff00">
<use href="#scp" x="202.5" y="217.5"/>
</g>
<g stroke="#ffa000">
<use href="#scp" x="205.5" y="205.5"/>
</g>
<g stroke="#ffc800">
<use href="#scp" x="224.5" y="182.5"/>
</g>
<g stroke="#ffa000">
<use href="#scp" x="208.5" y="206.5"/>
</g>
<g stroke="#ffc800">
<use href="#scm" x="191.5" y="207.5"/>
<use href="#sm" x="189.5" y="236.5"/>
<use href="#scp" x="222.5" y="204.5"/>
<use href="#sp" x="186.5" y="205.5"/>
<use href="#sp" x="170.5" y="209.5"/>
<use href="#sp" x="219.5" y="183.5"/>
<use href="#scp" x="194.5" y="211.5"/>
</g>
<g stroke="#ffa000">
<use href="#scp" x="174.5" y="194.5"/>
</g>
<g stroke="#ffc800">
<use href="#scp" x="182.5" y="196.5"/>
<use href="#scp" x="165.5" y="219.5"/>
<use href="#scp" x="207.5" y="187.5"/>
<use href="#scp" x="142.5" y="236.5"/>
</g>
<g stroke="#ffa000">
<use href="#scm" x="218.5" y="192.5"/>
<use href="#scp" x="235.5" y="199.5"/>
</g>
<g stroke="#ffc800">
<use href="#scp" x="185.5" y="203.5"/>
</g>
<g stroke="#ffff00">
<use href="#sp" x="225.5" y="169.5"/>
</g>
<g stroke="#ffc800">
<use href="#scm" x="158.5" y="243.5"/>
<use href="#scp" x="161.5" y="219.5"/>
</g>
<g stroke="#ffa000">
<use href="#sm" x="225.5" y="185.5"/>
</g>
<g stroke="#ffc800">
<use href="#scp" x="221.5" y="175.5"/>
<use href="#scp" x="184.5" y="220.5"/>
<use href="#scp" x="170.5" y="227.5"/>
<use href="#scp" x="244.5" y="185.5"/>
<use href="#sp" x="192.5" y="204.5"/>
</g>
<g stroke="#ffff00">
<use href="#scp" x="159.5" y="228.5"/>
</g>
<g stroke="#ffa000">
<use href="#sp" x="184.5" y="219.5"/>
<use href="#sm" x="196.5" y="224.5"/>
<use href="#scp" x="212.5" y="194.5"/>
</g>
<g stroke="#ffff00">
<use href="#scp" x="154.5" y="231.5"/>
</g>
<g stroke="#ffa000">
<use href="#scp" x="165.5" y="200.5"/>
</g>
<g stroke="#ffff00">
<use href="#scp" x="181.5" y="212.5"/>
</g>
<g stroke="#ffc800">
<use href="#scp" x="212.5" y="220.5"/>
<use href="#scm" x="191.5" y="198.5"/>
<use href="#scp" x="199.5" y="195.5"/>
</g>
<g stroke="#ffa000">
<use href="#scm" x="166.5" y="233.5"/>
</g>
<g stroke="#ffff00">
<use href="#scp" x="144.5" y="235.5"/>
</g>
<g stroke="#ffa000">
<use href="#scm" x="229.5" y="181.5"/>
</g>
<g stroke="#ffff00">
<use href="#sm" x="176.5" y="217.5"/>
</g>
<g stroke="#ffc800">
<use href="#scm" x="227.5" y="164.5"/>
<use href="#sm" x="214.5" y="206.5"/>
</g>
<g stroke="#ffa000">
<use href="#sm" x="169.5" y="224.5"/>
<use href="#sp" x="155.5" y="207.5"/>
</g>
<g stroke="#ffff00">
<use href="#scp" x="199.5" y="212.5"/>
<use href="#scm" x="192.5" y="216.5"/>
</g>
<g stroke="#ffc800">
<use href="#sp" x="205.5" y="187.5"/>
<use href="#scp" x="160.5" y="227.5"/>
</g>
<g stroke="#ffa000">
<use href="#scp" x="210.5" y="178.5"/>
</g>
<g stroke="#ffc800">
<use href="#scm" x="192.5" y="200.5"/>
</g>
<g stroke="#ffff00">
<use href="#scp" x="192.5" y="208.5"/>
</g>
<g stroke="#ffa000">
<use href="#sp" x="229.5" y="189.5"/>
</g>
<g stroke="#ffc800">
<use href="#sp" x="205.5" y="187.5"/>
<use href="#scp" x="190.5" y="212.5"/>
</g>
<g stroke="#ffa000">
<use href="#scp" x="183.5" y="210.5"/>
</g>
<g stroke="#ffc800">
<use href="#scp" x="178.5" y="224.5"/>
</g>
<g stroke="#ffff00">
<use href="#scm" x="174.5" y="242.5"/>
</g>
<g stroke="#ffc800">
<use href="#scp" x="161.5" y="221.5"/>
<use href="#scm" x="166.5" y="213.5"/>
<use href="#scp" x="195.5" y="219.5"/>
<use href="#scm" x="213.5" y="191.5"/>
</g>
<g stroke="#ffff00">
<use href="#sp" x="186.5" y="207.5"/>
<use href="#sm" x="216.5" y="206.5"/>
</g>
<g stroke="#ffc800">
<use href="#scp" x="217.5" y="179.5"/>
</g>
<g stroke="#ffff00">
<use href="#sp" x="200.5" y="202.5"/>
</g>
<g stroke="#ffc800">
<use href="#sp" x="177.5" y="232.5"/>
</g>
<g stroke="#ffa000">
<use href="#sm" x="161.5" y="235.5"/>
</g>
<g stroke="#ffc800">
<use href="#scp" x="213.5" y="188.5"/>
<use href="#sm" x="225.5" y="176.5"/>
<use href="#sm" x="175.5" y="225.5"/>
<use href="#scp" x="208.5" y="215.5"/>
</g>
<g stroke="#ffff00">
<use href="#scp" x="188.5" y="197.5"/>
</g>
<g stroke="#ffc800">
<use href="#sm" x="210.5" y="188.5"/>
<use href="#scp" x="196.5" y="199.5"/>
<use href="#sp" x="193.5" y="224.5"/>
<use href="#scp" x="213.5" y="187.5"/>
<use href="#sp" x="225.5" y="179.5"/>
<use href="#sm" x="153.5" y="226.5"/>
</g>
<g stroke="#ffff00">
<use href="#scm" x="202.5" y="213.5"/>
</g>
<g stroke="#ffa000">
<use href="#scp" x="167.5" y="235.5"/>
</g>
<g stroke="#ffff00">
<use href="#sp" x="165.5" y="244.5"/>
</g>
<g stroke="#ffc800">
<use href="#scm" x="173.5" y="243.5"/>
</g>
<g stroke="#ffa000">
<use href="#scm" x="225.5" y="171.5"/>
<use href="#scm" x="194.5" y="209.5"/>
</g>
<g stroke="#ffc800">
<use href="#sp" x="149.5" y="232.5"/>
</g>
<g stroke="#ffff00">
<use href="#scp" x="164.5" y="233.5"/>
<use href="#scp" x="180.5" y="227.5"/>
</g>
<g stroke="#ffc800">
<use href="#scp" x="176.5" y="224.5"/>
</g>
<g stroke="#ffa000">
<use href="#scm" x="204.5" y="194.5"/>
</g>
<g stroke="#ffc800">
<use href="#scp" x="213.5" y="187.5"/>
</g>
<g stroke="#ffff00">
<use href="#sp" x="246.5" y="180.5"/>
</g>
<g stroke="#ffa000">
<use href="#sm" x="162.5" y="225.5"/>
</g>
<g stroke="#ffc800">
<use href="#sm" x="149.5" y="212.5"/>
</g>
<g stroke="#ffff00">
<use href="#scp" x="148.5" y="231.5"/>
</g>
<g stroke="#ffc800">
<use href="#scm" x="209.5" y="180.5"/>
<use href="#sm" x="208.5" y="189.5"/>
</g>
<g stroke="#ffff00">
<use href="#sm" x="206.5" y="181.5"/>
</g>
<g stroke="#ffc800">
<use href="#scp" x="223.5" y="191.5"/>
</g>
<g stroke="#ffff00">
<use href="#scm" x="202.5" y="213.5"/>
<use href="#scm" x="154.5" y="236.5"/>
</g>
<g stroke="#ffc800">
<use href="#scm" x="170.5" y="202.5"/>
<use href="#scp" x="183.5" y="225.5"/>
</g>
<g stroke="#ffff00">
<use href="#sp" x="209.5" y="184.5"/>
</g>
<g stroke="#ffa000">
<use href="#scp" x="228.5" y="180.5"/>
</g>
<g stroke="#ffc800">
<use href="#scp" x="236.5" y="184.5"/>
</g>
<g stroke="#ffff00">
<use href="#scp" x="185.5" y="222.5"/>
</g>
<g stroke="#ffc800">
<use href="#scp" x="194.5" y="187.5"/>
<use href="#scp" x="208.5" y="193.5"/>
</g>
<g stroke="#ffff00">
<use href="#scp" x="156.5" y="226.5"/>
</g>
<g stroke="#ffc800">
<use href="#scp" x="229.5" y="209.5"/>
<use href="#scp" x="201.5" y="201.5"/>
</g>
<g stroke="#ffa000">
<use href="#scp" x="232.5" y="206.5"/>
</g>
<g stroke="#ffff00">
<use href="#scp" x="219.5" y="189.5"/>
</g>
<g stroke="#ffa000">
<use href="#scp" x="211.5" y="184.5"/>
</g>
<g stroke="#ffff00">
<use href="#scp" x="236.5" y="188.5"/>
<use href="#sp" x="162.5" y="245.5"/>
</g>
<g stroke="#ffa000">
<use href="#scp" x="200.5" y="195.5"/>
</g>
<g stroke="#ffff00">
<use href="#scp" x="206.5" y="180.5"/>
</g>
<g stroke="#ffa000">
<use href="#scp" x="206.5" y="176.5"/>
</g>
<g stroke="#ffee00">
<use href="#scp" x="265.5" y="141.5"/>
</g>
<g stroke="#ffff00">
<use href="#scp" x="260.5" y="123.5"/>
<use href="#scp" x="272.5" y="141.5"/>
<use href="#scp" x="288.5" y="146.5"/>
</g>
<g stroke="#ffc800">
<use href="#scp" x="280.5" y="149.5"/>
</g>
<g stroke="#ffff00">
<use href="#sm" x="217.5" y="141.5"/>
</g>
<g stroke="#ffee00">
<use href="#scp" x="245.5" y="145.5"/>
</g>
<g stroke="#ffff00">
<use href="#scp" x="279.5" y="129.5"/>
<use href="#sm" x="238.5" y="179.5"/>
</g>
<g stroke="#ffee00">
<use href="#scp" x="259.5" y="152.5"/>
</g>
<g stroke="#ffff00">
<use href="#scp" x="259.5" y="128.5"/>
<use href="#scp" x="250.5" y="142.5"/>
</g>
<g stroke="#ffc800">
<use href="#sm" x="223.5" y="138.5"/>
</g>
<g stroke="#ffff00">
<use href="#sm" x="245.5" y="146.5"/>
</g>
<g stroke="#ffc800">
<use href="#scm" x="276.5" y="150.5"/>
</g>
<g stroke="#ffff00">
<use href="#scp" x="271.5" y="152.5"/>
</g>
<g stroke="#ffc800">
<use href="#scm" x="253.5" y="157.5"/>
</g>
<g stroke="#ffee00">
<use href="#scp" x="269.5" y="137.5"/>
</g>
<g stroke="#ffff00">
<use href="#sm" x="252.5" y="132.5"/>
<use href="#scp" x="262.5" y="134.5"/>
<use href="#scp" x="242.5" y="145.5"/>
<use href="#scm" x="262.5" y="159.5"/>
<use href="#sm" x="277.5" y="129.5"/>
</g>
<g stroke="#ffc800">
<use href="#scp" x="261.5" y="133.5"/>
</g>
<g stroke="#ffee00">
<use href="#scp" x="281.5" y="156.5"/>
</g>
<g stroke="#ffff00">
<use href="#scp" x="219.5" y="149.5"/>
<use href="#scp" x="240.5" y="145.5"/>
<use href="#scp" x="243.5" y="135.5"/>
</g>
<g stroke="#ffee00">
<use href="#scp" x="292.5" y="132.5"/>
<use href="#scp" x="278.5" y="154.5"/>
</g>
<g stroke="#ffff00">
<use href="#scp" x="230.5" y="166.5"/>
<use href="#scp" x="265.5" y="135.5"/>
<use href="#scm" x="239.5" y="139.5"/>
</g>
<g stroke="#ffee00">
<use href="#scm" x="272.5" y="162.5"/>
</g>
<g stroke="#ffff00">
<use href="#scm" x="256.5" y="138.5"/>
<use href="#scp" x="252.5" y="163.5"/>
</g>
<g stroke="#ffc800">
<use href="#scp" x="224.5" y="137.5"/>
</g>
<g stroke="#ffee00">
<use href="#sm" x="262.5" y="138.5"/>
</g>
<g stroke="#ffc800">
<use href="#sm" x="260.5" y="148.5"/>
</g>
<g stroke="#ffff00">
<use href="#scp" x="213.5" y="146.5"/>
<use href="#scp" x="255.5" y="129.5"/>
<use href="#scp" x="256.5" y="124.5"/>
</g>
<g stroke="#ffc800">
<use href="#scp" x="223.5" y="166.5"/>
<use href="#scp" x="223.5" y="178.5"/>
</g>
<g stroke="#ffff00">
<use href="#scp" x="264.5" y="166.5"/>
</g>
<g stroke="#ffee00">
<use href="#scp" x="240.5" y="150.5"/>
</g>
<g stroke="#ffff00">
<use href="#sm" x="285.5" y="144.5"/>
<use href="#scp" x="257.5" y="142.5"/>
</g>
<g stroke="#ffee00">
<use href="#scp" x="247.5" y="174.5"/>
<use href="#scp" x="261.5" y="131.5"/>
</g>
<g stroke="#ffff00">
<use href="#scm" x="282.5" y="127.5"/>
<use href="#sm" x="258.5" y="119.5"/>
<use href="#scp" x="231.5" y="170.5"/>
<use href="#scp" x="262.5" y="168.5"/>
</g>
<g stroke="#ffee00">
<use href="#scp" x="266.5" y="125.5"/>
</g>
<g stroke="#ffc800">
<use href="#scp" x="249.5" y="133.5"/>
</g>
<g stroke="#ffee00">
<use href="#scp" x="274.5" y="136.5"/>
</g>
<g stroke="#ffff00">
<use href="#sm" x="261.5" y="143.5"/>
</g>
<g stroke="#ffee00">
<use href="#sm" x="262.5" y="143.5"/>
</g>
<g stroke="#ffc800">
<use href="#sm" x="228.5" y="169.5"/>
</g>
<g stroke="#ffff00">
<use href="#scp" x="247.5" y="163.5"/>
</g>
<g stroke="#ffee00">
<use href="#scp" x="251.5" y="140.5"/>
</g>
<g stroke="#ffff00">
<use href="#scp" x="252.5" y="127.5"/>
<use href="#scp" x="291.5" y="146.5"/>
<use href="#sm" x="289.5" y="145.5"/>
<use href="#scp" x="262.5" y="138.5"/>
<use href="#scp" x="256.5" y="152.5"/>
<use href="#scp" x="218.5" y="156.5"/>
</g>
<g stroke="#ffee00">
<use href="#sm" x="277.5" y="121.5"/>
</g>
<g stroke="#ffff00">
<use href="#scp" x="253.5" y="127.5"/>
<use href="#sm" x="277.5" y="163.5"/>
<use href="#sm" x="293.5" y="120.5"/>
</g>
<g stroke="#ffc800">
<use href="#scp" x="239.5" y="152.5"/>
</g>
<g stroke="#ffff00">
<use href="#scp" x="275.5" y="123.5"/>
</g>
<g stroke="#ffee00">
<use href="#scm" x="286.5" y="124.5"/>
<use href="#scp" x="274.5" y="138.5"/>
</g>
<g stroke="#ffff00">
<use href="#scp" x="255.5" y="167.5"/>
<use href="#scp" x="238.5" y="129.5"/>
<use href="#scp" x="239.5" y="156.5"/>
<use href="#scp" x="269.5" y="132.5"/>
<use href="#scp" x="252.5" y="149.5"/>
</g>
<g stroke="#ffc800">
<use href="#scp" x="225.5" y="143.5"/>
<use href="#scp" x="242.5" y="163.5"/>
</g>
<g stroke="#ffff00">
<use href="#scp" x="241.5" y="157.5"/>
<use href="#sm" x="282.5" y="145.5"/>
<use href="#scm" x="225.5" y="133.5"/>
</g>
<g stroke="#ffc800">
<use href="#scm" x="266.5" y="135.5"/>
</g>
<g stroke="#ffff00">
<use href="#scp" x="246.5" y="171.5"/>
</g>
<g stroke="#ffc800">
<use href="#scp" x="225.5" y="156.5"/>
</g>
<g stroke="#ffff00">
<use href="#scp" x="251.5" y="134.5"/>
<use href="#scp" x="259.5" y="147.5"/>
<use href="#scp" x="209.5" y="173.5"/>
<use href="#scm" x="305.5" y="126.5"/>
<use href="#sm" x="278.5" y="143.5"/>
<use href="#scp" x="285.5" y="133.5"/>
</g>
<g stroke="#ffee00">
<use href="#scp" x="256.5" y="169.5"/>
</g>
<g stroke="#ffff00">
<use href="#scp" x="245.5" y="169.5"/>
<use href="#scp" x="213.5" y="162.5"/>
<use href="#scm" x="242.5" y="146.5"/>
</g>
<g stroke="#ffee00">
<use href="#sm" x="252.5" y="164.5"/>
</g>
<g stroke="#ffff00">
<use href="#sm" x="287.5" y="121.5"/>
<use href="#scp" x="257.5" y="125.5"/>
</g>
<g stroke="#ffee00">
<use href="#scp" x="288.5" y="113.5"/>
</g>
<g stroke="#ffc800">
<use href="#sm" x="239.5" y="144.5"/>
<use href="#sm" x="226.5" y="167.5"/>
<use href="#scp" x="292.5" y="117.5"/>
</g>
<g stroke="#ffff00">
<use href="#scp" x="239.5" y="139.5"/>
</g>
<g stroke="#ffee00">
<use href="#scm" x="279.5" y="109.5"/>
<use href="#scp" x="253.5" y="150.5"/>
</g>
<g stroke="#ffff00">
<use href="#sm" x="249.5" y="153.5"/>
</g>
<g stroke="#ffee00">
<use href="#scp" x="264.5" y="148.5"/>
</g>
<g stroke="#ffff00">
<use href="#scp" x="255.5" y="135.5"/>
<use href="#scp" x="235.5" y="161.5"/>
</g>
<g stroke="#ffc800">
<use href="#scp" x="221.5" y="152.5"/>
<use href="#sm" x="227.5" y="152.5"/>
</g>
<g stroke="#ffee00">
<use href="#scm" x="215.5" y="167.5"/>
</g>
<g stroke="#ffff00">
<use href="#scm" x="254.5" y="149.5"/>
<use href="#scp" x="288.5" y="135.5"/>
<use href="#scp" x="265.5" y="113.5"/>
<use href="#sm" x="266.5" y="124.5"/>
</g>
<g stroke="#ffc800">
<use href="#scp" x="222.5" y="162.5"/>
</g>
<g stroke="#ffff00">
<use href="#sm" x="253.5" y="120.5"/>
<use href="#scp" x="243.5" y="177.5"/>
</g>
<g stroke="#ffee00">
<use href="#scp" x="264.5" y="148.5"/>
</g>
<g stroke="#ffff00">
<use href="#scp" x="239.5" y="160.5"/>
</g>
<g stroke="#ffc800">
<use href="#sm" x="270.5" y="151.5"/>
</g>
<g stroke="#ffee00">
<use href="#scp" x="251.5" y="130.5"/>
<use href="#scp" x="240.5" y="168.5"/>
<use href="#scp" x="233.5" y="137.5"/>
</g>
<g stroke="#ffff00">
<use href="#sm" x="247.5" y="156.5"/>
</g>
<g stroke="#ffc800">
<use href="#scp" x="235.5" y="166.5"/>
</g>
<g stroke="#ffff00">
<use href="#scp" x="230.5" y="151.5"/>
<use href="#sm" x="283.5" y="141.5"/>
<use href="#sm" x="284.5" y="141.5"/>
<use href="#scp" x="247.5" y="145.5"/>
<use href="#scp" x="284.5" y="140.5"/>
</g>
<g stroke="#ffc800">
<use href="#scp" x="284.5" y="117.5"/>
<use href="#scp" x="242.5" y="135.5"/>
</g>
<g stroke="#ffee00">
<use href="#sm" x="267.5" y="130.5"/>
</g>
<g stroke="#ffc800">
<use href="#scp" x="254.5" y="178.5"/>
</g>
<g stroke="#ffff00">
<use href="#scp" x="268.5" y="149.5"/>
</g>
<g stroke="#ffee00">
<use href="#sm" x="250.5" y="120.5"/>
<use href="#scp" x="264.5" y="133.5"/>
</g>
<g stroke="#ffff00">
<use href="#scp" x="302.5" y="123.5"/>
<use href="#scp" x="246.5" y="178.5"/>
</g>
<g stroke="#ffc800">
<use href="#sm" x="248.5" y="161.5"/>
</g>
<g stroke="#ffff00">
<use href="#scp" x="248.5" y="154.5"/>
</g>
<g stroke="#ffee00">
<use href="#sm" x="205.5" y="157.5"/>
</g>
<g stroke="#ffff00">
<use href="#scp" x="284.5" y="152.5"/>
<use href="#scp" x="265.5" y="141.5"/>
<use href="#scp" x="264.5" y="144.5"/>
<use href="#scp" x="222.5" y="176.5"/>
</g>
<g stroke="#ffee00">
<use href="#scp" x="251.5" y="135.5"/>
</g>
<g stroke="#ffff00">
<use href="#sm" x="225.5" y="157.5"/>
<use href="#scp" x="243.5" y="151.5"/>
<use href="#scp" x="256.5" y="177.5"/>
</g>
<g stroke="#ffee00">
<use href="#scm" x="239.5" y="155.5"/>
</g>
<g stroke="#ffc800">
<use href="#scm" x="266.5" y="167.5"/>
</g>
<g stroke="#ffff00">
<use href="#sm" x="231.5" y="164.5"/>
</g>
<g stroke="#ffc800">
<use href="#scp" x="260.5" y="145.5"/>
</g>
<g stroke="#ffff00">
<use href="#scp" x="256.5" y="150.5"/>
</g>
<g stroke="#ffee00">
<use href="#scp" x="239.5" y="152.5"/>
</g>
<g stroke="#ffff00">
<use href="#scp" x="266.5" y="129.5"/>
</g>
<g stroke="#ffee00">
<use href="#scp" x="230.5" y="179.5"/>
</g>
<g stroke="#ffff00">
<use href="#sm" x="235.5" y="153.5"/>
<use href="#sm" x="291.5" y="131.5"/>
<use href="#sm" x="256.5" y="131.5"/>
<use href="#scp" x="228.5" y="137.5"/>
</g>
<g stroke="#ffee00">
<use href="#scp" x="285.5" y="124.5"/>
</g>
<g stroke="#ffff00">
<use href="#scm" x="227.5" y="146.5"/>
</g>
<g stroke="#ffee00">
<use href="#scp" x="231.5" y="156.5"/>
</g>
<g stroke="#ffc800">
<use href="#scp" x="265.5" y="154.5"/>
<use href="#scp" x="257.5" y="149.5"/>
</g>
<g stroke="#ffff00">
<use href="#scp" x="246.5" y="165.5"/>
</g>
<g stroke="#ffc800">
<use href="#scp" x="280.5" y="153.5"/>
<use href="#scp" x="287.5" y="147.5"/>
</g>
<g stroke="#ffee00">
<use href="#scp" x="276.5" y="112.5"/>
<use href="#scm" x="257.5" y="160.5"/>
</g>
<g stroke="#ffff00">
<use href="#scm" x="246.5" y="154.5"/>
</g>
<g stroke="#ffc800">
<use href="#sm" x="271.5" y="165.5"/>
</g>
<g stroke="#ffff00">
<use href="#scp" x="216.5" y="174.5"/>
<use href="#scp" x="298.5" y="138.5"/>
<use href="#scp" x="267.5" y="135.5"/>
</g>
<g stroke="#ffc800">
<use href="#scp" x="277.5" y="134.5"/>
<use href="#scp" x="266.5" y="164.5"/>
</g>
<g stroke="#ffff00">
<use href="#scp" x="258.5" y="143.5"/>
<use href="#scp" x="276.5" y="126.5"/>
</g>
<g stroke="#ffc800">
<use href="#scp" x="289.5" y="131.5"/>
</g>
<g stroke="#ffff00">
<use href="#scp" x="273.5" y="150.5"/>
<use href="#sm" x="241.5" y="150.5"/>
<use href="#sm" x="281.5" y="119.5"/>
</g>
<g stroke="#ffc800">
<use href="#sm" x="235.5" y="160.5"/>
</g>
<g stroke="#ffff00">
<use href="#scm" x="242.5" y="136.5"/>
<use href="#scp" x="249.5" y="139.5"/>
<use href="#scm" x="261.5" y="152.5"/>
<use href="#sm" x="287.5" y="127.5"/>
</g>
<g stroke="#ffc800">
<use href="#scp" x="222.5" y="171.5"/>
</g>
<g stroke="#ffee00">
<use href="#scp" x="250.5" y="116.5"/>
</g>
<g stroke="#ffff00">
<use href="#scp" x="236.5" y="176.5"/>
<use href="#scp" x="275.5" y="139.5"/>
</g>
<g stroke="#ffee00">
<use href="#scp" x="301.5" y="133.5"/>
</g>
<g stroke="#ffff00">
<use href="#sm" x="263.5" y="109.5"/>
</g>
<g stroke="#ffc800">
<use href="#scp" x="280.5" y="154.5"/>
</g>
<g stroke="#ffff00">
<use href="#sm" x="233.5" y="157.5"/>
</g>
<g stroke="#ffc800">
<use href="#scp" x="256.5" y="126.5"/>
</g>
<g stroke="#ffff00">
<use href="#scp" x="262.5" y="165.5"/>
</g>
<g stroke="#ffc800">
<use href="#scp" x="294.5" y="122.5"/>
</g>
<g stroke="#ffee00">
<use href="#scp" x="253.5" y="160.5"/>
</g>
<g stroke="#ffff00">
<use href="#scm" x="216.5" y="168.5"/>
</g>
<g stroke="#ffee00">
<use href="#scp" x="242.5" y="133.5"/>
</g>
<g stroke="#ffc800">
<use href="#sm" x="298.5" y="142.5"/>
</g>
<g stroke="#ffff00">
<use href="#scm" x="228.5" y="176.5"/>
</g>
<g stroke="#ffee00">
<use href="#scp" x="274.5" y="145.5"/>
</g>
<g stroke="#ffff00">
<use href="#scp" x="276.5" y="115.5"/>
<use href="#scp" x="220.5" y="158.5"/>
</g>
<g stroke="#ffee00">
<use href="#sm" x="241.5" y="139.5"/>
</g>
<g stroke="#ffff00">
<use href="#sm" x="252.5" y="126.5"/>
</g>
<g stroke="#ffee00">
<use href="#scp" x="242.5" y="133.5"/>
</g>
<g stroke="#ffff00">
<use href="#scp" x="303.5" y="124.5"/>
<use href="#scm" x="240.5" y="157.5"/>
<use href="#sm" x="241.5" y="146.5"/>
<use href="#scp" x="269.5" y="145.5"/>
<use href="#scp" x="238.5" y="157.5"/>
</g>
<g stroke="#ffee00">
<use href="#scp" x="246.5" y="144.5"/>
</g>
<g stroke="#ffff00">
<use href="#scp" x="226.5" y="144.5"/>
</g>
<g stroke="#ffc800">
<use href="#scp" x="282.5" y="146.5"/>
</g>
<g stroke="#ffee00">
<use href="#scm" x="230.5" y="148.5"/>
</g>
<g stroke="#ffff00">
<use href="#sm" x="277.5" y="129.5"/>
<use href="#scp" x="247.5" y="180.5"/>
</g>
<g stroke="#ffc800">
<use href="#scp" x="284.5" y="107.5"/>
</g>
<g stroke="#ffee00">
<use href="#sm" x="254.5" y="148.5"/>
</g>
<g stroke="#ffff00">
<use href="#scp" x="232.5" y="137.5"/>
<use href="#scm" x="259.5" y="131.5"/>
</g>
<g stroke="#ffc800">
<use href="#scm" x="297.5" y="126.5"/>
</g>
<g stroke="#ffff00">
<use href="#scm" x="216.5" y="157.5"/>
</g>
<g stroke="#ffc800">
<use href="#scp" x="232.5" y="164.5"/>
<use href="#sm" x="264.5" y="137.5"/>
</g>
<g stroke="#ffff00">
<use href="#scp" x="242.5" y="147.5"/>
</g>
<g stroke="#ffee00">
<use href="#sm" x="233.5" y="123.5"/>
</g>
<g stroke="#ffff00">
<use href="#scp" x="249.5" y="113.5"/>
<use href="#scp" x="222.5" y="149.5"/>
</g>
<g stroke="#ffee00">
<use href="#scp" x="249.5" y="168.5"/>
</g>
<g stroke="#ffff00">
<use href="#scp" x="271.5" y="126.5"/>
<use href="#scp" x="274.5" y="130.5"/>
<use href="#scp" x="273.5" y="144.5"/>
</g>
<g stroke="#ffee00">
<use href="#scp" x="247.5" y="148.5"/>
<use href="#scp" x="261.5" y="129.5"/>
</g>
<g stroke="#ffc800">
<use href="#scp" x="233.5" y="130.5"/>
</g>
<g stroke="#ffff00">
<use href="#sm" x="280.5" y="149.5"/>
<use href="#scm" x="260.5" y="138.5"/>
<use href="#scp" x="287.5" y="148.5"/>
<use href="#scp" x="225.5" y="148.5"/>
</g>
<g stroke="#ffc800">
<use href="#sm" x="242.5" y="130.5"/>
</g>
<g stroke="#ffee00">
<use href="#scp" x="264.5" y="143.5"/>
</g>
<g stroke="#ffff00">
<use href="#scp" x="242.5" y="157.5"/>
<use href="#sm" x="274.5" y="123.5"/>
<use href="#scp" x="270.5" y="141.5"/>
</g>
<g stroke="#ffc800">
<use href="#scm" x="251.5" y="119.5"/>
</g>
<g stroke="#ffff00">
<use href="#sm" x="232.5" y="148.5"/>
<use href="#sm" x="252.5" y="122.5"/>
</g>
<g stroke="#ffee00">
<use href="#sm" x="269.5" y="171.5"/>
</g>
<g stroke="#ffc800">
<use href="#scp" x="244.5" y="156.5"/>
</g>
<g stroke="#ffff00">
<use href="#scp" x="274.5" y="128.5"/>
</g>
<g stroke="#ffc800">
<use href="#scp" x="257.5" y="169.5"/>
</g>
<g stroke="#ffff00">
<use href="#sm" x="217.5" y="159.5"/>
</g>
<g stroke="#ffc800">
<use href="#scp" x="286.5" y="152.5"/>
</g>
<g stroke="#ffff00">
<use href="#scm" x="247.5" y="153.5"/>
<use href="#scp" x="273.5" y="116.5"/>
</g>
<g stroke="#ffc800">
<use href="#scp" x="252.5" y="125.5"/>
</g>
<g stroke="#ffff00">
<use href="#scp" x="289.5" y="140.5"/>
</g>
<g stroke="#ffee00">
<use href="#scp" x="267.5" y="119.5"/>
</g>
<g stroke="#ffc800">
<use href="#scp" x="279.5" y="150.5"/>
</g>
<g stroke="#ffff00">
<use href="#scp" x="270.5" y="138.5"/>
</g>
<g stroke="#ffc800">
<use href="#scp" x="261.5" y="145.5"/>
</g>
<g stroke="#ffff00">
<use href="#scp" x="236.5" y="166.5"/>
</g>
<g stroke="#ffc800">
<use href="#scp" x="249.5" y="116.5"/>
</g>
<g stroke="#ffff00">
<use href="#sm" x="223.5" y="155.5"/>
<use href="#sm" x="266.5" y="135.5"/>
<use href="#scp" x="206.5" y="165.5"/>
<use href="#scm" x="243.5" y="157.5"/>
<use href="#scm" x="272.5" y="146.5"/>
<use href="#scm" x="267.5" y="165.5"/>
<use href="#scp" x="287.5" y="129.5"/>
<use href="#scp" x="254.5" y="154.5"/>
<use href="#sm" x="233.5" y="169.5"/>
</g>
<g stroke="#ffc800">
<use href="#sm" x="292.5" y="114.5"/>
<use href="#sm" x="265.5" y="128.5"/>
</g>
<g stroke="#ffff00">
<use href="#sm" x="264.5" y="154.5"/>
</g>
<g stroke="#ffee00">
<use href="#scp" x="262.5" y="149.5"/>
</g>
<g stroke="#ffff00">
<use href="#scm" x="213.5" y="169.5"/>
</g>
<g stroke="#ffee00">
<use href="#sm" x="243.5" y="154.5"/>
</g>
<g stroke="#ffff00">
<use href="#sm" x="225.5" y="158.5"/>
</g>
<g stroke="#ffc800">
<use href="#scp" x="227.5" y="151.5"/>
</g>
<g stroke="#ffee00">
<use href="#scp" x="222.5" y="163.5"/>
</g>
<g stroke="#ffff00">
<use href="#sm" x="271.5" y="133.5"/>
<use href="#scp" x="242.5" y="148.5"/>
</g>
<g stroke="#ffc800">
<use href="#scm" x="304.5" y="121.5"/>
</g>
<g stroke="#ffff00">
<use href="#sm" x="276.5" y="119.5"/>
<use href="#scp" x="241.5" y="170.5"/>
<use href="#scp" x="261.5" y="157.5"/>
<use href="#scp" x="248.5" y="134.5"/>
</g>
<g stroke="#ffc800">
<use href="#scp" x="252.5" y="138.5"/>
</g>
<g stroke="#ffff00">
<use href="#sm" x="274.5" y="117.5"/>
<use href="#scp" x="245.5" y="167.5"/>
<use href="#scp" x="292.5" y="126.5"/>
<use href="#scm" x="263.5" y="136.5"/>
</g>
<g stroke="#ffee00">
<use href="#scp" x="254.5" y="135.5"/>
</g>
<g stroke="#ffff00">
<use href="#sm" x="248.5" y="153.5"/>
<use href="#scp" x="244.5" y="166.5"/>
<use href="#scp" x="269.5" y="144.5"/>
<use href="#sm" x="261.5" y="152.5"/>
<use href="#scp" x="228.5" y="163.5"/>
<use href="#scm" x="270.5" y="115.5"/>
<use href="#scp" x="256.5" y="144.5"/>
<use href="#scm" x="253.5" y="142.5"/>
</g>
<g stroke="#ffee00">
<use href="#scp" x="234.5" y="156.5"/>
</g>
<g stroke="#ffff00">
<use href="#sm" x="287.5" y="117.5"/>
</g>
<g stroke="#ffc800">
<use href="#scp" x="285.5" y="118.5"/>
</g>
<g stroke="#ffee00">
<use href="#scp" x="267.5" y="145.5"/>
</g>
<g stroke="#ffff00">
<use href="#sm" x="236.5" y="140.5"/>
</g>
<g stroke="#ffee00">
<use href="#scp" x="250.5" y="140.5"/>
</g>
<g stroke="#ffff00">
<use href="#scp" x="278.5" y="111.5"/>
</g>
<g stroke="#ffc800">
<use href="#sm" x="258.5" y="131.5"/>
</g>
<g stroke="#ffff00">
<use href="#scp" x="248.5" y="151.5"/>
<use href="#scp" x="272.5" y="163.5"/>
<use href="#scp" x="280.5" y="130.5"/>
<use href="#scp" x="300.5" y="126.5"/>
</g>
<g stroke="#ffc800">
<use href="#scp" x="213.5" y="152.5"/>
<use href="#sm" x="253.5" y="159.5"/>
<use href="#sm" x="243.5" y="153.5"/>
</g>
<g stroke="#ffff00">
<use href="#scp" x="265.5" y="148.5"/>
<use href="#sm" x="223.5" y="163.5"/>
</g>
<g stroke="#ffee00">
<use href="#scp" x="251.5" y="145.5"/>
</g>
<g stroke="#ffc800">
<use href="#scp" x="245.5" y="146.5"/>
</g>
<g stroke="#ffff00">
<use href="#scp" x="253.5" y="126.5"/>
</g>
<g stroke="#ffee00">
<use href="#sm" x="253.5" y="133.5"/>
</g>
<g stroke="#ffff00">
<use href="#scm" x="241.5" y="149.5"/>
<use href="#scp" x="261.5" y="147.5"/>
<use href="#scp" x="247.5" y="130.5"/>
<use href="#scp" x="257.5" y="141.5"/>
</g>
<g stroke="#ffc800">
<use href="#scp" x="275.5" y="141.5"/>
</g>
<g stroke="#ffff00">
<use href="#scm" x="285.5" y="121.5"/>
<use href="#sm" x="236.5" y="164.5"/>
</g>
<g stroke="#ffee00">
<use href="#scp" x="232.5" y="172.5"/>
<use href="#sm" x="265.5" y="143.5"/>
</g>
<g stroke="#ffc800">
<use href="#scm" x="224.5" y="132.5"/>
</g>
<g stroke="#ffff00">
<use href="#scm" x="291.5" y="151.5"/>
<use href="#scp" x="250.5" y="159.5"/>
</g>
<g stroke="#ffc800">
<use href="#scp" x="263.5" y="147.5"/>
</g>
<g stroke="#ffee00">
<use href="#scm" x="278.5" y="138.5"/>
</g>
<g stroke="#ffff00">
<use href="#sm" x="230.5" y="148.5"/>
<use href="#scp" x="264.5" y="151.5"/>
<use href="#scp" x="245.5" y="121.5"/>
<use href="#scp" x="246.5" y="130.5"/>
</g>
<g stroke="#ffee00">
<use href="#scp" x="289.5" y="110.5"/>
</g>
<g stroke="#ffff00">
<use href="#scp" x="230.5" y="128.5"/>
<use href="#sm" x="252.5" y="143.5"/>
</g>
<g stroke="#ffc800">
<use href="#scm" x="268.5" y="154.5"/>
</g>
<g stroke="#ffee00">
<use href="#scp" x="237.5" y="144.5"/>
</g>
<g stroke="#ffff00">
<use href="#scp" x="286.5" y="134.5"/>
</g>
<g stroke="#ffee00">
<use href="#sm" x="250.5" y="144.5"/>
</g>
<g stroke="#ffff00">
<use href="#scm" x="288.5" y="121.5"/>
</g>
<g stroke="#ffee00">
<use href="#scm" x="260.5" y="150.5"/>
</g>
<g stroke="#ffff00">
<use href="#sm" x="285.5" y="130.5"/>
<use href="#scm" x="276.5" y="152.5"/>
<use href="#sm" x="231.5" y="132.5"/>
<use href="#scm" x="254.5" y="132.5"/>
<use href="#scp" x="283.5" y="139.5"/>
<use href="#scp" x="255.5" y="158.5"/>
<use href="#sm" x="269.5" y="107.5"/>
</g>
<g stroke="#ffee00">
<use href="#scp" x="250.5" y="145.5"/>
</g>
<g stroke="#ffc800">
<use href="#scp" x="247.5" y="169.5"/>
</g>
<g stroke="#ffff00">
<use href="#scp" x="237.5" y="164.5"/>
<use href="#sm" x="275.5" y="127.5"/>
</g>
<g stroke="#ffc800">
<use href="#sm" x="259.5" y="167.5"/>
</g>
<g stroke="#ffff00">
<use href="#sm" x="257.5" y="141.5"/>
<use href="#scm" x="260.5" y="141.5"/>
<use href="#scp" x="276.5" y="157.5"/>
<use href="#scp" x="214.5" y="176.5"/>
<use href="#scm" x="274.5" y="142.5"/>
</g>
<g stroke="#ffc800">
<use href="#sm" x="244.5" y="156.5"/>
</g>
<g stroke="#ffff00">
<use href="#scp" x="279.5" y="147.5"/>
</g>
<g stroke="#ffc800">
<use href="#sm" x="268.5" y="125.5"/>
</g>
<g stroke="#ffff00">
<use href="#scm" x="240.5" y="159.5"/>
<use href="#scp" x="296.5" y="142.5"/>
<use href="#scp" x="280.5" y="134.5"/>
<use href="#sm" x="299.5" y="133.5"/>
</g>
<g stroke="#ffc800">
<use href="#scp" x="295.5" y="139.5"/>
</g>
<g stroke="#ffff00">
<use href="#scp" x="297.5" y="139.5"/>
</g>
<g stroke="#ffee00">
<use href="#scp" x="233.5" y="160.5"/>
</g>
<g stroke="#ffff00">
<use href="#scp" x="241.5" y="152.5"/>
<use href="#scp" x="260.5" y="159.5"/>
<use href="#scp" x="247.5" y="134.5"/>
<use href="#scp" x="280.5" y="115.5"/>
<use href="#scp" x="249.5" y="122.5"/>
</g>
<g stroke="#ffc800">
<use href="#scp" x="305.5" y="117.5"/>
</g>
<g stroke="#ffff00">
<use href="#sm" x="275.5" y="127.5"/>
</g>
<g stroke="#ffc800">
<use href="#scp" x="265.5" y="142.5"/>
<use href="#scp" x="231.5" y="166.5"/>
</g>
<g stroke="#ffff00">
<use href="#scp" x="251.5" y="134.5"/>
<use href="#scp" x="258.5" y="130.5"/>
</g>
<g stroke="#ffc800">
<use href="#sm" x="233.5" y="152.5"/>
<use href="#scp" x="231.5" y="165.5"/>
</g>
<g stroke="#ffee00">
<use href="#scm" x="252.5" y="147.5"/>
</g>
<g stroke="#ffff00">
<use href="#sm" x="238.5" y="171.5"/>
<use href="#scm" x="265.5" y="135.5"/>
<use href="#sm" x="254.5" y="155.5"/>
</g>
<g stroke="#ffee00">
<use href="#scp" x="259.5" y="124.5"/>
<use href="#scp" x="241.5" y="147.5"/>
</g>
<g stroke="#ffff00">
<use href="#scp" x="225.5" y="140.5"/>
<use href="#sm" x="270.5" y="169.5"/>
<use href="#scp" x="224.5" y="164.5"/>
</g>
<g stroke="#ffc800">
<use href="#scp" x="275.5" y="169.5"/>
</g>
<g stroke="#ffff00">
<use href="#scm" x="245.5" y="168.5"/>
<use href="#scp" x="273.5" y="140.5"/>
</g>
<g stroke="#ffc800">
<use href="#scp" x="245.5" y="152.5"/>
</g>
<g stroke="#ffff00">
<use href="#scm" x="278.5" y="128.5"/>
<use href="#sm" x="269.5" y="140.5"/>
<use href="#scp" x="240.5" y="166.5"/>
</g>
<g stroke="#ffee00">
<use href="#scp" x="258.5" y="135.5"/>
<use href="#scm" x="280.5" y="155.5"/>
</g>
<g stroke="#ffff00">
<use href="#scp" x="230.5" y="165.5"/>
<use href="#sm" x="251.5" y="133.5"/>
<use href="#scp" x="234.5" y="133.5"/>
</g>
<g stroke="#ffc800">
<use href="#scp" x="220.5" y="158.5"/>
</g>
<g stroke="#ffff00">
<use href="#scm" x="232.5" y="145.5"/>
<use href="#sm" x="230.5" y="170.5"/>
<use href="#scp" x="249.5" y="139.5"/>
<use href="#sm" x="237.5" y="132.5"/>
</g>
<g stroke="#ffee00">
<use href="#scm" x="290.5" y="152.5"/>
<use href="#scp" x="272.5" y="126.5"/>
</g>
<g stroke="#ffff00">
<use href="#scp" x="255.5" y="139.5"/>
<use href="#scp" x="240.5" y="164.5"/>
<use href="#scp" x="272.5" y="165.5"/>
</g>
<g stroke="#ffc800">
<use href="#scp" x="237.5" y="153.5"/>
</g>
<g stroke="#ffff00">
<use href="#scp" x="228.5" y="160.5"/>
</g>
<g stroke="#ffee00">
<use href="#scp" x="242.5" y="132.5"/>
<use href="#scp" x="244.5" y="172.5"/>
</g>
<g stroke="#ffff00">
<use href="#sm" x="247.5" y="120.5"/>
</g>
<g stroke="#ffee00">
<use href="#scp" x="245.5" y="126.5"/>
</g>
<g stroke="#ffff00">
<use href="#sm" x="242.5" y="117.5"/>
<use href="#scp" x="259.5" y="124.5"/>
<use href="#scm" x="214.5" y="167.5"/>
<use href="#scp" x="232.5" y="152.5"/>
</g>
<g stroke="#ffc800">
<use href="#scp" x="246.5" y="155.5"/>
</g>
<g stroke="#ffff00">
<use href="#scp" x="246.5" y="149.5"/>
</g>
<g stroke="#ffc800">
<use href="#scp" x="263.5" y="126.5"/>
</g>
<g stroke="#ffff00">
<use href="#scp" x="233.5" y="158.5"/>
<use href="#scm" x="252.5" y="147.5"/>
</g>
<g stroke="#ffc800">
<use href="#scp" x="267.5" y="155.5"/>
</g>
<g stroke="#ffff00">
<use href="#scp" x="269.5" y="123.5"/>
</g>
<g stroke="#ffc800">
<use href="#sm" x="254.5" y="154.5"/>
</g>
<g stroke="#ffee00">
<use href="#scp" x="218.5" y="168.5"/>
<use href="#scp" x="262.5" y="138.5"/>
</g>
<g stroke="#ffff00">
<use href="#scp" x="264.5" y="139.5"/>
</g>
<g stroke="#ffc800">
<use href="#scm" x="257.5" y="123.5"/>
</g>
<g stroke="#ffff00">
<use href="#scm" x="233.5" y="178.5"/>
</g>
<g stroke="#ffc800">
<use href="#scp" x="289.5" y="133.5"/>
</g>
<g stroke="#ffee00">
<use href="#scp" x="246.5" y="137.5"/>
<use href="#scp" x="265.5" y="166.5"/>
</g>
<g stroke="#ffff00">
<use href="#scp" x="243.5" y="157.5"/>
</g>
<g stroke="#ffee00">
<use href="#scm" x="220.5" y="149.5"/>
</g>
<g stroke="#ffff00">
<use href="#sm" x="252.5" y="145.5"/>
<use href="#scp" x="268.5" y="144.5"/>
<use href="#scp" x="278.5" y="145.5"/>
</g>
<g stroke="#ffc800">
<use href="#scp" x="245.5" y="126.5"/>
<use href="#scm" x="293.5" y="119.5"/>
</g>
<g stroke="#ffff00">
<use href="#scm" x="266.5" y="130.5"/>
<use href="#scp" x="285.5" y="120.5"/>
<use href="#scp" x="251.5" y="140.5"/>
<use href="#scp" x="273.5" y="115.5"/>
</g>
<g stroke="#ffee00">
<use href="#sm" x="230.5" y="149.5"/>
</g>
<g stroke="#ffff00">
<use href="#scm" x="258.5" y="160.5"/>
<use href="#scp" x="289.5" y="127.5"/>
<use href="#sm" x="258.5" y="152.5"/>
</g>
<g stroke="#ffc800">
<use href="#sm" x="292.5" y="140.5"/>
</g>
<g stroke="#ffff00">
<use href="#scp" x="287.5" y="145.5"/>
</g>
<g stroke="#ffc800">
<use href="#sm" x="245.5" y="133.5"/>
</g>
<g stroke="#ffee00">
<use href="#scm" x="281.5" y="154.5"/>
</g>
<g stroke="#ffc800">
<use href="#scp" x="230.5" y="167.5"/>
</g>
<g stroke="#ffff00">
<use href="#sm" x="228.5" y="140.5"/>
<use href="#scm" x="239.5" y="174.5"/>
</g>
<g stroke="#ffee00">
<use href="#scm" x="236.5" y="142.5"/>
</g>
<g stroke="#ffc800">
<use href="#scp" x="242.5" y="132.5"/>
<use href="#scp" x="208.5" y="165.5"/>
</g>
<g stroke="#ffff00">
<use href="#scp" x="306.5" y="128.5"/>
<use href="#scm" x="287.5" y="135.5"/>
<use href="#sm" x="239.5" y="148.5"/>
</g>
<g stroke="#ffee00">
<use href="#sm" x="265.5" y="146.5"/>
</g>
<g stroke="#ffff00">
<use href="#scp" x="271.5" y="120.5"/>
<use href="#scm" x="297.5" y="137.5"/>
<use href="#scp" x="225.5" y="180.5"/>
<use href="#scm" x="218.5" y="172.5"/>
</g>
<g stroke="#ffc800">
<use href="#sm" x="255.5" y="149.5"/>
<use href="#scp" x="272.5" y="170.5"/>
</g>
<g stroke="#ffff00">
<use href="#sm" x="256.5" y="146.5"/>
</g>
<g stroke="#ffc800">
<use href="#scp" x="278.5" y="111.5"/>
</g>
<g stroke="#ffee00">
<use href="#scp" x="255.5" y="148.5"/>
</g>
<g stroke="#ffff00">
<use href="#scp" x="258.5" y="136.5"/>
<use href="#sm" x="241.5" y="154.5"/>
</g>
<g stroke="#ffc800">
<use href="#scm" x="257.5" y="125.5"/>
</g>
<g stroke="#ffee00">
<use href="#scp" x="277.5" y="135.5"/>
<use href="#scm" x="230.5" y="151.5"/>
</g>
<g stroke="#ffff00">
<use href="#scp" x="279.5" y="147.5"/>
</g>
<g stroke="#ffc800">
<use href="#scp" x="280.5" y="115.5"/>
</g>
<g stroke="#ffee00">
<use href="#scp" x="251.5" y="139.5"/>
</g>
<g stroke="#ffff00">
<use href="#scp" x="277.5" y="142.5"/>
</g>
<g stroke="#ffc800">
<use href="#sm" x="252.5" y="165.5"/>
<use href="#scp" x="246.5" y="168.5"/>
</g>
<g stroke="#ffff00">
<use href="#scp" x="262.5" y="118.5"/>
<use href="#scp" x="253.5" y="159.5"/>
</g>
<g stroke="#ffee00">
<use href="#scp" x="293.5" y="111.5"/>
</g>
<g stroke="#ffff00">
<use href="#scp" x="236.5" y="156.5"/>
<use href="#scp" x="253.5" y="128.5"/>
<use href="#scp" x="270.5" y="133.5"/>
<use href="#sm" x="255.5" y="135.5"/>
<use href="#scp" x="228.5" y="133.5"/>
<use href="#scp" x="244.5" y="148.5"/>
</g>
<g stroke="#ffee00">
<use href="#scp" x="215.5" y="175.5"/>
</g>
<g stroke="#ffff00">
<use href="#scp" x="272.5" y="144.5"/>
</g>
<g stroke="#ffc800">
<use href="#scp" x="262.5" y="124.5"/>
</g>
<g stroke="#ffff00">
<use href="#scm" x="280.5" y="122.5"/>
<use href="#scp" x="228.5" y="157.5"/>
</g>
<g stroke="#ffee00">
<use href="#scp" x="287.5" y="110.5"/>
</g>
<g stroke="#ffff00">
<use href="#sm" x="274.5" y="135.5"/>
<use href="#sm" x="255.5" y="154.5"/>
<use href="#scp" x="224.5" y="168.5"/>
<use href="#scp" x="257.5" y="154.5"/>
<use href="#scp" x="284.5" y="136.5"/>
<use href="#sm" x="262.5" y="139.5"/>
<use href="#scp" x="271.5" y="132.5"/>
</g>
<g stroke="#ffc800">
<use href="#sm" x="299.5" y="133.5"/>
</g>
<g stroke="#ffff00">
<use href="#scp" x="263.5" y="129.5"/>
</g>
<g stroke="#ffee00">
<use href="#scp" x="237.5" y="145.5"/>
</g>
<g stroke="#ffff00">
<use href="#sm" x="264.5" y="145.5"/>
<use href="#scp" x="270.5" y="141.5"/>
</g>
<g stroke="#ffc800">
<use href="#sm" x="241.5" y="148.5"/>
</g>
<g stroke="#ffff00">
<use href="#scp" x="276.5" y="140.5"/>
<use href="#sm" x="262.5" y="136.5"/>
<use href="#scm" x="269.5" y="128.5"/>
</g>
<g stroke="#ffee00">
<use href="#scp" x="289.5" y="122.5"/>
</g>
<g stroke="#ffc800">
<use href="#scm" x="265.5" y="140.5"/>
</g>
<g stroke="#ffff00">
<use href="#scp" x="273.5" y="159.5"/>
<use href="#scp" x="249.5" y="126.5"/>
</g>
<g stroke="#ffc800">
<use href="#scp" x="297.5" y="119.5"/>
</g>
<g stroke="#ffee00">
<use href="#scp" x="224.5" y="157.5"/>
<use href="#scp" x="250.5" y="175.5"/>
</g>
<g stroke="#ffff00">
<use href="#scp" x="255.5" y="138.5"/>
</g>
<g stroke="#ffee00">
<use href="#scp" x="233.5" y="166.5"/>
</g>
<g stroke="#ffc800">
<use href="#scm" x="265.5" y="134.5"/>
</g>
<g stroke="#ffff00">
<use href="#scp" x="232.5" y="148.5"/>
<use href="#scm" x="274.5" y="148.5"/>
<use href="#scp" x="278.5" y="126.5"/>
<use href="#scp" x="234.5" y="163.5"/>
</g>
<g stroke="#ffee00">
<use href="#scp" x="218.5" y="162.5"/>
<use href="#scm" x="275.5" y="131.5"/>
</g>
<g stroke="#ffc800">
<use href="#scp" x="306.5" y="128.5"/>
</g>
<g stroke="#ffff00">
<use href="#scp" x="257.5" y="132.5"/>
</g>
<g stroke="#ffc800">
<use href="#scp" x="281.5" y="145.5"/>
</g>
<g stroke="#ffff00">
<use href="#scm" x="248.5" y="137.5"/>
<use href="#scp" x="245.5" y="124.5"/>
<use href="#scm" x="258.5" y="157.5"/>
<use href="#sm" x="271.5" y="146.5"/>
<use href="#sm" x="276.5" y="133.5"/>
<use href="#sm" x="281.5" y="117.5"/>
<use href="#scm" x="226.5" y="160.5"/>
<use href="#scm" x="260.5" y="127.5"/>
</g>
<g stroke="#ffc800">
<use href="#scm" x="237.5" y="172.5"/>
</g>
<g stroke="#ffff00">
<use href="#scm" x="234.5" y="140.5"/>
<use href="#scm" x="268.5" y="151.5"/>
</g>
<g stroke="#ffee00">
<use href="#scp" x="249.5" y="136.5"/>
</g>
<g stroke="#ffff00">
<use href="#scm" x="270.5" y="157.5"/>
<use href="#sm" x="223.5" y="162.5"/>
<use href="#scm" x="237.5" y="153.5"/>
<use href="#sm" x="221.5" y="135.5"/>
<use href="#scp" x="243.5" y="167.5"/>
<use href="#sm" x="291.5" y="125.5"/>
</g>
<g stroke="#ffee00">
<use href="#scp" x="238.5" y="160.5"/>
</g>
<g stroke="#ffff00">
<use href="#scp" x="230.5" y="153.5"/>
<use href="#scp" x="232.5" y="169.5"/>
</g>
<g stroke="#ffee00">
<use href="#scp" x="223.5" y="141.5"/>
</g>
<g stroke="#ffff00">
<use href="#sm" x="215.5" y="172.5"/>
</g>
<g stroke="#ffee00">
<use href="#sm" x="273.5" y="143.5"/>
</g>
<g stroke="#ffff00">
<use href="#scp" x="225.5" y="159.5"/>
</g>
<g stroke="#ffc800">
<use href="#scp" x="266.5" y="166.5"/>
</g>
<g stroke="#ffee00">
<use href="#scm" x="302.5" y="133.5"/>
<use href="#scp" x="237.5" y="166.5"/>
<use href="#scm" x="260.5" y="142.5"/>
</g>
<g stroke="#ffc800">
<use href="#scp" x="293.5" y="139.5"/>
<use href="#sm" x="280.5" y="155.5"/>
</g>
<g stroke="#ffff00">
<use href="#scp" x="288.5" y="148.5"/>
<use href="#scm" x="238.5" y="139.5"/>
</g>
<g stroke="#ffee00">
<use href="#scp" x="278.5" y="122.5"/>
<use href="#scp" x="263.5" y="139.5"/>
</g>
<g stroke="#ffff00">
<use href="#sm" x="300.5" y="112.5"/>
</g>
<g stroke="#ffc800">
<use href="#scp" x="251.5" y="132.5"/>
<use href="#sm" x="220.5" y="152.5"/>
</g>
<g stroke="#ffff00">
<use href="#scp" x="238.5" y="152.5"/>
<use href="#scm" x="252.5" y="164.5"/>
<use href="#scm" x="260.5" y="147.5"/>
<use href="#scp" x="211.5" y="156.5"/>
<use href="#scp" x="267.5" y="149.5"/>
<use href="#sm" x="228.5" y="130.5"/>
<use href="#scp" x="226.5" y="176.5"/>
</g>
<g stroke="#ffee00">
<use href="#sm" x="267.5" y="142.5"/>
<use href="#scp" x="264.5" y="141.5"/>
</g>
<g stroke="#ffff00">
<use href="#scm" x="242.5" y="136.5"/>
<use href="#scp" x="216.5" y="173.5"/>
<use href="#scp" x="247.5" y="168.5"/>
</g>
<g stroke="#ffee00">
<use href="#scp" x="244.5" y="138.5"/>
</g>
<g stroke="#ffff00">
<use href="#sm" x="268.5" y="151.5"/>
</g>
<g stroke="#ffee00">
<use href="#scp" x="233.5" y="158.5"/>
<use href="#scp" x="225.5" y="149.5"/>
<use href="#scp" x="236.5" y="122.5"/>
</g>
<g stroke="#ffc800">
<use href="#scp" x="267.5" y="157.5"/>
<use href="#scm" x="232.5" y="171.5"/>
</g>
<g stroke="#ffff00">
<use href="#scp" x="249.5" y="115.5"/>
</g>
<g stroke="#ffee00">
<use href="#scm" x="230.5" y="160.5"/>
</g>
<g stroke="#ffff00">
<use href="#scp" x="242.5" y="144.5"/>
<use href="#scm" x="240.5" y="133.5"/>
<use href="#scp" x="283.5" y="133.5"/>
<use href="#sm" x="287.5" y="138.5"/>
<use href="#sm" x="248.5" y="147.5"/>
<use href="#scp" x="255.5" y="125.5"/>
</g>
<g stroke="#ffee00">
<use href="#sm" x="247.5" y="159.5"/>
</g>
<g stroke="#ffff00">
<use href="#scm" x="237.5" y="155.5"/>
</g>
<g stroke="#ffc800">
<use href="#scp" x="289.5" y="119.5"/>
<use href="#scm" x="266.5" y="137.5"/>
</g>
<g stroke="#ffff00">
<use href="#scm" x="276.5" y="134.5"/>
<use href="#sm" x="244.5" y="116.5"/>
</g>
<g stroke="#ffc800">
<use href="#scp" x="276.5" y="152.5"/>
</g>
<g stroke="#ffff00">
<use href="#scp" x="240.5" y="155.5"/>
<use href="#scp" x="236.5" y="151.5"/>
</g>
<g stroke="#ffee00">
<use href="#scp" x="241.5" y="146.5"/>
</g>
<g stroke="#ffff00">
<use href="#scm" x="260.5" y="113.5"/>
<use href="#scp" x="258.5" y="159.5"/>
</g>
<g stroke="#ffc800">
<use href="#scm" x="224.5" y="142.5"/>
</g>
<g stroke="#ffee00">
<use href="#scp" x="280.5" y="118.5"/>
</g>
<g stroke="#ffc800">
<use href="#scp" x="249.5" y="130.5"/>
</g>
<g stroke="#ffff00">
<use href="#scp" x="251.5" y="142.5"/>
<use href="#sm" x="237.5" y="144.5"/>
<use href="#scp" x="242.5" y="165.5"/>
<use href="#scp" x="270.5" y="160.5"/>
<use href="#scp" x="282.5" y="126.5"/>
<use href="#sm" x="280.5" y="144.5"/>
<use href="#scp" x="285.5" y="124.5"/>
</g>
<g stroke="#ffee00">
<use href="#scp" x="253.5" y="129.5"/>
</g>
<g stroke="#ffff00">
<use href="#scp" x="222.5" y="135.5"/>
<use href="#scp" x="262.5" y="152.5"/>
</g>
<g stroke="#ffc800">
<use href="#sm" x="253.5" y="162.5"/>
<use href="#scp" x="271.5" y="148.5"/>
</g>
<g stroke="#ffff00">
<use href="#scm" x="247.5" y="123.5"/>
</g>
<g stroke="#ffc800">
<use href="#scp" x="260.5" y="158.5"/>
</g>
<g stroke="#ffee00">
<use href="#scp" x="228.5" y="149.5"/>
</g>
<g stroke="#ffc800">
<use href="#scp" x="246.5" y="145.5"/>
</g>
<g stroke="#ffff00">
<use href="#scp" x="210.5" y="171.5"/>
</g>
<g stroke="#ffc800">
<use href="#scp" x="248.5" y="162.5"/>
</g>
<g stroke="#ffff00">
<use href="#scm" x="240.5" y="141.5"/>
</g>
<g stroke="#ffee00">
<use href="#sm" x="255.5" y="139.5"/>
</g>
<g stroke="#ffff00">
<use href="#scp" x="275.5" y="146.5"/>
<use href="#scp" x="302.5" y="120.5"/>
<use href="#scm" x="270.5" y="153.5"/>
<use href="#scp" x="236.5" y="135.5"/>
<use href="#scp" x="237.5" y="162.5"/>
</g>
<g stroke="#ffee00">
<use href="#scp" x="247.5" y="133.5"/>
</g>
<g stroke="#ffff00">
<use href="#scp" x="253.5" y="143.5"/>
<use href="#scm" x="250.5" y="139.5"/>
<use href="#scp" x="271.5" y="132.5"/>
<use href="#scp" x="246.5" y="121.5"/>
<use href="#scm" x="265.5" y="154.5"/>
</g>
<g stroke="#ffee00">
<use href="#scp" x="279.5" y="132.5"/>
</g>
<g stroke="#ffff00">
<use href="#scp" x="270.5" y="114.5"/>
<use href="#scp" x="260.5" y="138.5"/>
<use href="#sm" x="274.5" y="138.5"/>
<use href="#scm" x="248.5" y="154.5"/>
</g>
<g stroke="#ffc800">
<use href="#sm" x="253.5" y="140.5"/>
</g>
<g stroke="#ffff00">
<use href="#scp" x="273.5" y="127.5"/>
<use href="#scp" x="284.5" y="133.5"/>
<use href="#scm" x="220.5" y="159.5"/>
<use href="#sm" x="226.5" y="149.5"/>
<use href="#scp" x="240.5" y="153.5"/>
</g>
<g stroke="#ffee00">
<use href="#scm" x="263.5" y="143.5"/>
<use href="#scp" x="292.5" y="109.5"/>
</g>
<g stroke="#ffff00">
<use href="#scp" x="247.5" y="146.5"/>
<use href="#scp" x="249.5" y="160.5"/>
<use href="#scp" x="278.5" y="144.5"/>
<use href="#sm" x="217.5" y="174.5"/>
</g>
<g stroke="#ffee00">
<use href="#scp" x="279.5" y="143.5"/>
</g>
<g stroke="#ffff00">
<use href="#scp" x="215.5" y="178.5"/>
</g>
<g stroke="#ffee00">
<use href="#scm" x="230.5" y="157.5"/>
</g>
<g stroke="#ffff00">
<use href="#scp" x="307.5" y="128.5"/>
<use href="#scp" x="218.5" y="177.5"/>
<use href="#scp" x="253.5" y="150.5"/>
<use href="#scp" x="262.5" y="149.5"/>
<use href="#scp" x="274.5" y="158.5"/>
</g>
<g stroke="#ffc800">
<use href="#scm" x="263.5" y="134.5"/>
</g>
<g stroke="#ffff00">
<use href="#scp" x="238.5" y="152.5"/>
<use href="#scp" x="246.5" y="146.5"/>
</g>
<g stroke="#ffee00">
<use href="#scp" x="263.5" y="173.5"/>
</g>
<g stroke="#ffff00">
<use href="#scp" x="259.5" y="144.5"/>
</g>
<g stroke="#ffa000">
<use href="#scp" x="262.5" y="100.5"/>
</g>
<g stroke="#ffc800">
<use href="#scp" x="254.5" y="111.5"/>
</g>
<g stroke="#ff8000">
<use href="#scm" x="242.5" y="105.5"/>
</g>
<g stroke="#ffa000">
<use href="#scp" x="277.5" y="107.5"/>
<use href="#scm" x="287.5" y="104.5"/>
<use href="#scp" x="262.5" y="98.5"/>
</g>
<g stroke="#ff8000">
<use href="#scm" x="235.5" y="108.5"/>
</g>
<g stroke="#ffc800">
<use href="#scm" x="248.5" y="96.5"/>
<use href="#scp" x="288.5" y="99.5"/>
</g>
<g stroke="#ffa000">
<use href="#scp" x="246.5" y="110.5"/>
<use href="#scm" x="284.5" y="111.5"/>
<use href="#scp" x="255.5" y="111.5"/>
<use href="#scm" x="234.5" y="115.5"/>
<use href="#scp" x="239.5" y="115.5"/>
<use href="#scm" x="250.5" y="104.5"/>
</g>
<g stroke="#ffc800">
<use href="#scm" x="254.5" y="113.5"/>
</g>
<g stroke="#ffa000">
<use href="#scm" x="261.5" y="108.5"/>
</g>
<g stroke="#ffc800">
<use href="#scp" x="271.5" y="113.5"/>
<use href="#scm" x="234.5" y="115.5"/>
</g>
<g stroke="#ff8000">
<use href="#scp" x="276.5" y="108.5"/>
<use href="#scm" x="254.5" y="110.5"/>
</g>
<g stroke="#ffa000">
<use href="#scp" x="268.5" y="93.5"/>
<use href="#scm" x="284.5" y="100.5"/>
<use href="#scp" x="256.5" y="107.5"/>
<use href="#scp" x="224.5" y="108.5"/>
<use href="#scp" x="259.5" y="96.5"/>
<use href="#scp" x="265.5" y="114.5"/>
<use href="#scm" x="249.5" y="107.5"/>
<use href="#scp" x="276.5" y="90.5"/>
<use href="#scp" x="258.5" y="108.5"/>
<use href="#scp" x="255.5" y="118.5"/>
</g>
<g stroke="#ff8000">
<use href="#scp" x="292.5" y="108.5"/>
<use href="#scp" x="243.5" y="114.5"/>
<use href="#scp" x="234.5" y="114.5"/>
</g>
<g stroke="#ffc800">
<use href="#scp" x="230.5" y="100.5"/>
</g>
<g stroke="#ffa000">
<use href="#scp" x="267.5" y="107.5"/>
</g>
<g stroke="#ff8000">
<use href="#scp" x="274.5" y="103.5"/>
<use href="#scp" x="238.5" y="102.5"/>
</g>
<g stroke="#ffc800">
<use href="#scp" x="262.5" y="102.5"/>
</g>
<g stroke="#ffa000">
<use href="#scp" x="272.5" y="103.5"/>
</g>
<g stroke="#ff8000">
<use href="#scm" x="253.5" y="101.5"/>
</g>
<g stroke="#ffa000">
<use href="#scm" x="237.5" y="112.5"/>
</g>
<g stroke="#ff8000">
<use href="#scp" x="269.5" y="98.5"/>
<use href="#scp" x="250.5" y="114.5"/>
</g>
<g stroke="#ffc800">
<use href="#scp" x="273.5" y="107.5"/>
</g>
<g stroke="#ffa000">
<use href="#scp" x="246.5" y="107.5"/>
</g>
<g stroke="#ffc800">
<use href="#scp" x="268.5" y="111.5"/>
<use href="#scp" x="276.5" y="114.5"/>
</g>
<g stroke="#ffa000">
<use href="#scp" x="262.5" y="108.5"/>
</g>
<g stroke="#ffc800">
<use href="#scm" x="262.5" y="107.5"/>
</g>
<g stroke="#ffff00">
<use href="#scp" x="278.5" y="157.5"/>
<use href="#scp" x="279.5" y="167.5"/>
<use href="#scp" x="286.5" y="169.5"/>
</g>
<g stroke="#ffc800">
<use href="#scp" x="297.5" y="131.5"/>
<use href="#scp" x="299.5" y="141.5"/>
<use href="#scp" x="294.5" y="167.5"/>
<use href="#scp" x="304.5" y="133.5"/>
<use href="#scp" x="289.5" y="157.5"/>
<use href="#scp" x="294.5" y="150.5"/>
</g>
<g stroke="#ffff00">
<use href="#scp" x="278.5" y="159.5"/>
<use href="#scp" x="294.5" y="146.5"/>
<use href="#scp" x="291.5" y="155.5"/>
</g>
<g stroke="#ffc800">
<use href="#scp" x="296.5" y="132.5"/>
</g>
<g stroke="#ffff00">
<use href="#scp" x="280.5" y="169.5"/>
<use href="#scp" x="296.5" y="165.5"/>
</g>
<g stroke="#ffc800">
<use href="#scp" x="289.5" y="153.5"/>
</g>
<g stroke="#ffff00">
<use href="#scp" x="289.5" y="166.5"/>
<use href="#scp" x="292.5" y="171.5"/>
<use href="#scp" x="280.5" y="161.5"/>
</g>
<g stroke="#ffc800">
<use href="#scp" x="285.5" y="158.5"/>
<use href="#scp" x="294.5" y="136.5"/>
</g>
<g stroke="#ffff00">
<use href="#scp" x="296.5" y="129.5"/>
</g>
<g stroke="#ffc800">
<use href="#scp" x="290.5" y="154.5"/>
<use href="#scp" x="307.5" y="141.5"/>
<use href="#scp" x="305.5" y="138.5"/>
<use href="#scp" x="286.5" y="144.5"/>
</g>
<g stroke="#ffff00">
<use href="#scp" x="293.5" y="137.5"/>
<use href="#scp" x="287.5" y="163.5"/>
<use href="#scp" x="285.5" y="167.5"/>
<use href="#scp" x="295.5" y="161.5"/>
<use href="#scp" x="286.5" y="136.5"/>
</g>
<g stroke="#ffc800">
<use href="#scp" x="298.5" y="129.5"/>
</g>
<g stroke="#ffff00">
<use href="#scp" x="282.5" y="141.5"/>
</g>
<g stroke="#ffc800">
<use href="#scp" x="292.5" y="131.5"/>
</g>
<g stroke="#ffff00">
<use href="#scp" x="295.5" y="129.5"/>
<use href="#scp" x="291.5" y="130.5"/>
</g>
<g stroke="#ffc800">
<use href="#scp" x="294.5" y="156.5"/>
<use href="#scp" x="293.5" y="145.5"/>
</g>
<g stroke="#ffff00">
<use href="#scp" x="294.5" y="139.5"/>
<use href="#scp" x="287.5" y="157.5"/>
<use href="#scm" x="9.5" y="65.5"/>
</g>
<g stroke="#ffc800">
<use href="#sp" x="57.5" y="88.5"/>
</g>
<g stroke="#ff8000">
<use href="#scp" x="43.5" y="106.5"/>
</g>
<g stroke="#ffa000">
<use href="#scm" x="72.5" y="114.5"/>
</g>
<g stroke="#00e0e0">
<use href="#scp" x="81.5" y="117.5"/>
</g>
<g stroke="#ffa000">
<use href="#sm" x="98.5" y="115.5"/>
</g>
<g stroke="#00e0e0">
<use href="#sp" x="73.5" y="141.5"/>
<use href="#scp" x="29.5" y="163.5"/>
</g>
<g stroke="#ffff00">
<use href="#sm" x="48.5" y="175.5"/>
<use href="#sp" x="194.5" y="256.5"/>
</g>
<g stroke="#ffc800">
<use href="#sp" x="126.5" y="266.5"/>
</g>
<g stroke="#ff8000">
<use href="#scm" x="332.5" y="10.5"/>
<use href="#scp" x="306.5" y="98.5"/>
<use href="#scp" x="316.5" y="108.5"/>
</g>
<g stroke="#ffff00">
<use href="#scp" x="290.5" y="109.5"/>
</g>
<g stroke="#ffc800">
<use href="#sp" x="304.5" y="110.5"/>
<use href="#scp" x="308.5" y="133.5"/>
<use href="#scp" x="323.5" y="132.5"/>
<use href="#scm" x="568.5" y="17.5"/>
</g>
<g stroke="#ff8000">
<use href="#sm" x="584.5" y="21.5"/>
</g>
<g stroke="#ffa000">
<use href="#sm" x="628.5" y="49.5"/>
<use href="#scp" x="585.5" y="99.5"/>
<use href="#scp" x="617.5" y="108.5"/>
</g>
<g stroke="#ffc800">
<use href="#scp" x="625.5" y="123.5"/>
<use href="#scp" x="631.5" y="121.5"/>
</g>
<g stroke="#ff8000">
<use href="#scp" x="639.5" y="127.5"/>
<use href="#scm" x="607.5" y="126.5"/>
</g>
<g stroke="#ffa000">
<use href="#scp" x="600.5" y="138.5"/>
<use href="#sm" x="502.5" y="127.5"/>
</g>
<g stroke="#ffff00">
<use href="#sm" x="621.5" y="147.5"/>
</g>
<g stroke="#ffc800">
<use href="#scp" x="623.5" y="156.5"/>
</g>
<g stroke="#ff6010">
<use href="#scp" x="631.5" y="160.5"/>
</g>
<g stroke="#ffa000">
<use href="#scp" x="601.5" y="166.5"/>
<use href="#sm" x="639.5" y="177.5"/>
</g>
<g stroke="#ffff00">
<use href="#scp" x="663.5" y="171.5"/>
</g>
<g stroke="#ffa000">
<use href="#scp" x="670.5" y="172.5"/>
</g>
<g stroke="#ffc800">
<use href="#scp" x="660.5" y="179.5"/>
<use href="#scp" x="650.5" y="182.5"/>
<use href="#scp" x="652.5" y="187.5"/>
</g>
<g stroke="#ff8000">
<use href="#sm" x="679.5" y="164.5"/>
<use href="#scp" x="687.5" y="189.5"/>
</g>
<g stroke="#ffff00">
<use href="#sm" x="694.5" y="194.5"/>
</g>
<g stroke="#ffa000">
<use href="#sm" x="625.5" y="197.5"/>
<use href="#scp" x="683.5" y="199.5"/>
</g>
<g stroke="#ffc800">
<use href="#scp" x="684.5" y="203.5"/>
</g>
<g stroke="#ffa000">
<use href="#sm" x="679.5" y="212.5"/>
</g>
<g stroke="#ff8000">
<use href="#scp" x="692.5" y="211.5"/>
</g>
<g stroke="#ffff00">
<use href="#scp" x="695.5" y="211.5"/>
</g>
<g stroke="#ffa000">
<use href="#sm" x="707.5" y="217.5"/>
</g>
<g stroke="#ff6010">
<use href="#scp" x="715.5" y="216.5"/>
</g>
<g stroke="#ffff00">
<use href="#scm" x="719.5" y="215.5"/>
</g>
<g stroke="#ff8000">
<use href="#sp" x="697.5" y="223.5"/>
<use href="#scp" x="720.5" y="226.5"/>
</g>
<g stroke="#ffff00">
<use href="#scp" x="724.5" y="223.5"/>
<use href="#scp" x="693.5" y="231.5"/>
</g>
<g stroke="#ffc800">
<use href="#scp" x="698.5" y="232.5"/>
</g>
<g stroke="#ffff00">
<use href="#scm" x="704.5" y="235.5"/>
</g>
<g stroke="#ffa000">
<use href="#sm" x="713.5" y="232.5"/>
</g>
<g stroke="#ff8000">
<use href="#sp" x="669.5" y="234.5"/>
</g>
<g stroke="#ffa000">
<use href="#sp" x="667.5" y="240.5"/>
</g>
<g stroke="#ffc800">
<use href="#sp" x="699.5" y="241.5"/>
</g>
<g stroke="#00e0e0">
<use href="#sm" x="669.5" y="248.5"/>
</g>
<g stroke="#ffa000">
<use href="#sm" x="714.5" y="254.5"/>
<use href="#sm" x="699.5" y="261.5"/>
<use href="#sp" x="765.5" y="168.5"/>
<use href="#sm" x="764.5" y="182.5"/>
</g>
<g stroke="#ff8000">
<use href="#scm" x="743.5" y="189.5"/>
<use href="#sm" x="753.5" y="213.5"/>
</g>
<g stroke="#ffa000">
<use href="#scp" x="786.5" y="214.5"/>
<use href="#scp" x="770.5" y="247.5"/>
<use href="#sm" x="696.5" y="255.5"/>
<use href="#sm" x="714.5" y="255.5"/>
</g>
<g stroke="#ff8000">
<use href="#scp" x="718.5" y="391.5"/>
<use href="#scm" x="658.5" y="413.5"/>
<use href="#scp" x="659.5" y="426.5"/>
<use href="#scp" x="716.5" y="415.5"/>
<use href="#scp" x="728.5" y="415.5"/>
</g>
<g stroke="#ffa000">
<use href="#sm" x="743.5" y="402.5"/>
<use href="#scp" x="768.5" y="395.5"/>
<use href="#scp" x="779.5" y="405.5"/>
<use href="#scp" x="789.5" y="405.5"/>
</g>
<g stroke="#ff6010">
<use href="#scp" x="789.5" y="412.5"/>
</g>
<g stroke="#ffff00">
<use href="#scp" x="794.5" y="417.5"/>
<use href="#sm" x="782.5" y="399.5"/>
</g>
<g stroke="#ffa000">
<use href="#sm" x="798.5" y="409.5"/>
<use href="#scp" x="793.5" y="519.5"/>
</g>
<g stroke="#ff8000">
<use href="#sm" x="493.5" y="601.5"/>
</g>
<g stroke="#ffff00">
<use href="#sm" x="545.5" y="599.5"/>
<use href="#scp" x="526.5" y="621.5"/>
</g>
<g stroke="#ff8000">
<use href="#scp" x="552.5" y="649.5"/>
</g>
<g stroke="#ffff00">
<use href="#scp" x="563.5" y="654.5"/>
</g>
<g stroke="#ff8000">
<use href="#scp" x="548.5" y="658.5"/>
<use href="#scp" x="563.5" y="662.5"/>
</g>
<g stroke="#ffff00">
<use href="#sm" x="574.5" y="651.5"/>
<use href="#sm" x="555.5" y="659.5"/>
<use href="#sm" x="558.5" y="669.5"/>
</g>
<g stroke="#ffa000">
<use href="#sm" x="546.5" y="670.5"/>
</g>
<g stroke="#ff8000">
<use href="#scp" x="580.5" y="680.5"/>
</g>
<g stroke="#ffff00">
<use href="#sm" x="572.5" y="680.5"/>
</g>
<g stroke="#ffa000">
<use href="#sm" x="565.5" y="684.5"/>
</g>
<g stroke="#ff8000">
<use href="#scm" x="530.5" y="688.5"/>
</g>
<g stroke="#ffa000">
<use href="#sm" x="522.5" y="693.5"/>
</g>
<g stroke="#ffff00">
<use href="#sm" x="514.5" y="684.5"/>
</g>
<g stroke="#ffa000">
<use href="#scp" x="537.5" y="701.5"/>
</g>
<g stroke="#ff6010">
<use href="#scp" x="516.5" y="712.5"/>
</g>
<g stroke="#ffff00">
<use href="#scp" x="553.5" y="706.5"/>
<use href="#scp" x="575.5" y="706.5"/>
<use href="#sm" x="600.5" y="702.5"/>
<use href="#scm" x="548.5" y="715.5"/>
<use href="#sm" x="563.5" y="714.5"/>
<use href="#sm" x="572.5" y="721.5"/>
</g>
<g stroke="#ffc800">
<use href="#sm" x="466.5" y="707.5"/>
</g>
<g stroke="#ffa000">
<use href="#sp" x="482.5" y="708.5"/>
</g>
<g stroke="#ff8000">
<use href="#scp" x="468.5" y="720.5"/>
</g>
<g stroke="#ffff00">
<use href="#sm" x="477.5" y="725.5"/>
<use href="#scp" x="504.5" y="721.5"/>
</g>
<g stroke="#ffc800">
<use href="#scp" x="532.5" y="724.5"/>
<use href="#scp" x="537.5" y="718.5"/>
<use href="#scp" x="509.5" y="730.5"/>
<use href="#scp" x="521.5" y="728.5"/>
<use href="#scp" x="518.5" y="735.5"/>
<use href="#scp" x="540.5" y="728.5"/>
</g>
<g stroke="#ffff00">
<use href="#scp" x="546.5" y="731.5"/>
</g>
<g stroke="#ffc800">
<use href="#scp" x="552.5" y="727.5"/>
<use href="#scp" x="558.5" y="733.5"/>
<use href="#scp" x="564.5" y="729.5"/>
<use href="#scp" x="570.5" y="734.5"/>
<use href="#scp" x="575.5" y="728.5"/>
<use href="#scp" x="549.5" y="736.5"/>
</g>
<g stroke="#ffa000">
<use href="#scp" x="560.5" y="737.5"/>
</g>
<g stroke="#ffc800">
<use href="#scp" x="568.5" y="737.5"/>
</g>
<g stroke="#ffa000">
<use href="#sm" x="501.5" y="736.5"/>
</g>
<g stroke="#ffff00">
<use href="#sm" x="558.5" y="743.5"/>
<use href="#sm" x="542.5" y="747.5"/>
</g>
<g stroke="#ffa000">
<use href="#scp" x="476.5" y="739.5"/>
</g>
<g stroke="#ffff00">
<use href="#scm" x="482.5" y="739.5"/>
<use href="#sm" x="470.5" y="746.5"/>
<use href="#sm" x="470.5" y="749.5"/>
</g>
<g stroke="#ffa000">
<use href="#sm" x="495.5" y="741.5"/>
<use href="#sm" x="521.5" y="749.5"/>
</g>
<g stroke="#ffc800">
<use href="#scp" x="497.5" y="750.5"/>
<use href="#scp" x="513.5" y="755.5"/>
</g>
<g stroke="#ff8000">
<use href="#scp" x="529.5" y="755.5"/>
</g>
<g stroke="#ffff00">
<use href="#sm" x="505.5" y="757.5"/>
</g>
<g stroke="#ffc800">
<use href="#scp" x="631.5" y="694.5"/>
</g>
<g stroke="#ffff00">
<use href="#sm" x="599.5" y="703.5"/>
</g>
<g stroke="#ff8000">
<use href="#scp" x="626.5" y="753.5"/>
</g>
<g stroke="#ffc800">
<use href="#scp" x="637.5" y="753.5"/>
</g>
<g stroke="#ff8000">
<use href="#scm" x="652.5" y="770.5"/>
</g>
<g stroke="#ffc800">
<use href="#scp" x="648.5" y="784.5"/>
</g>
<g stroke="#ff8000">
<use href="#sm" x="597.5" y="771.5"/>
</g>
<g stroke="#ffc800">
<use href="#scp" x="784.5" y="622.5"/>
</g>
<g stroke="#ff8000">
<use href="#sm" x="728.5" y="707.5"/>
<use href="#sm" x="796.5" y="570.5"/>
</g>
<g stroke="#ffc800">
<use href="#sm" x="463.5" y="707.5"/>
</g>
<g stroke="#ffa000">
<use href="#sm" x="432.5" y="763.5"/>
</g>
<g stroke="#ffff00">
<use href="#sm" x="462.5" y="761.5"/>
</g>
<g stroke="#ff8000">
<use href="#sm" x="471.5" y="781.5"/>
</g>
<g stroke="#ffa000">
<use href="#sm" x="523.5" y="766.5"/>
</g>
<g stroke="#ffff00">
<use href="#sm" x="482.5" y="767.5"/>
<use href="#sm" x="498.5" y="763.5"/>
</g>
<g stroke="#ffa000">
<use href="#sm" x="357.5" y="610.5"/>
</g>
<g stroke="#00e0e0">
<use href="#scp" x="252.5" y="124.5"/>
<use href="#scp" x="274.5" y="129.5"/>
<use href="#scp" x="280.5" y="148.5"/>
<use href="#scm" x="273.5" y="162.5"/>
<use href="#scp" x="233.5" y="181.5"/>
<use href="#sp" x="249.5" y="144.5"/>
<use href="#sm" x="252.5" y="160.5"/>
<use href="#sm" x="170.5" y="205.5"/>
</g>
<polygon points="227.5,143.7 245.1,123.8 261.5,144.9 242.8,166.0" fill="none" stroke="#ff2020" stroke-width="1.2" stroke-dasharray="5,4"/>
<polygon points="134.2,242.7 157.6,223.0 172.4,245.2 155.2,262.4" fill="none" stroke="#00ff00" stroke-width="1.2" stroke-dasharray="5,4"/>
<polygon points="657.7,179.6 672.5,159.9 692.2,177.1 677.4,196.8" fill="none" stroke="#00ff00" stroke-width="1.2" stroke-dasharray="5,4"/>
<polygon points="479.9,734.9 502.1,717.6 519.3,737.3 497.1,757.0" fill="none" stroke="#00ff00" stroke-width="1.2" stroke-dasharray="5,4"/>
<polyline points="250.3,679.7 253.8,691.7 250.3,705.5 241.7,715.9 233.1,726.2 224.5,729.7" fill="none" stroke="#000" stroke-width="1" stroke-dasharray="6,3"/>
<line x1="184.2" y1="84.7" x2="228.5" y2="129" stroke="#e0e0e0" stroke-width="1" shape-rendering="auto"/><text x="173.3" y="81.8" font-size="11.5" font-weight="400" fill="#f4f4f4" font-family="Liberation Sans" letter-spacing="0.6">L-6050</text><path d="M211.9,78.3h6M214.9,75.3v6" stroke="#ff2000" stroke-width="1.3"/><text x="218.9" y="81.8" font-size="11.5" font-weight="400" fill="#f4f4f4" font-family="Liberation Sans" letter-spacing="0.6">16</text><path d="M232.1,78.8l3,-4l3,4" fill="none" stroke="#ffff00"/>
<line x1="94.8" y1="183.6" x2="139.2" y2="229.2" stroke="#e0e0e0" stroke-width="1" shape-rendering="auto"/><text x="83.7" y="181.1" font-size="11.5" font-weight="400" fill="#f4f4f4" font-family="Liberation Sans" letter-spacing="0.6">S-321</text><path d="M116.0,177.6h6M119.0,174.6v6" stroke="#ff2000" stroke-width="1.3"/><text x="123.0" y="181.1" font-size="11.5" font-weight="400" fill="#f4f4f4" font-family="Liberation Sans" letter-spacing="0.6">3</text><path d="M129.8,175.1l3,4l3,-4" fill="none" stroke="#ffff00"/>
<line x1="614.1" y1="120.7" x2="658.4" y2="163.8" stroke="#e0e0e0" stroke-width="1" shape-rendering="auto"/><text x="603" y="117.7" font-size="11.5" font-weight="400" fill="#f4f4f4" font-family="Liberation Sans" letter-spacing="0.6">Y-1186</text><path d="M641.6,114.2h6M644.6,111.2v6" stroke="#ff2000" stroke-width="1.3"/><text x="648.6" y="117.7" font-size="11.5" font-weight="400" fill="#f4f4f4" font-family="Liberation Sans" letter-spacing="0.6">4</text><path d="M655.5,114.2h6" stroke="#ffff00"/>
<line x1="440.5" y1="680.7" x2="484.8" y2="725" stroke="#e0e0e0" stroke-width="1" shape-rendering="auto"/><text x="429.4" y="677.7" font-size="11.5" font-weight="400" fill="#f4f4f4" font-family="Liberation Sans" letter-spacing="0.6">I-1677</text><path d="M468.0,674.2h6M471.0,671.2v6" stroke="#ff2000" stroke-width="1.3"/><text x="475.0" y="677.7" font-size="11.5" font-weight="400" fill="#f4f4f4" font-family="Liberation Sans" letter-spacing="0.6">3</text><path d="M481.9,674.2h6" stroke="#ffff00"/>
</g>
</g>
<rect x="9" y="759" width="243" height="44" fill="#000" stroke="#a8a8a8" stroke-width="2"/>
<rect x="685" y="792" width="121" height="14" fill="#000"/>
<g stroke-width="1" shape-rendering="auto"><text x="13.3" y="771" font-family="Liberation Sans" font-size="9.6" fill="#e8e8e8" textLength="35.4" lengthAdjust="spacingAndGlyphs">Symbols</text>
<text x="53" y="771" font-family="Liberation Sans" font-size="9.6" fill="#e8e8e8">-CG</text>
<text x="78.1" y="771" font-family="Liberation Sans" font-size="9.6" fill="#e8e8e8">-IC</text>
<text x="98.9" y="771" font-family="Liberation Sans" font-size="9.6" fill="#e8e8e8">+CG</text>
<text x="124" y="771" font-family="Liberation Sans" font-size="9.6" fill="#e8e8e8">+IC</text>
<text x="153" y="771" font-family="Liberation Sans" font-size="9.6" fill="#e8e8e8" textLength="89.5" lengthAdjust="spacingAndGlyphs">Strike age color codes</text>
<text x="13.3" y="783.8" font-family="Liberation Sans" font-size="9.6" fill="#e8e8e8">Recent</text>
<text x="13.3" y="796.4" font-family="Liberation Sans" font-size="9.6" fill="#e8e8e8">Old</text>
<circle cx="60.5" cy="780.5" r="4" fill="none" stroke="#00e0e0"/><path d="M58.0,780.5H63.0" stroke="#00e0e0"/>
<path d="M82,780.5h7" stroke="#00e0e0"/>
<circle cx="110.5" cy="780.5" r="4" fill="none" stroke="#00e0e0"/><path d="M108.0,780.5H113.0M110.5,778.0V783.0" stroke="#00e0e0"/>
<path d="M131.5,780.5H139.5M135.5,776.5V784.5" stroke="#00e0e0"/>
<circle cx="60.5" cy="793.5" r="4" fill="none" stroke="#ffff00"/><path d="M58.0,793.5H63.0" stroke="#ffff00"/>
<path d="M82,793.5h7" stroke="#ffff00"/>
<circle cx="110.5" cy="793.5" r="4" fill="none" stroke="#ffff00"/><path d="M108.0,793.5H113.0M110.5,791.0V796.0" stroke="#ffff00"/>
<path d="M131.5,793.5H139.5M135.5,789.5V797.5" stroke="#ffff00"/>
<text x="153.5" y="783.8" font-family="Liberation Sans" font-size="9.6" fill="#e8e800">15+</text>
<text x="187.8" y="783.8" font-family="Liberation Sans" font-size="9.6" fill="#ffc000">30+</text>
<text x="222.8" y="783.8" font-family="Liberation Sans" font-size="9.6" fill="#ffb000">45+</text>
<text x="153.5" y="796.4" font-family="Liberation Sans" font-size="9.6" fill="#ff8000">60+</text>
<text x="187.8" y="796.4" font-family="Liberation Sans" font-size="9.6" fill="#ff6000">75+</text>
<text x="222.8" y="796.4" font-family="Liberation Sans" font-size="9.6" fill="#ff4000">90+</text>
<text x="689.3" y="801.6" font-family="Liberation Sans" font-size="9.5" fill="#f0f0f0">©2005 Astrogenic Systems</text></g>
</svg>
<div style="position:absolute;left:812px;top:8px;width:320px;height:320px;box-sizing:border-box;border:1px solid #d0d0d0;border-radius:5px;"></div>
<div style="position:absolute;left:812px;top:333px;width:320px;height:115px;box-sizing:border-box;border:1px solid #d0d0d0;border-radius:5px;"></div>
<div style="position:absolute;left:812px;top:454px;width:320px;height:349px;box-sizing:border-box;border:1px solid #d0d0d0;border-radius:5px;"></div>
<div style="position:absolute;left:819px;top:16px;width:58px;height:18px;box-sizing:border-box;background:#600000;border-top:1px solid #f0f0f0;border-left:1px solid #f0f0f0;border-bottom:1px solid #909090;border-right:1px solid #909090;"></div>
<div class="t" style="left:825px;top:19.02px;font-size:12.5px;color:#d8d8d8;font-weight:700;letter-spacing:0.3px;">STRIKE</div>
<div style="position:absolute;left:883px;top:16px;width:58px;height:18px;box-sizing:border-box;background:#333;border-top:1px solid #f0f0f0;border-left:1px solid #f0f0f0;border-bottom:1px solid #909090;border-right:1px solid #909090;"></div>
<div class="t" style="left:891px;top:19.02px;font-size:12.5px;color:#c8c8c8;font-weight:700;letter-spacing:0.7px;">NOISE</div>
<div style="position:absolute;left:994px;top:16px;width:128px;height:18px;box-sizing:border-box;background:#333;border-top:1px solid #f0f0f0;border-left:1px solid #f0f0f0;border-bottom:1px solid #909090;border-right:1px solid #909090;"></div>
<div class="t" style="left:999px;top:18.60px;font-size:13px;color:#ffffff;font-weight:700;letter-spacing:0.8px;">Bng 314°</div>
<div class="t" style="right:20px;top:18.60px;font-size:13px;color:#00ff00;font-weight:700;letter-spacing:0.8px;">230mi</div>
<div style="position:absolute;left:821px;top:64px;width:82px;height:16px;box-sizing:border-box;background:#666;border-top:1px solid #f0f0f0;border-left:1px solid #f0f0f0;border-bottom:1px solid #909090;border-right:1px solid #909090;"></div>
<div class="t" style="left:821px;width:83px;text-align:center;top:66.37px;font-size:11.5px;color:#e8e8e8;letter-spacing:0.6px">Strikes/min</div>
<div style="position:absolute;left:931px;top:64px;width:82px;height:16px;box-sizing:border-box;background:#666;border-top:1px solid #f0f0f0;border-left:1px solid #f0f0f0;border-bottom:1px solid #909090;border-right:1px solid #909090;"></div>
<div class="t" style="left:931px;width:83px;text-align:center;top:66.37px;font-size:11.5px;color:#e8e8e8;letter-spacing:0.6px">Close/min</div>
<div style="position:absolute;left:1041px;top:64px;width:82px;height:16px;box-sizing:border-box;background:#666;border-top:1px solid #f0f0f0;border-left:1px solid #f0f0f0;border-bottom:1px solid #909090;border-right:1px solid #909090;"></div>
<div class="t" style="left:1041px;width:83px;text-align:center;top:66.37px;font-size:11.5px;color:#e8e8e8;letter-spacing:0.6px">Noises/min</div>
<div class="t" style="right:235.5px;top:87.45px;font-size:29px;color:#ffffff;font-weight:700;letter-spacing:1.5px;">16</div>
<div class="t" style="right:125.5px;top:87.45px;font-size:29px;color:#ffffff;font-weight:700;letter-spacing:1.5px;">0</div>
<div class="t" style="right:15.5px;top:87.45px;font-size:29px;color:#c0c0c0;font-weight:700;letter-spacing:1.5px;">0</div>
<div class="t" style="right:235.5px;top:131.65px;font-size:14px;color:#e8e8e8;font-weight:400;">Total Strikes</div>
<div class="t" style="right:235.5px;top:149.45px;font-size:14px;color:#e8e8e8;font-weight:400;">1485</div>
<div class="t" style="right:125.5px;top:131.65px;font-size:14px;color:#e8e8e8;font-weight:400;">Total Close</div>
<div class="t" style="right:125.5px;top:149.45px;font-size:14px;color:#e8e8e8;font-weight:400;">0</div>
<div class="t" style="right:15.5px;top:131.65px;font-size:14px;color:#e8e8e8;font-weight:400;">Total Noises</div>
<div class="t" style="right:15.5px;top:149.45px;font-size:14px;color:#e8e8e8;font-weight:400;">72</div>
<div class="t" style="left:821px;top:203.27px;font-size:13.5px;color:#c0c0c0;font-weight:400;letter-spacing:0.5px;">Lightning type distribution</div>
<div style="position:absolute;left:821px;top:217px;width:302px;height:1px;box-sizing:border-box;background:#808080;"></div>
<div class="t" style="left:821px;top:225.00px;font-size:13px;color:#ffffff;font-weight:700;">Cloud-ground</div>
<div class="t" style="left:913px;top:225.00px;font-size:13px;color:#e8e8e8;font-weight:700;">+</div>
<div style="position:absolute;left:925px;top:227px;width:51px;height:11px;box-sizing:border-box;border:1px solid #888;border-radius:2px;background:#000;"></div>
<div style="position:absolute;left:926px;top:228px;width:23px;height:9px;box-sizing:border-box;background:#ff0000;"></div>
<div class="t" style="left:979px;top:225.00px;font-size:13px;color:#ffffff;font-weight:700;letter-spacing:0.5px;">46%</div>
<div style="position:absolute;left:1016px;top:231px;width:7px;height:2px;box-sizing:border-box;background:#c0c0c0;"></div>
<div style="position:absolute;left:1028px;top:227px;width:51px;height:11px;box-sizing:border-box;border:1px solid #888;border-radius:2px;background:#000;"></div>
<div style="position:absolute;left:1029px;top:228px;width:6px;height:9px;box-sizing:border-box;background:#99ccff;"></div>
<div class="t" style="left:1082px;top:225.00px;font-size:13px;color:#ffffff;font-weight:700;letter-spacing:0.5px;">12%</div>
<div class="t" style="left:821px;top:249.80px;font-size:13px;color:#c0c0c0;font-weight:700;letter-spacing:0.5px;">Count</div>
<div class="t" style="left:925px;top:249.80px;font-size:13px;color:#ffffff;font-weight:700;letter-spacing:0.5px;">685</div>
<div class="t" style="left:1028px;top:249.80px;font-size:13px;color:#ffffff;font-weight:700;letter-spacing:0.5px;">174</div>
<div class="t" style="left:821px;top:279.00px;font-size:13px;color:#ffffff;font-weight:700;">Intracloud</div>
<div class="t" style="left:913px;top:279.00px;font-size:13px;color:#e8e8e8;font-weight:700;">+</div>
<div style="position:absolute;left:925px;top:281px;width:51px;height:11px;box-sizing:border-box;border:1px solid #888;border-radius:2px;background:#000;"></div>
<div style="position:absolute;left:926px;top:282px;width:4px;height:9px;box-sizing:border-box;background:#e060a0;"></div>
<div class="t" style="left:979px;top:279.00px;font-size:13px;color:#ffffff;font-weight:700;letter-spacing:0.5px;">8%</div>
<div style="position:absolute;left:1016px;top:285px;width:7px;height:2px;box-sizing:border-box;background:#c0c0c0;"></div>
<div style="position:absolute;left:1028px;top:281px;width:51px;height:11px;box-sizing:border-box;border:1px solid #888;border-radius:2px;background:#000;"></div>
<div style="position:absolute;left:1029px;top:282px;width:17px;height:9px;box-sizing:border-box;background:#00ff00;"></div>
<div class="t" style="left:1082px;top:279.00px;font-size:13px;color:#ffffff;font-weight:700;letter-spacing:0.5px;">34%</div>
<div class="t" style="left:821px;top:303.80px;font-size:13px;color:#c0c0c0;font-weight:700;letter-spacing:0.5px;">Count</div>
<div class="t" style="left:925px;top:303.80px;font-size:13px;color:#ffffff;font-weight:700;letter-spacing:0.5px;">124</div>
<div class="t" style="left:1028px;top:303.80px;font-size:13px;color:#ffffff;font-weight:700;letter-spacing:0.5px;">502</div>
<div class="t" style="left:821px;top:338.26px;font-size:18px;color:#00ff00;font-weight:700;letter-spacing:1.15px;">10/24/2025 1:39:16 AM</div>
<div style="position:absolute;left:821px;top:358px;width:302px;height:1px;box-sizing:border-box;background:#808080;"></div>
<div class="t" style="left:821px;top:376.15px;font-size:14px;color:#ffffff;font-weight:400;">Squelch</div>
<div class="t" style="left:909.5px;top:376.15px;font-size:14px;color:#ffffff;font-weight:400;">0</div>
<div class="t" style="left:980.5px;top:376.15px;font-size:14px;color:#ffffff;font-weight:400;">Upload</div>
<div class="t" style="left:1061px;top:376.15px;font-size:14px;color:#c0c0c0;font-weight:400;">Disabled</div>
<div class="t" style="left:821px;top:396.15px;font-size:14px;color:#ffffff;font-weight:400;">Persistence</div>
<div class="t" style="left:909.5px;top:396.15px;font-size:14px;color:#ffffff;font-weight:400;">90 min</div>
<div class="t" style="left:980.5px;top:396.15px;font-size:14px;color:#ffffff;font-weight:400;">Capture</div>
<div class="t" style="left:1061px;top:396.15px;font-size:14px;color:#00ff00;font-weight:400;">Active</div>
<div class="t" style="left:821px;top:416.15px;font-size:14px;color:#ffffff;font-weight:400;">Range</div>
<div class="t" style="left:909.5px;top:416.15px;font-size:14px;color:#ffffff;font-weight:400;">313 mi</div>
<div class="t" style="left:980.5px;top:416.15px;font-size:14px;color:#ffffff;font-weight:400;">Receiver</div>
<div class="t" style="left:1061px;top:416.15px;font-size:14px;color:#00ff00;font-weight:400;">Enabled</div>
<div class="t" style="left:821px;top:463.15px;font-size:14px;color:#c0c0c0;font-weight:400;">Uptime</div>
<div class="t" style="left:910px;top:463.15px;font-size:14px;color:#ffffff;font-weight:400;">165:09</div>
<div class="t" style="left:981.5px;top:463.15px;font-size:14px;color:#c0c0c0;font-weight:400;">Peak time</div>
<div class="t" style="left:1061.5px;top:463.15px;font-size:14px;color:#c0c0c0;font-weight:400;">Plot</div>
<div class="t" style="left:821px;top:486.15px;font-size:14px;color:#c0c0c0;font-weight:400;">Peak rate</div>
<div class="t" style="left:910px;top:486.15px;font-size:14px;color:#ffffff;font-weight:400;">32/min</div>
<div class="t" style="left:981.5px;top:486.15px;font-size:14px;color:#ffffff;font-weight:400;">1:26 AM</div>
<div class="t" style="left:1061.5px;top:486.15px;font-size:14px;color:#ffffff;font-weight:400;">Strike</div>
<div class="t" style="left:822px;top:516.15px;font-size:14px;color:#c0c0c0;font-weight:400;">Trend graph</div>
<div class="t" style="left:909px;top:516.15px;font-size:14px;color:#ffffff;font-weight:400;">60 min</div>
<svg width="1138" height="812" style="position:absolute;left:0;top:0">
<polyline points="822.5,776.0 826.1,776.0 829.7,767.8 833.2,774.7 836.8,776.0 840.4,769.9 844.0,776.0 847.6,776.0 851.1,776.0 854.7,776.0 858.3,772.0 861.9,774.5 865.5,769.2 869.1,775.4 872.6,765.5 876.2,773.9 879.8,765.6 883.4,771.3 887.0,776.0 890.5,776.0 894.1,770.4 897.7,773.4 901.3,776.0 904.9,776.0 908.4,776.0 912.0,770.6 915.6,764.6 919.2,760.6 922.8,770.2 926.4,774.7 929.9,768.7 933.5,761.0 937.1,767.7 940.7,765.4 944.3,762.9 947.8,770.5 951.4,762.6 955.0,771.8 958.6,765.9 962.2,771.4 965.7,776.0 969.3,765.6 972.9,772.2 976.5,776.0 980.1,764.8 983.6,770.6 987.2,775.4 990.8,771.2 994.4,776.0 998.0,767.7 1001.6,774.2 1005.1,776.0 1008.7,765.7 1012.3,770.5 1015.9,776.0 1019.5,770.7 1023.0,761.2 1026.6,773.0 1030.2,776.0 1033.8,771.4 1037.4,776.0 1040.9,766.9 1044.5,776.0 1048.1,770.0 1051.7,776.0 1055.3,770.4 1058.9,776.0 1062.4,770.1 1066.0,766.2 1069.6,771.7 1073.2,768.4 1076.8,774.1 1080.3,769.7 1083.9,776.0 1087.5,776.0" fill="none" stroke="#ff66cc" stroke-width="1" shape-rendering="crispEdges"/>
<polyline points="822.5,776.0 825.8,776.0 829.1,763.2 832.4,776.0 835.8,776.0 839.1,759.0 842.4,772.3 845.7,752.6 849.0,773.1 852.3,756.4 855.6,769.9 858.9,774.3 862.2,753.9 865.6,763.4 868.9,776.0 872.2,762.5 875.5,773.1 878.8,776.0 882.1,776.0 885.4,756.7 888.8,770.3 892.1,757.4 895.4,765.1 898.7,776.0 902.0,776.0 905.3,763.4 908.6,749.3 911.9,762.0 915.2,750.7 918.6,743.2 921.9,766.1 925.2,753.6 928.5,768.1 931.8,751.4 935.1,768.3 938.4,752.7 941.8,765.2 945.1,751.2 948.4,766.8 951.7,757.6 955.0,776.0 958.3,754.6 961.6,776.0 964.9,765.9 968.2,747.7 971.6,761.3 974.9,772.6 978.2,766.1 981.5,776.0 984.8,776.0 988.1,768.4 991.4,776.0 994.8,776.0 998.1,760.9 1001.4,776.0 1004.7,754.7 1008.0,750.4 1011.3,772.3 1014.6,752.0 1017.9,770.9 1021.2,776.0 1024.6,765.0 1027.9,750.2 1031.2,772.3 1034.5,762.4 1037.8,776.0 1041.1,759.5 1044.4,743.2 1047.8,743.2 1051.1,767.3 1054.4,776.0 1057.7,763.3 1061.0,750.9 1064.3,770.2 1067.6,776.0 1070.9,776.0 1074.2,757.1 1077.6,765.8 1080.9,756.5 1084.2,743.9 1087.5,763.7" fill="none" stroke="#88ccff" stroke-width="1" shape-rendering="crispEdges"/>
<polyline points="822.5,771.3 825.8,771.3 829.1,747.6 832.4,763.0 835.8,771.3 839.1,748.1 842.4,769.5 845.7,771.3 849.0,746.3 852.3,771.3 855.6,771.3 858.9,771.3 862.2,771.3 865.6,729.3 868.9,764.9 872.2,737.0 875.5,761.1 878.8,743.3 882.1,709.8 885.4,705.6 888.8,747.0 892.1,716.2 895.4,738.0 898.7,714.0 902.0,744.7 905.3,722.8 908.6,752.2 911.9,733.2 915.2,756.3 918.6,724.0 921.9,707.4 925.2,705.6 928.5,729.1 931.8,767.2 935.1,771.3 938.4,728.8 941.8,705.6 945.1,750.1 948.4,717.3 951.7,762.4 955.0,726.4 958.3,758.6 961.6,727.5 964.9,762.7 968.2,739.3 971.6,770.3 974.9,747.0 978.2,771.3 981.5,738.4 984.8,762.4 988.1,745.0 991.4,771.3 994.8,745.5 998.1,771.3 1001.4,740.5 1004.7,771.3 1008.0,744.5 1011.3,771.3 1014.6,740.4 1017.9,722.5 1021.2,752.3 1024.6,771.3 1027.9,734.2 1031.2,719.0 1034.5,745.4 1037.8,726.5 1041.1,750.9 1044.4,727.3 1047.8,763.6 1051.1,748.5 1054.4,731.7 1057.7,760.8 1061.0,738.0 1064.3,753.2 1067.6,763.8 1070.9,771.3 1074.2,743.0 1077.6,756.6 1080.9,730.4 1084.2,705.6 1087.5,740.7" fill="none" stroke="#00ee00" stroke-width="1" shape-rendering="crispEdges"/>
<polyline points="822.5,761.9 825.8,761.9 829.1,737.5 832.4,707.3 835.8,744.0 839.1,708.6 842.4,731.3 845.7,752.4 849.0,714.1 852.3,704.8 855.6,741.5 858.9,710.5 862.2,736.1 865.6,719.6 868.9,701.4 872.2,696.3 875.5,741.3 878.8,752.6 882.1,719.3 885.4,735.6 888.8,760.1 892.1,730.3 895.4,761.9 898.7,742.0 902.0,727.5 905.3,739.7 908.6,751.5 911.9,734.4 915.2,761.9 918.6,731.6 921.9,754.9 925.2,737.0 928.5,753.0 931.8,761.9 935.1,740.8 938.4,712.3 941.8,748.4 945.1,761.9 948.4,728.2 951.7,712.0 955.0,732.9 958.3,756.8 961.6,729.7 964.9,749.8 968.2,761.9 971.6,717.4 974.9,738.8 978.2,723.4 981.5,742.6 984.8,758.1 988.1,724.3 991.4,708.2 994.8,696.3 998.1,733.1 1001.4,761.9 1004.7,720.2 1008.0,744.8 1011.3,761.9 1014.6,761.9 1017.9,761.9 1021.2,717.5 1024.6,741.4 1027.9,726.6 1031.2,758.7 1034.5,735.0 1037.8,760.6 1041.1,720.9 1044.4,744.8 1047.8,728.4 1051.1,743.9 1054.4,755.6 1057.7,761.9 1061.0,761.9 1064.3,717.5 1067.6,696.3 1070.9,727.5 1074.2,705.3 1077.6,696.3 1080.9,735.6 1084.2,761.0 1087.5,718.8" fill="none" stroke="#ff0000" stroke-width="1" shape-rendering="crispEdges"/>
<polyline points="822.3,724.6 822.7,692.2 823.8,712.1 825.5,701.6 826.9,705.8 828.6,699.5 830.1,701.6 831.3,697.4 832.6,663.9 833.8,682.8 835.3,674.4 836.8,693.2 838.4,707.9 840.1,720.4 841.6,695.3 843.2,692.2 844.7,700.6 846.4,695.3 848.1,693.2 849.5,682.8 851.0,673.4 852.7,689.1 854.3,714.2 856.2,680.7 858.3,673.4 860.0,699.5 861.5,710.0 863.1,684.9 865.2,682.8 867.3,695.3 869.0,712.1 871.1,691.1 873.2,674.4 875.3,680.7 877.4,691.1 879.0,687.0 880.9,674.4 882.4,682.8 884.1,699.5 886.1,697.4 887.8,703.7 889.5,724.6 891.0,707.9 892.4,699.5 894.1,682.8 895.6,691.1 897.0,670.2 898.7,689.1 900.4,701.6 902.5,695.3 905.0,670.2 907.1,691.1 909.2,699.5 911.3,710.0 913.3,701.6 915.9,697.4 918.0,680.7 920.3,659.8 921.7,687.0 923.4,705.8 925.5,678.6 927.6,665.0 929.7,674.4 931.8,682.8 933.9,687.0 935.9,684.9 938.5,672.3 940.5,663.9 942.2,655.6 944.1,682.8 945.8,707.9 947.5,737.2 949.3,701.6 951.0,682.8 953.1,678.6 955.6,670.2 957.3,650.3 960.0,669.9 962.2,727.5 963.7,718.6 965.5,720.9 967.7,716.4 970.0,676.5 972.2,642.2 973.9,678.7 976.2,723.1 977.7,716.4 979.9,707.6 982.2,676.5 984.4,651.0 986.6,676.5 988.8,694.3 991.0,709.8 993.2,676.5 995.5,655.5 997.7,694.3 999.9,720.9 1002.5,692.0 1005.0,674.3 1007.2,692.0 1009.9,718.6 1012.1,703.1 1014.7,693.1 1017.0,716.4 1019.2,703.1 1021.4,683.2 1024.9,664.3 1027.6,683.2 1029.4,716.4 1031.4,683.2 1033.6,626.6 1035.4,665.4 1037.6,685.4 1039.8,676.5 1042.7,705.3 1045.3,676.5 1048.7,664.3 1050.9,714.2 1053.1,716.4 1056.0,674.3 1058.6,676.5 1060.9,698.7 1063.5,669.9 1065.7,698.7 1068.0,716.4 1070.8,729.7 1073.1,698.7 1075.3,689.8 1078.6,676.5 1081.9,659.9 1084.8,683.2 1086.4,712.0 1087.9,723.1" fill="none" stroke="#ffffff" stroke-width="1" shape-rendering="crispEdges"/>
<path d="M822.5,777.5 H1088.5 M1088.5,542.5 V777.5" stroke="#c8c8c8" stroke-width="1" fill="none"/>
<path d="M1084,542.5 H1088.5" stroke="#c8c8c8" stroke-width="1"/>
<text x="1092" y="547.0" font-size="12" fill="#c8c8c8" font-family="Liberation Sans">50</text>
<path d="M1084,589.4 H1088.5" stroke="#c8c8c8" stroke-width="1"/>
<text x="1092" y="593.9" font-size="12" fill="#c8c8c8" font-family="Liberation Sans">40</text>
<path d="M1084,636.3 H1088.5" stroke="#c8c8c8" stroke-width="1"/>
<text x="1092" y="640.8" font-size="12" fill="#c8c8c8" font-family="Liberation Sans">30</text>
<path d="M1084,683.2 H1088.5" stroke="#c8c8c8" stroke-width="1"/>
<text x="1092" y="687.7" font-size="12" fill="#c8c8c8" font-family="Liberation Sans">20</text>
<path d="M1084,730.1 H1088.5" stroke="#c8c8c8" stroke-width="1"/>
<path d="M822.5,774 V777.5" stroke="#c8c8c8" stroke-width="1"/>
<text x="820.5" y="792.9" font-size="12" fill="#c8c8c8" font-family="Liberation Sans">60</text>
<path d="M866.8,774 V777.5" stroke="#c8c8c8" stroke-width="1"/>
<text x="864.8" y="792.9" font-size="12" fill="#c8c8c8" font-family="Liberation Sans">50</text>
<path d="M911.2,774 V777.5" stroke="#c8c8c8" stroke-width="1"/>
<text x="909.2" y="792.9" font-size="12" fill="#c8c8c8" font-family="Liberation Sans">40</text>
<path d="M955.5,774 V777.5" stroke="#c8c8c8" stroke-width="1"/>
<text x="953.5" y="792.9" font-size="12" fill="#c8c8c8" font-family="Liberation Sans">30</text>
<path d="M999.8,774 V777.5" stroke="#c8c8c8" stroke-width="1"/>
<text x="997.8" y="792.9" font-size="12" fill="#c8c8c8" font-family="Liberation Sans">20</text>
<path d="M1044.2,774 V777.5" stroke="#c8c8c8" stroke-width="1"/>
<text x="1042.2" y="792.9" font-size="12" fill="#c8c8c8" font-family="Liberation Sans">10</text>
<path d="M1088.5,774 V777.5" stroke="#c8c8c8" stroke-width="1"/>
<text x="1086.5" y="792.9" font-size="12" fill="#c8c8c8" font-family="Liberation Sans">0</text>
<text x="1100.4" y="792.9" font-size="12" fill="#c8c8c8" font-family="Liberation Sans">min</text>
</svg>
</body></html>
